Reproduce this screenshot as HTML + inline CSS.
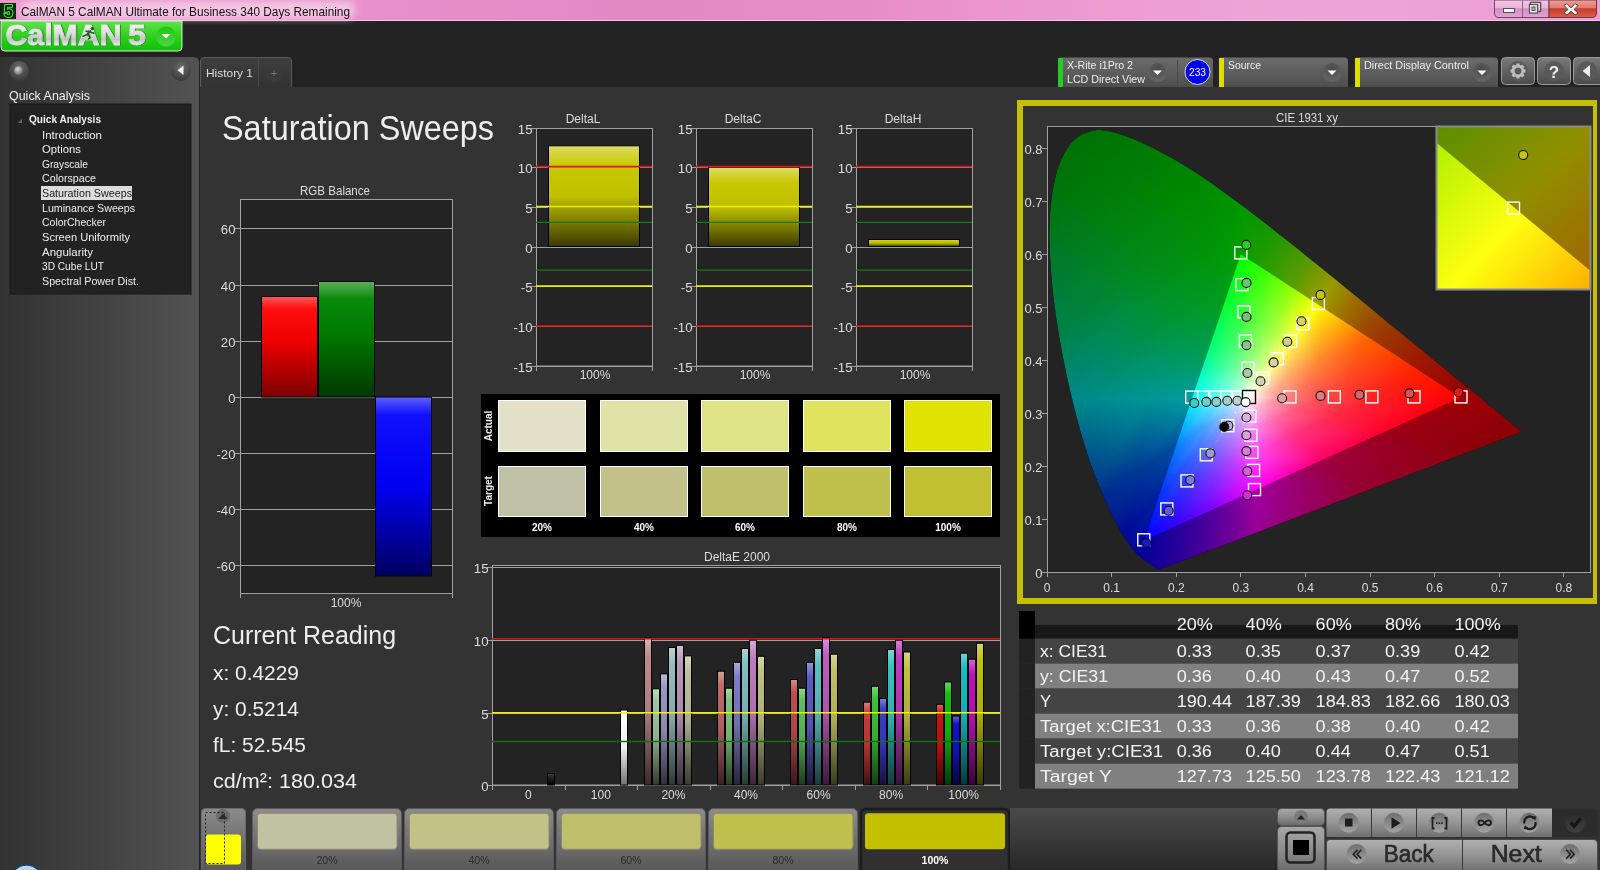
<!DOCTYPE html>
<html><head><meta charset="utf-8"><title>CalMAN 5</title>
<style>html,body{margin:0;padding:0;background:#232323;overflow:hidden;width:1600px;height:870px}svg{display:block}text{font-family:"Liberation Sans", sans-serif}.pl{mix-blend-mode:plus-lighter}</style></head>
<body><svg width="1600" height="870" viewBox="0 0 1600 870" style='font-family:"Liberation Sans", sans-serif'>
<defs><linearGradient id="gTitle" x1="0" y1="0" x2="1" y2="0"><stop offset="0" stop-color="#ea98cf"/><stop offset="0.25" stop-color="#e78fca"/><stop offset="0.4" stop-color="#e488c4"/><stop offset="0.55" stop-color="#e98dc9"/><stop offset="0.65" stop-color="#ec98d0"/><stop offset="0.8" stop-color="#eea4d6"/><stop offset="1" stop-color="#ee9ed4"/></linearGradient><linearGradient id="gGlow" x1="0" y1="0" x2="1" y2="0"><stop offset="0" stop-color="#f3c2e2"/><stop offset="0.85" stop-color="#f2bfe0"/><stop offset="1" stop-color="#f2bfe0"/></linearGradient><filter id="fBlur" x="-0.1" y="-1" width="1.2" height="3"><feGaussianBlur stdDeviation="4 3"/></filter><linearGradient id="gWB" x1="0" y1="0" x2="0" y2="1"><stop offset="0" stop-color="#f4c6e6"/><stop offset="0.45" stop-color="#eab2da"/><stop offset="0.5" stop-color="#d68ec0"/><stop offset="1" stop-color="#e2a2d2"/></linearGradient><linearGradient id="gWC" x1="0" y1="0" x2="0" y2="1"><stop offset="0" stop-color="#f0a0a0"/><stop offset="0.45" stop-color="#e07a6a"/><stop offset="0.5" stop-color="#c83a2a"/><stop offset="1" stop-color="#d86050"/></linearGradient><linearGradient id="gLogo" x1="0" y1="0" x2="0" y2="1"><stop offset="0" stop-color="#62e24e"/><stop offset="0.5" stop-color="#2ed01e"/><stop offset="1" stop-color="#10c008"/></linearGradient><linearGradient id="gSilver" gradientUnits="userSpaceOnUse" x1="0" y1="23" x2="0" y2="45"><stop offset="0" stop-color="#f4f4f4"/><stop offset="0.5" stop-color="#dcdcdc"/><stop offset="0.75" stop-color="#c4c4c4"/><stop offset="1" stop-color="#e8e8e8"/></linearGradient><linearGradient id="gLD" x1="0" y1="0" x2="0" y2="1"><stop offset="0" stop-color="#18c810"/><stop offset="1" stop-color="#50d848"/></linearGradient><linearGradient id="gSide" x1="0" y1="0" x2="1" y2="0"><stop offset="0" stop-color="#323232"/><stop offset="1" stop-color="#535353"/></linearGradient><radialGradient id="gBtnC" cx="0.5" cy="0.3" r="0.7"><stop offset="0" stop-color="#6a6a6a"/><stop offset="1" stop-color="#3a3a3a"/></radialGradient><radialGradient id="gBall" cx="0.4" cy="0.35" r="0.7"><stop offset="0" stop-color="#d8d8d8"/><stop offset="1" stop-color="#6a6a6a"/></radialGradient><linearGradient id="gTab" x1="0" y1="0" x2="0" y2="1"><stop offset="0" stop-color="#3e3e3e"/><stop offset="1" stop-color="#333333"/></linearGradient><linearGradient id="gDev" x1="0" y1="0" x2="0" y2="1"><stop offset="0" stop-color="#6c6c6c"/><stop offset="1" stop-color="#4e4e4e"/></linearGradient><radialGradient id="gDD" cx="0.5" cy="0.3" r="0.7"><stop offset="0" stop-color="#4a4a4a"/><stop offset="1" stop-color="#666"/></radialGradient><linearGradient id="gSq" x1="0" y1="0" x2="0" y2="1"><stop offset="0" stop-color="#7a7a7a"/><stop offset="1" stop-color="#4a4a4a"/></linearGradient><linearGradient id="gRed" x1="0" y1="0" x2="0" y2="1"><stop offset="0" stop-color="#ff5a5a"/><stop offset="0.12" stop-color="#ff1010"/><stop offset="0.45" stop-color="#ee0000"/><stop offset="1" stop-color="#7a0000"/></linearGradient><linearGradient id="gGrn" x1="0" y1="0" x2="0" y2="1"><stop offset="0" stop-color="#5cb05c"/><stop offset="0.15" stop-color="#0a8a0a"/><stop offset="0.45" stop-color="#007a00"/><stop offset="1" stop-color="#003800"/></linearGradient><linearGradient id="gBlu" x1="0" y1="0" x2="0" y2="1"><stop offset="0" stop-color="#6060ff"/><stop offset="0.1" stop-color="#1010ff"/><stop offset="0.5" stop-color="#0000f0"/><stop offset="1" stop-color="#000060"/></linearGradient><linearGradient id="gYel" x1="0" y1="0" x2="0" y2="1"><stop offset="0" stop-color="#dcdc66"/><stop offset="0.2" stop-color="#c8c800"/><stop offset="0.5" stop-color="#c0c000"/><stop offset="1" stop-color="#3a3a00"/></linearGradient><linearGradient id="gb1" x1="0" y1="0" x2="0" y2="1"><stop offset="0" stop-color="#d6b3b3"/><stop offset="0.12" stop-color="#c08a8a"/><stop offset="0.5" stop-color="#ad7c7c"/><stop offset="1" stop-color="#3a2929"/></linearGradient><linearGradient id="gb2" x1="0" y1="0" x2="0" y2="1"><stop offset="0" stop-color="#c1d9c1"/><stop offset="0.12" stop-color="#a0c4a0"/><stop offset="0.5" stop-color="#90b090"/><stop offset="1" stop-color="#303b30"/></linearGradient><linearGradient id="gb3" x1="0" y1="0" x2="0" y2="1"><stop offset="0" stop-color="#bcbcd9"/><stop offset="0.12" stop-color="#9898c4"/><stop offset="0.5" stop-color="#8989b0"/><stop offset="1" stop-color="#2e2e3b"/></linearGradient><linearGradient id="gb4" x1="0" y1="0" x2="0" y2="1"><stop offset="0" stop-color="#bcd3d3"/><stop offset="0.12" stop-color="#98bcbc"/><stop offset="0.5" stop-color="#89a9a9"/><stop offset="1" stop-color="#2e3838"/></linearGradient><linearGradient id="gb5" x1="0" y1="0" x2="0" y2="1"><stop offset="0" stop-color="#d3bcd3"/><stop offset="0.12" stop-color="#bc98bc"/><stop offset="0.5" stop-color="#a989a9"/><stop offset="1" stop-color="#382e38"/></linearGradient><linearGradient id="gb6" x1="0" y1="0" x2="0" y2="1"><stop offset="0" stop-color="#d6d6c1"/><stop offset="0.12" stop-color="#c0c0a0"/><stop offset="0.5" stop-color="#adad90"/><stop offset="1" stop-color="#3a3a30"/></linearGradient><linearGradient id="gb7" x1="0" y1="0" x2="0" y2="1"><stop offset="0" stop-color="#d69e9e"/><stop offset="0.12" stop-color="#c06a6a"/><stop offset="0.5" stop-color="#ad5f5f"/><stop offset="1" stop-color="#3a2020"/></linearGradient><linearGradient id="gb8" x1="0" y1="0" x2="0" y2="1"><stop offset="0" stop-color="#acd9ac"/><stop offset="0.12" stop-color="#80c480"/><stop offset="0.5" stop-color="#73b073"/><stop offset="1" stop-color="#263b26"/></linearGradient><linearGradient id="gb9" x1="0" y1="0" x2="0" y2="1"><stop offset="0" stop-color="#aaaadb"/><stop offset="0.12" stop-color="#7c7cc8"/><stop offset="0.5" stop-color="#7070b4"/><stop offset="1" stop-color="#25253c"/></linearGradient><linearGradient id="gb10" x1="0" y1="0" x2="0" y2="1"><stop offset="0" stop-color="#acd6d6"/><stop offset="0.12" stop-color="#80c0c0"/><stop offset="0.5" stop-color="#73adad"/><stop offset="1" stop-color="#263a3a"/></linearGradient><linearGradient id="gb11" x1="0" y1="0" x2="0" y2="1"><stop offset="0" stop-color="#d6aad6"/><stop offset="0.12" stop-color="#c07cc0"/><stop offset="0.5" stop-color="#ad70ad"/><stop offset="1" stop-color="#3a253a"/></linearGradient><linearGradient id="gb12" x1="0" y1="0" x2="0" y2="1"><stop offset="0" stop-color="#d6d6af"/><stop offset="0.12" stop-color="#c0c084"/><stop offset="0.5" stop-color="#adad77"/><stop offset="1" stop-color="#3a3a28"/></linearGradient><linearGradient id="gb13" x1="0" y1="0" x2="0" y2="1"><stop offset="0" stop-color="#d68c8c"/><stop offset="0.12" stop-color="#c04e4e"/><stop offset="0.5" stop-color="#ad4646"/><stop offset="1" stop-color="#3a1717"/></linearGradient><linearGradient id="gb14" x1="0" y1="0" x2="0" y2="1"><stop offset="0" stop-color="#95d695"/><stop offset="0.12" stop-color="#5cc05c"/><stop offset="0.5" stop-color="#53ad53"/><stop offset="1" stop-color="#1c3a1c"/></linearGradient><linearGradient id="gb15" x1="0" y1="0" x2="0" y2="1"><stop offset="0" stop-color="#9595db"/><stop offset="0.12" stop-color="#5c5cc8"/><stop offset="0.5" stop-color="#5353b4"/><stop offset="1" stop-color="#1c1c3c"/></linearGradient><linearGradient id="gb16" x1="0" y1="0" x2="0" y2="1"><stop offset="0" stop-color="#95d6d6"/><stop offset="0.12" stop-color="#5cc0c0"/><stop offset="0.5" stop-color="#53adad"/><stop offset="1" stop-color="#1c3a3a"/></linearGradient><linearGradient id="gb17" x1="0" y1="0" x2="0" y2="1"><stop offset="0" stop-color="#d695d6"/><stop offset="0.12" stop-color="#c05cc0"/><stop offset="0.5" stop-color="#ad53ad"/><stop offset="1" stop-color="#3a1c3a"/></linearGradient><linearGradient id="gb18" x1="0" y1="0" x2="0" y2="1"><stop offset="0" stop-color="#d6d699"/><stop offset="0.12" stop-color="#c0c062"/><stop offset="0.5" stop-color="#adad58"/><stop offset="1" stop-color="#3a3a1d"/></linearGradient><linearGradient id="gb19" x1="0" y1="0" x2="0" y2="1"><stop offset="0" stop-color="#db8080"/><stop offset="0.12" stop-color="#c83c3c"/><stop offset="0.5" stop-color="#b43636"/><stop offset="1" stop-color="#3c1212"/></linearGradient><linearGradient id="gb20" x1="0" y1="0" x2="0" y2="1"><stop offset="0" stop-color="#80d680"/><stop offset="0.12" stop-color="#3cc03c"/><stop offset="0.5" stop-color="#36ad36"/><stop offset="1" stop-color="#123a12"/></linearGradient><linearGradient id="gb21" x1="0" y1="0" x2="0" y2="1"><stop offset="0" stop-color="#8080db"/><stop offset="0.12" stop-color="#3c3cc8"/><stop offset="0.5" stop-color="#3636b4"/><stop offset="1" stop-color="#12123c"/></linearGradient><linearGradient id="gb22" x1="0" y1="0" x2="0" y2="1"><stop offset="0" stop-color="#80d6d6"/><stop offset="0.12" stop-color="#3cc0c0"/><stop offset="0.5" stop-color="#36adad"/><stop offset="1" stop-color="#123a3a"/></linearGradient><linearGradient id="gb23" x1="0" y1="0" x2="0" y2="1"><stop offset="0" stop-color="#d680d6"/><stop offset="0.12" stop-color="#c03cc0"/><stop offset="0.5" stop-color="#ad36ad"/><stop offset="1" stop-color="#3a123a"/></linearGradient><linearGradient id="gb24" x1="0" y1="0" x2="0" y2="1"><stop offset="0" stop-color="#d6d683"/><stop offset="0.12" stop-color="#c0c040"/><stop offset="0.5" stop-color="#adad3a"/><stop offset="1" stop-color="#3a3a13"/></linearGradient><linearGradient id="gb25" x1="0" y1="0" x2="0" y2="1"><stop offset="0" stop-color="#e06464"/><stop offset="0.12" stop-color="#d01010"/><stop offset="0.5" stop-color="#bb0e0e"/><stop offset="1" stop-color="#3e0505"/></linearGradient><linearGradient id="gb26" x1="0" y1="0" x2="0" y2="1"><stop offset="0" stop-color="#64d664"/><stop offset="0.12" stop-color="#10c010"/><stop offset="0.5" stop-color="#0ead0e"/><stop offset="1" stop-color="#053a05"/></linearGradient><linearGradient id="gb27" x1="0" y1="0" x2="0" y2="1"><stop offset="0" stop-color="#6464e0"/><stop offset="0.12" stop-color="#1010d0"/><stop offset="0.5" stop-color="#0e0ebb"/><stop offset="1" stop-color="#05053e"/></linearGradient><linearGradient id="gb28" x1="0" y1="0" x2="0" y2="1"><stop offset="0" stop-color="#64d6d6"/><stop offset="0.12" stop-color="#10c0c0"/><stop offset="0.5" stop-color="#0eadad"/><stop offset="1" stop-color="#053a3a"/></linearGradient><linearGradient id="gb29" x1="0" y1="0" x2="0" y2="1"><stop offset="0" stop-color="#d664d6"/><stop offset="0.12" stop-color="#c010c0"/><stop offset="0.5" stop-color="#ad0ead"/><stop offset="1" stop-color="#3a053a"/></linearGradient><linearGradient id="gb30" x1="0" y1="0" x2="0" y2="1"><stop offset="0" stop-color="#d6d664"/><stop offset="0.12" stop-color="#c0c010"/><stop offset="0.5" stop-color="#adad0e"/><stop offset="1" stop-color="#3a3a05"/></linearGradient><linearGradient id="gbW" x1="0" y1="0" x2="0" y2="1"><stop offset="0" stop-color="#ffffff"/><stop offset="0.5" stop-color="#f0f0f0"/><stop offset="1" stop-color="#707070"/></linearGradient><linearGradient id="gbK" x1="0" y1="0" x2="0" y2="1"><stop offset="0" stop-color="#3a3a3a"/><stop offset="1" stop-color="#000"/></linearGradient><clipPath id="cpLoc"><path d="M1159.6,569.6 C1159.5,569.7 1159.5,569.7 1159.4,569.7 C1159.3,569.7 1159.2,569.7 1159.1,569.8 C1158.9,569.8 1158.8,569.8 1158.6,569.8 C1158.4,569.7 1158.1,569.7 1157.8,569.6 C1157.6,569.5 1157.4,569.4 1157.1,569.2 C1156.8,569.1 1156.6,568.9 1156.2,568.6 C1155.8,568.4 1155.4,568.1 1154.9,567.7 C1154.4,567.4 1153.9,567.0 1153.3,566.5 C1152.7,566.1 1152.0,565.6 1151.2,565.0 C1150.3,564.4 1149.4,563.7 1148.3,562.9 C1147.2,562.1 1146.0,561.3 1144.6,560.3 C1143.3,559.2 1141.8,558.1 1140.1,556.6 C1138.5,555.0 1136.8,553.6 1134.6,551.2 C1132.5,548.7 1130.1,545.8 1127.3,541.7 C1124.5,537.5 1121.4,532.9 1117.9,526.3 C1114.4,519.7 1110.5,512.0 1106.1,502.0 C1101.7,491.9 1096.4,480.3 1091.5,465.9 C1086.5,451.6 1081.3,434.7 1076.4,415.9 C1071.6,397.2 1066.3,375.1 1062.3,353.6 C1058.3,332.1 1054.5,308.3 1052.4,286.9 C1050.3,265.6 1049.0,244.0 1049.6,225.3 C1050.2,206.5 1052.3,188.6 1056.1,174.7 C1059.8,160.8 1065.7,149.3 1072.2,141.9 C1078.7,134.6 1087.0,131.6 1095.1,130.4 C1103.2,129.1 1112.2,131.9 1120.9,134.4 C1129.5,136.9 1138.6,141.2 1147.0,145.2 C1155.5,149.1 1163.6,153.5 1171.7,158.1 C1179.8,162.6 1187.6,167.5 1195.4,172.5 C1203.3,177.6 1211.1,182.9 1218.8,188.4 C1226.6,193.9 1234.2,199.6 1241.9,205.4 C1249.6,211.2 1257.3,217.1 1265.0,223.1 C1272.7,229.1 1280.4,235.2 1288.1,241.3 C1295.8,247.4 1303.5,253.6 1311.1,259.8 C1318.8,266.0 1326.4,272.2 1334.0,278.3 C1341.5,284.4 1349.0,290.6 1356.4,296.6 C1363.8,302.6 1371.1,308.6 1378.2,314.4 C1385.3,320.2 1392.3,326.0 1399.0,331.5 C1405.8,337.0 1412.4,342.4 1418.7,347.5 C1424.9,352.6 1431.0,357.6 1436.6,362.2 C1442.2,366.7 1447.3,370.9 1452.1,374.9 C1457.0,378.9 1461.7,382.7 1465.8,386.1 C1470.0,389.5 1473.8,392.5 1477.2,395.3 C1480.6,398.1 1483.7,400.6 1486.4,402.9 C1489.2,405.1 1491.6,407.1 1493.8,408.9 C1496.0,410.7 1497.9,412.2 1499.7,413.7 C1501.5,415.1 1503.0,416.4 1504.4,417.5 C1505.8,418.7 1507.1,419.8 1508.3,420.8 C1509.5,421.8 1510.6,422.6 1511.6,423.4 C1512.5,424.2 1513.4,424.9 1514.2,425.5 C1514.9,426.1 1515.3,426.5 1516.1,427.1 C1516.8,427.7 1517.9,428.5 1518.7,429.2 C1519.5,429.9 1520.4,430.6 1520.9,431.0 C1521.4,431.4 1521.6,431.6 1521.7,431.7 Z"/></clipPath><linearGradient id="g1" gradientUnits="userSpaceOnUse" x1="1249.10" y1="397.93" x2="1258.59" y2="383.37"><stop stop-color="#ffffff"/><stop offset="1"/></linearGradient><linearGradient id="g2" gradientUnits="userSpaceOnUse" x1="1280.82" y1="397.85" x2="1279.71" y2="392.05"><stop stop-color="#ff8b8b"/><stop offset="1"/></linearGradient><linearGradient id="g3" gradientUnits="userSpaceOnUse" x1="1273.69" y1="393.21" x2="1273.70" y2="397.87"><stop stop-color="#ffa99a"/><stop offset="1"/></linearGradient><linearGradient id="g4" gradientUnits="userSpaceOnUse" x1="1280.82" y1="397.85" x2="1293.47" y2="378.44"><stop stop-color="#ff8b8b"/><stop offset="1"/></linearGradient><linearGradient id="g5" gradientUnits="userSpaceOnUse" x1="1323.11" y1="397.74" x2="1316.64" y2="382.57"><stop stop-color="#ff4848"/><stop offset="1"/></linearGradient><linearGradient id="g6" gradientUnits="userSpaceOnUse" x1="1306.48" y1="386.91" x2="1306.50" y2="397.79"><stop stop-color="#ff6f55"/><stop offset="1"/></linearGradient><linearGradient id="g7" gradientUnits="userSpaceOnUse" x1="1280.82" y1="397.85" x2="1279.71" y2="392.05"><stop stop-color="#ff8b8b"/><stop offset="1"/></linearGradient><linearGradient id="g8" gradientUnits="userSpaceOnUse" x1="1306.48" y1="386.91" x2="1293.83" y2="406.32"><stop stop-color="#ff6f55"/><stop offset="1"/></linearGradient><linearGradient id="g9" gradientUnits="userSpaceOnUse" x1="1273.69" y1="393.21" x2="1276.46" y2="399.71"><stop stop-color="#ffa99a"/><stop offset="1"/></linearGradient><linearGradient id="g10" gradientUnits="userSpaceOnUse" x1="1323.11" y1="397.74" x2="1338.92" y2="373.48"><stop stop-color="#ff4848"/><stop offset="1"/></linearGradient><linearGradient id="g11" gradientUnits="userSpaceOnUse" x1="1375.97" y1="397.61" x2="1356.41" y2="372.16"><stop stop-color="#ff2020"/><stop offset="1"/></linearGradient><linearGradient id="g12" gradientUnits="userSpaceOnUse" x1="1347.45" y1="379.04" x2="1347.50" y2="397.68"><stop stop-color="#ff4727"/><stop offset="1"/></linearGradient><linearGradient id="g13" gradientUnits="userSpaceOnUse" x1="1323.11" y1="397.74" x2="1320.51" y2="384.21"><stop stop-color="#ff4848"/><stop offset="1"/></linearGradient><linearGradient id="g14" gradientUnits="userSpaceOnUse" x1="1347.45" y1="379.04" x2="1331.64" y2="403.31"><stop stop-color="#ff4727"/><stop offset="1"/></linearGradient><linearGradient id="g15" gradientUnits="userSpaceOnUse" x1="1306.48" y1="386.91" x2="1317.88" y2="401.76"><stop stop-color="#ff6f55"/><stop offset="1"/></linearGradient><linearGradient id="g16" gradientUnits="userSpaceOnUse" x1="1375.97" y1="397.61" x2="1401.26" y2="358.78"><stop stop-color="#ff2020"/><stop offset="1"/></linearGradient><linearGradient id="g17" gradientUnits="userSpaceOnUse" x1="1460.54" y1="397.40" x2="1425.60" y2="355.86"><stop stop-color="#ff0000"/><stop offset="1"/></linearGradient><linearGradient id="g18" gradientUnits="userSpaceOnUse" x1="1413.02" y1="366.44" x2="1413.10" y2="397.52"><stop stop-color="#ff2600"/><stop offset="1"/></linearGradient><linearGradient id="g19" gradientUnits="userSpaceOnUse" x1="1375.97" y1="397.61" x2="1371.51" y2="374.42"><stop stop-color="#ff2020"/><stop offset="1"/></linearGradient><linearGradient id="g20" gradientUnits="userSpaceOnUse" x1="1413.02" y1="366.44" x2="1387.72" y2="405.27"><stop stop-color="#ff2600"/><stop offset="1"/></linearGradient><linearGradient id="g21" gradientUnits="userSpaceOnUse" x1="1347.45" y1="379.04" x2="1368.42" y2="403.96"><stop stop-color="#ff4727"/><stop offset="1"/></linearGradient><linearGradient id="g22" gradientUnits="userSpaceOnUse" x1="1249.10" y1="397.93" x2="1258.59" y2="383.37"><stop stop-color="#ffffff"/><stop offset="1"/></linearGradient><linearGradient id="g23" gradientUnits="userSpaceOnUse" x1="1273.69" y1="393.21" x2="1270.16" y2="386.63"><stop stop-color="#ffa99a"/><stop offset="1"/></linearGradient><linearGradient id="g24" gradientUnits="userSpaceOnUse" x1="1266.56" y1="388.56" x2="1267.68" y2="394.36"><stop stop-color="#ffcfad"/><stop offset="1"/></linearGradient><linearGradient id="g25" gradientUnits="userSpaceOnUse" x1="1273.69" y1="393.21" x2="1286.34" y2="373.79"><stop stop-color="#ffa99a"/><stop offset="1"/></linearGradient><linearGradient id="g26" gradientUnits="userSpaceOnUse" x1="1306.48" y1="386.91" x2="1292.26" y2="373.51"><stop stop-color="#ff6f55"/><stop offset="1"/></linearGradient><linearGradient id="g27" gradientUnits="userSpaceOnUse" x1="1289.84" y1="376.07" x2="1292.44" y2="389.60"><stop stop-color="#ffa768"/><stop offset="1"/></linearGradient><linearGradient id="g28" gradientUnits="userSpaceOnUse" x1="1273.69" y1="393.21" x2="1270.16" y2="386.63"><stop stop-color="#ffa99a"/><stop offset="1"/></linearGradient><linearGradient id="g29" gradientUnits="userSpaceOnUse" x1="1289.84" y1="376.07" x2="1277.19" y2="395.49"><stop stop-color="#ffa768"/><stop offset="1"/></linearGradient><linearGradient id="g30" gradientUnits="userSpaceOnUse" x1="1266.56" y1="388.56" x2="1272.66" y2="394.31"><stop stop-color="#ffcfad"/><stop offset="1"/></linearGradient><linearGradient id="g31" gradientUnits="userSpaceOnUse" x1="1306.48" y1="386.91" x2="1322.29" y2="362.64"><stop stop-color="#ff6f55"/><stop offset="1"/></linearGradient><linearGradient id="g32" gradientUnits="userSpaceOnUse" x1="1347.45" y1="379.04" x2="1316.96" y2="364.66"><stop stop-color="#ff4727"/><stop offset="1"/></linearGradient><linearGradient id="g33" gradientUnits="userSpaceOnUse" x1="1318.94" y1="360.46" x2="1323.40" y2="383.66"><stop stop-color="#ff8733"/><stop offset="1"/></linearGradient><linearGradient id="g34" gradientUnits="userSpaceOnUse" x1="1306.48" y1="386.91" x2="1298.24" y2="371.57"><stop stop-color="#ff6f55"/><stop offset="1"/></linearGradient><linearGradient id="g35" gradientUnits="userSpaceOnUse" x1="1318.94" y1="360.46" x2="1303.13" y2="384.73"><stop stop-color="#ff8733"/><stop offset="1"/></linearGradient><linearGradient id="g36" gradientUnits="userSpaceOnUse" x1="1289.84" y1="376.07" x2="1307.63" y2="384.46"><stop stop-color="#ffa768"/><stop offset="1"/></linearGradient><linearGradient id="g37" gradientUnits="userSpaceOnUse" x1="1347.45" y1="379.04" x2="1372.75" y2="340.21"><stop stop-color="#ff4727"/><stop offset="1"/></linearGradient><linearGradient id="g38" gradientUnits="userSpaceOnUse" x1="1413.02" y1="366.44" x2="1361.52" y2="345.10"><stop stop-color="#ff2600"/><stop offset="1"/></linearGradient><linearGradient id="g39" gradientUnits="userSpaceOnUse" x1="1365.50" y1="335.48" x2="1372.93" y2="374.14"><stop stop-color="#ff6900"/><stop offset="1"/></linearGradient><linearGradient id="g40" gradientUnits="userSpaceOnUse" x1="1347.45" y1="379.04" x2="1333.34" y2="352.73"><stop stop-color="#ff4727"/><stop offset="1"/></linearGradient><linearGradient id="g41" gradientUnits="userSpaceOnUse" x1="1365.50" y1="335.48" x2="1340.20" y2="374.31"><stop stop-color="#ff6900"/><stop offset="1"/></linearGradient><linearGradient id="g42" gradientUnits="userSpaceOnUse" x1="1318.94" y1="360.46" x2="1349.85" y2="373.27"><stop stop-color="#ff8733"/><stop offset="1"/></linearGradient><linearGradient id="g43" gradientUnits="userSpaceOnUse" x1="1249.10" y1="397.93" x2="1258.59" y2="383.37"><stop stop-color="#ffffff"/><stop offset="1"/></linearGradient><linearGradient id="g44" gradientUnits="userSpaceOnUse" x1="1266.56" y1="388.56" x2="1259.73" y2="383.52"><stop stop-color="#ffcfad"/><stop offset="1"/></linearGradient><linearGradient id="g45" gradientUnits="userSpaceOnUse" x1="1259.44" y1="383.92" x2="1262.96" y2="390.49"><stop stop-color="#ffffc5"/><stop offset="1"/></linearGradient><linearGradient id="g46" gradientUnits="userSpaceOnUse" x1="1266.56" y1="388.56" x2="1279.21" y2="369.15"><stop stop-color="#ffcfad"/><stop offset="1"/></linearGradient><linearGradient id="g47" gradientUnits="userSpaceOnUse" x1="1289.84" y1="376.07" x2="1271.60" y2="370.87"><stop stop-color="#ffa768"/><stop offset="1"/></linearGradient><linearGradient id="g48" gradientUnits="userSpaceOnUse" x1="1273.21" y1="365.24" x2="1281.44" y2="380.58"><stop stop-color="#ffff87"/><stop offset="1"/></linearGradient><linearGradient id="g49" gradientUnits="userSpaceOnUse" x1="1266.56" y1="388.56" x2="1259.73" y2="383.52"><stop stop-color="#ffcfad"/><stop offset="1"/></linearGradient><linearGradient id="g50" gradientUnits="userSpaceOnUse" x1="1273.21" y1="365.24" x2="1260.56" y2="384.65"><stop stop-color="#ffff87"/><stop offset="1"/></linearGradient><linearGradient id="g51" gradientUnits="userSpaceOnUse" x1="1259.44" y1="383.92" x2="1267.25" y2="386.15"><stop stop-color="#ffffc5"/><stop offset="1"/></linearGradient><linearGradient id="g52" gradientUnits="userSpaceOnUse" x1="1289.84" y1="376.07" x2="1305.66" y2="351.80"><stop stop-color="#ffa768"/><stop offset="1"/></linearGradient><linearGradient id="g53" gradientUnits="userSpaceOnUse" x1="1318.94" y1="360.46" x2="1290.12" y2="359.96"><stop stop-color="#ff8733"/><stop offset="1"/></linearGradient><linearGradient id="g54" gradientUnits="userSpaceOnUse" x1="1290.43" y1="341.88" x2="1304.54" y2="368.19"><stop stop-color="#ffff49"/><stop offset="1"/></linearGradient><linearGradient id="g55" gradientUnits="userSpaceOnUse" x1="1289.84" y1="376.07" x2="1273.89" y2="364.31"><stop stop-color="#ffa768"/><stop offset="1"/></linearGradient><linearGradient id="g56" gradientUnits="userSpaceOnUse" x1="1290.43" y1="341.88" x2="1274.62" y2="366.15"><stop stop-color="#ffff49"/><stop offset="1"/></linearGradient><linearGradient id="g57" gradientUnits="userSpaceOnUse" x1="1273.21" y1="365.24" x2="1290.02" y2="365.53"><stop stop-color="#ffff87"/><stop offset="1"/></linearGradient><linearGradient id="g58" gradientUnits="userSpaceOnUse" x1="1318.94" y1="360.46" x2="1344.24" y2="321.63"><stop stop-color="#ff8733"/><stop offset="1"/></linearGradient><linearGradient id="g59" gradientUnits="userSpaceOnUse" x1="1365.50" y1="335.48" x2="1318.53" y2="336.29"><stop stop-color="#ff6900"/><stop offset="1"/></linearGradient><linearGradient id="g60" gradientUnits="userSpaceOnUse" x1="1317.98" y1="304.52" x2="1341.50" y2="348.36"><stop stop-color="#ffff00"/><stop offset="1"/></linearGradient><linearGradient id="g61" gradientUnits="userSpaceOnUse" x1="1318.94" y1="360.46" x2="1291.60" y2="340.30"><stop stop-color="#ff8733"/><stop offset="1"/></linearGradient><linearGradient id="g62" gradientUnits="userSpaceOnUse" x1="1317.98" y1="304.52" x2="1292.68" y2="343.35"><stop stop-color="#ffff00"/><stop offset="1"/></linearGradient><linearGradient id="g63" gradientUnits="userSpaceOnUse" x1="1290.43" y1="341.88" x2="1318.62" y2="341.40"><stop stop-color="#ffff49"/><stop offset="1"/></linearGradient><linearGradient id="g64" gradientUnits="userSpaceOnUse" x1="1249.10" y1="397.93" x2="1258.59" y2="383.37"><stop stop-color="#ffffff"/><stop offset="1"/></linearGradient><linearGradient id="g65" gradientUnits="userSpaceOnUse" x1="1259.44" y1="383.92" x2="1255.24" y2="382.27"><stop stop-color="#ffffc5"/><stop offset="1"/></linearGradient><linearGradient id="g66" gradientUnits="userSpaceOnUse" x1="1255.58" y1="381.41" x2="1259.28" y2="384.13"><stop stop-color="#e3ffbe"/><stop offset="1"/></linearGradient><linearGradient id="g67" gradientUnits="userSpaceOnUse" x1="1259.44" y1="383.92" x2="1272.09" y2="364.50"><stop stop-color="#ffffc5"/><stop offset="1"/></linearGradient><linearGradient id="g68" gradientUnits="userSpaceOnUse" x1="1273.21" y1="365.24" x2="1263.45" y2="363.33"><stop stop-color="#ffff87"/><stop offset="1"/></linearGradient><linearGradient id="g69" gradientUnits="userSpaceOnUse" x1="1264.22" y1="359.38" x2="1272.84" y2="365.74"><stop stop-color="#c6ff7c"/><stop offset="1"/></linearGradient><linearGradient id="g70" gradientUnits="userSpaceOnUse" x1="1259.44" y1="383.92" x2="1255.24" y2="382.27"><stop stop-color="#ffffc5"/><stop offset="1"/></linearGradient><linearGradient id="g71" gradientUnits="userSpaceOnUse" x1="1264.22" y1="359.38" x2="1251.57" y2="378.79"><stop stop-color="#c6ff7c"/><stop offset="1"/></linearGradient><linearGradient id="g72" gradientUnits="userSpaceOnUse" x1="1255.58" y1="381.41" x2="1259.77" y2="382.22"><stop stop-color="#e3ffbe"/><stop offset="1"/></linearGradient><linearGradient id="g73" gradientUnits="userSpaceOnUse" x1="1273.21" y1="365.24" x2="1289.02" y2="340.97"><stop stop-color="#ffff87"/><stop offset="1"/></linearGradient><linearGradient id="g74" gradientUnits="userSpaceOnUse" x1="1290.43" y1="341.88" x2="1274.52" y2="341.03"><stop stop-color="#ffff49"/><stop offset="1"/></linearGradient><linearGradient id="g75" gradientUnits="userSpaceOnUse" x1="1275.01" y1="331.84" x2="1289.80" y2="342.74"><stop stop-color="#acff41"/><stop offset="1"/></linearGradient><linearGradient id="g76" gradientUnits="userSpaceOnUse" x1="1273.21" y1="365.24" x2="1263.43" y2="361.40"><stop stop-color="#ffff87"/><stop offset="1"/></linearGradient><linearGradient id="g77" gradientUnits="userSpaceOnUse" x1="1275.01" y1="331.84" x2="1259.20" y2="356.11"><stop stop-color="#acff41"/><stop offset="1"/></linearGradient><linearGradient id="g78" gradientUnits="userSpaceOnUse" x1="1264.22" y1="359.38" x2="1273.50" y2="359.88"><stop stop-color="#c6ff7c"/><stop offset="1"/></linearGradient><linearGradient id="g79" gradientUnits="userSpaceOnUse" x1="1290.43" y1="341.88" x2="1315.73" y2="303.05"><stop stop-color="#ffff49"/><stop offset="1"/></linearGradient><linearGradient id="g80" gradientUnits="userSpaceOnUse" x1="1317.98" y1="304.52" x2="1291.74" y2="303.62"><stop stop-color="#ffff00"/><stop offset="1"/></linearGradient><linearGradient id="g81" gradientUnits="userSpaceOnUse" x1="1292.29" y1="287.78" x2="1316.93" y2="305.95"><stop stop-color="#90ff00"/><stop offset="1"/></linearGradient><linearGradient id="g82" gradientUnits="userSpaceOnUse" x1="1290.43" y1="341.88" x2="1273.66" y2="335.31"><stop stop-color="#ffff49"/><stop offset="1"/></linearGradient><linearGradient id="g83" gradientUnits="userSpaceOnUse" x1="1292.29" y1="287.78" x2="1266.99" y2="326.61"><stop stop-color="#90ff00"/><stop offset="1"/></linearGradient><linearGradient id="g84" gradientUnits="userSpaceOnUse" x1="1275.01" y1="331.84" x2="1290.76" y2="332.38"><stop stop-color="#acff41"/><stop offset="1"/></linearGradient><linearGradient id="g85" gradientUnits="userSpaceOnUse" x1="1249.10" y1="397.93" x2="1258.59" y2="383.37"><stop stop-color="#ffffff"/><stop offset="1"/></linearGradient><linearGradient id="g86" gradientUnits="userSpaceOnUse" x1="1255.58" y1="381.41" x2="1251.46" y2="380.84"><stop stop-color="#e3ffbe"/><stop offset="1"/></linearGradient><linearGradient id="g87" gradientUnits="userSpaceOnUse" x1="1251.73" y1="378.90" x2="1255.92" y2="380.54"><stop stop-color="#c8ffb6"/><stop offset="1"/></linearGradient><linearGradient id="g88" gradientUnits="userSpaceOnUse" x1="1255.58" y1="381.41" x2="1268.23" y2="361.99"><stop stop-color="#e3ffbe"/><stop offset="1"/></linearGradient><linearGradient id="g89" gradientUnits="userSpaceOnUse" x1="1264.22" y1="359.38" x2="1255.30" y2="359.49"><stop stop-color="#c6ff7c"/><stop offset="1"/></linearGradient><linearGradient id="g90" gradientUnits="userSpaceOnUse" x1="1255.23" y1="353.52" x2="1265.01" y2="357.36"><stop stop-color="#95ff73"/><stop offset="1"/></linearGradient><linearGradient id="g91" gradientUnits="userSpaceOnUse" x1="1255.58" y1="381.41" x2="1251.46" y2="380.84"><stop stop-color="#e3ffbe"/><stop offset="1"/></linearGradient><linearGradient id="g92" gradientUnits="userSpaceOnUse" x1="1255.23" y1="353.52" x2="1242.58" y2="372.93"><stop stop-color="#95ff73"/><stop offset="1"/></linearGradient><linearGradient id="g93" gradientUnits="userSpaceOnUse" x1="1251.73" y1="378.90" x2="1255.55" y2="378.85"><stop stop-color="#c8ffb6"/><stop offset="1"/></linearGradient><linearGradient id="g94" gradientUnits="userSpaceOnUse" x1="1264.22" y1="359.38" x2="1280.03" y2="335.11"><stop stop-color="#c6ff7c"/><stop offset="1"/></linearGradient><linearGradient id="g95" gradientUnits="userSpaceOnUse" x1="1275.01" y1="331.84" x2="1261.04" y2="333.56"><stop stop-color="#acff41"/><stop offset="1"/></linearGradient><linearGradient id="g96" gradientUnits="userSpaceOnUse" x1="1259.60" y1="321.80" x2="1276.37" y2="328.37"><stop stop-color="#6aff3a"/><stop offset="1"/></linearGradient><linearGradient id="g97" gradientUnits="userSpaceOnUse" x1="1264.22" y1="359.38" x2="1254.60" y2="358.05"><stop stop-color="#c6ff7c"/><stop offset="1"/></linearGradient><linearGradient id="g98" gradientUnits="userSpaceOnUse" x1="1259.60" y1="321.80" x2="1243.79" y2="346.07"><stop stop-color="#6aff3a"/><stop offset="1"/></linearGradient><linearGradient id="g99" gradientUnits="userSpaceOnUse" x1="1255.23" y1="353.52" x2="1263.38" y2="352.52"><stop stop-color="#95ff73"/><stop offset="1"/></linearGradient><linearGradient id="g100" gradientUnits="userSpaceOnUse" x1="1275.01" y1="331.84" x2="1300.31" y2="293.01"><stop stop-color="#acff41"/><stop offset="1"/></linearGradient><linearGradient id="g101" gradientUnits="userSpaceOnUse" x1="1292.29" y1="287.78" x2="1269.35" y2="290.96"><stop stop-color="#90ff00"/><stop offset="1"/></linearGradient><linearGradient id="g102" gradientUnits="userSpaceOnUse" x1="1266.59" y1="271.04" x2="1294.55" y2="282.00"><stop stop-color="#3eff00"/><stop offset="1"/></linearGradient><linearGradient id="g103" gradientUnits="userSpaceOnUse" x1="1275.01" y1="331.84" x2="1258.53" y2="329.57"><stop stop-color="#acff41"/><stop offset="1"/></linearGradient><linearGradient id="g104" gradientUnits="userSpaceOnUse" x1="1266.59" y1="271.04" x2="1241.30" y2="309.87"><stop stop-color="#3eff00"/><stop offset="1"/></linearGradient><linearGradient id="g105" gradientUnits="userSpaceOnUse" x1="1259.60" y1="321.80" x2="1273.36" y2="319.89"><stop stop-color="#6aff3a"/><stop offset="1"/></linearGradient><linearGradient id="g106" gradientUnits="userSpaceOnUse" x1="1249.10" y1="397.93" x2="1258.59" y2="383.37"><stop stop-color="#ffffff"/><stop offset="1"/></linearGradient><linearGradient id="g107" gradientUnits="userSpaceOnUse" x1="1251.73" y1="378.90" x2="1248.03" y2="379.11"><stop stop-color="#c8ffb6"/><stop offset="1"/></linearGradient><linearGradient id="g108" gradientUnits="userSpaceOnUse" x1="1247.87" y1="376.39" x2="1252.00" y2="376.95"><stop stop-color="#b0ffb0"/><stop offset="1"/></linearGradient><linearGradient id="g109" gradientUnits="userSpaceOnUse" x1="1251.73" y1="378.90" x2="1264.38" y2="359.48"><stop stop-color="#c8ffb6"/><stop offset="1"/></linearGradient><linearGradient id="g110" gradientUnits="userSpaceOnUse" x1="1255.23" y1="353.52" x2="1247.50" y2="354.88"><stop stop-color="#95ff73"/><stop offset="1"/></linearGradient><linearGradient id="g111" gradientUnits="userSpaceOnUse" x1="1246.23" y1="347.66" x2="1255.85" y2="348.99"><stop stop-color="#6bff6b"/><stop offset="1"/></linearGradient><linearGradient id="g112" gradientUnits="userSpaceOnUse" x1="1251.73" y1="378.90" x2="1248.03" y2="379.11"><stop stop-color="#c8ffb6"/><stop offset="1"/></linearGradient><linearGradient id="g113" gradientUnits="userSpaceOnUse" x1="1246.23" y1="347.66" x2="1233.58" y2="367.07"><stop stop-color="#6bff6b"/><stop offset="1"/></linearGradient><linearGradient id="g114" gradientUnits="userSpaceOnUse" x1="1247.87" y1="376.39" x2="1251.18" y2="375.80"><stop stop-color="#b0ffb0"/><stop offset="1"/></linearGradient><linearGradient id="g115" gradientUnits="userSpaceOnUse" x1="1255.23" y1="353.52" x2="1271.04" y2="329.25"><stop stop-color="#95ff73"/><stop offset="1"/></linearGradient><linearGradient id="g116" gradientUnits="userSpaceOnUse" x1="1259.60" y1="321.80" x2="1247.67" y2="324.95"><stop stop-color="#6aff3a"/><stop offset="1"/></linearGradient><linearGradient id="g117" gradientUnits="userSpaceOnUse" x1="1244.18" y1="311.75" x2="1260.67" y2="314.02"><stop stop-color="#35ff35"/><stop offset="1"/></linearGradient><linearGradient id="g118" gradientUnits="userSpaceOnUse" x1="1255.23" y1="353.52" x2="1246.60" y2="354.01"><stop stop-color="#95ff73"/><stop offset="1"/></linearGradient><linearGradient id="g119" gradientUnits="userSpaceOnUse" x1="1244.18" y1="311.75" x2="1228.37" y2="336.02"><stop stop-color="#35ff35"/><stop offset="1"/></linearGradient><linearGradient id="g120" gradientUnits="userSpaceOnUse" x1="1246.23" y1="347.66" x2="1253.19" y2="345.82"><stop stop-color="#6bff6b"/><stop offset="1"/></linearGradient><linearGradient id="g121" gradientUnits="userSpaceOnUse" x1="1259.60" y1="321.80" x2="1284.90" y2="282.97"><stop stop-color="#6aff3a"/><stop offset="1"/></linearGradient><linearGradient id="g122" gradientUnits="userSpaceOnUse" x1="1266.59" y1="271.04" x2="1247.04" y2="276.46"><stop stop-color="#3eff00"/><stop offset="1"/></linearGradient><linearGradient id="g123" gradientUnits="userSpaceOnUse" x1="1240.90" y1="254.30" x2="1268.38" y2="258.09"><stop stop-color="#00ff00"/><stop offset="1"/></linearGradient><linearGradient id="g124" gradientUnits="userSpaceOnUse" x1="1259.60" y1="321.80" x2="1244.80" y2="322.64"><stop stop-color="#6aff3a"/><stop offset="1"/></linearGradient><linearGradient id="g125" gradientUnits="userSpaceOnUse" x1="1240.90" y1="254.30" x2="1215.60" y2="293.13"><stop stop-color="#00ff00"/><stop offset="1"/></linearGradient><linearGradient id="g126" gradientUnits="userSpaceOnUse" x1="1244.18" y1="311.75" x2="1255.92" y2="308.50"><stop stop-color="#35ff35"/><stop offset="1"/></linearGradient><linearGradient id="g127" gradientUnits="userSpaceOnUse" x1="1249.10" y1="397.93" x2="1241.46" y2="395.34"><stop stop-color="#ffffff"/><stop offset="1"/></linearGradient><linearGradient id="g128" gradientUnits="userSpaceOnUse" x1="1247.87" y1="376.39" x2="1243.86" y2="377.41"><stop stop-color="#b0ffb0"/><stop offset="1"/></linearGradient><linearGradient id="g129" gradientUnits="userSpaceOnUse" x1="1245.44" y1="383.58" x2="1248.28" y2="383.41"><stop stop-color="#b9ffc7"/><stop offset="1"/></linearGradient><linearGradient id="g130" gradientUnits="userSpaceOnUse" x1="1247.87" y1="376.39" x2="1237.68" y2="372.93"><stop stop-color="#b0ffb0"/><stop offset="1"/></linearGradient><linearGradient id="g131" gradientUnits="userSpaceOnUse" x1="1246.23" y1="347.66" x2="1234.63" y2="354.77"><stop stop-color="#6bff6b"/><stop offset="1"/></linearGradient><linearGradient id="g132" gradientUnits="userSpaceOnUse" x1="1240.55" y1="364.44" x2="1247.17" y2="364.06"><stop stop-color="#77ff92"/><stop offset="1"/></linearGradient><linearGradient id="g133" gradientUnits="userSpaceOnUse" x1="1247.87" y1="376.39" x2="1243.86" y2="377.41"><stop stop-color="#b0ffb0"/><stop offset="1"/></linearGradient><linearGradient id="g134" gradientUnits="userSpaceOnUse" x1="1240.55" y1="364.44" x2="1250.75" y2="367.89"><stop stop-color="#77ff92"/><stop offset="1"/></linearGradient><linearGradient id="g135" gradientUnits="userSpaceOnUse" x1="1245.44" y1="383.58" x2="1250.41" y2="380.53"><stop stop-color="#b9ffc7"/><stop offset="1"/></linearGradient><linearGradient id="g136" gradientUnits="userSpaceOnUse" x1="1246.23" y1="347.66" x2="1233.49" y2="343.34"><stop stop-color="#6bff6b"/><stop offset="1"/></linearGradient><linearGradient id="g137" gradientUnits="userSpaceOnUse" x1="1244.18" y1="311.75" x2="1228.81" y2="337.10"><stop stop-color="#35ff35"/><stop offset="1"/></linearGradient><linearGradient id="g138" gradientUnits="userSpaceOnUse" x1="1234.44" y1="340.51" x2="1245.79" y2="339.86"><stop stop-color="#3dff64"/><stop offset="1"/></linearGradient><linearGradient id="g139" gradientUnits="userSpaceOnUse" x1="1246.23" y1="347.66" x2="1236.88" y2="350.05"><stop stop-color="#6bff6b"/><stop offset="1"/></linearGradient><linearGradient id="g140" gradientUnits="userSpaceOnUse" x1="1234.44" y1="340.51" x2="1247.19" y2="344.83"><stop stop-color="#3dff64"/><stop offset="1"/></linearGradient><linearGradient id="g141" gradientUnits="userSpaceOnUse" x1="1240.55" y1="364.44" x2="1249.52" y2="349.65"><stop stop-color="#77ff92"/><stop offset="1"/></linearGradient><linearGradient id="g142" gradientUnits="userSpaceOnUse" x1="1244.18" y1="311.75" x2="1223.79" y2="304.85"><stop stop-color="#35ff35"/><stop offset="1"/></linearGradient><linearGradient id="g143" gradientUnits="userSpaceOnUse" x1="1240.90" y1="254.30" x2="1218.89" y2="299.41"><stop stop-color="#00ff00"/><stop offset="1"/></linearGradient><linearGradient id="g144" gradientUnits="userSpaceOnUse" x1="1224.67" y1="302.23" x2="1243.58" y2="301.15"><stop stop-color="#00ff33"/><stop offset="1"/></linearGradient><linearGradient id="g145" gradientUnits="userSpaceOnUse" x1="1244.18" y1="311.75" x2="1228.15" y2="315.85"><stop stop-color="#35ff35"/><stop offset="1"/></linearGradient><linearGradient id="g146" gradientUnits="userSpaceOnUse" x1="1224.67" y1="302.23" x2="1245.07" y2="309.14"><stop stop-color="#00ff33"/><stop offset="1"/></linearGradient><linearGradient id="g147" gradientUnits="userSpaceOnUse" x1="1234.44" y1="340.51" x2="1247.65" y2="313.44"><stop stop-color="#3dff64"/><stop offset="1"/></linearGradient><linearGradient id="g148" gradientUnits="userSpaceOnUse" x1="1249.10" y1="397.93" x2="1241.46" y2="395.34"><stop stop-color="#ffffff"/><stop offset="1"/></linearGradient><linearGradient id="g149" gradientUnits="userSpaceOnUse" x1="1245.44" y1="383.58" x2="1240.48" y2="387.80"><stop stop-color="#b9ffc7"/><stop offset="1"/></linearGradient><linearGradient id="g150" gradientUnits="userSpaceOnUse" x1="1243.00" y1="390.77" x2="1247.01" y2="389.74"><stop stop-color="#c4ffe2"/><stop offset="1"/></linearGradient><linearGradient id="g151" gradientUnits="userSpaceOnUse" x1="1245.44" y1="383.58" x2="1235.24" y2="380.12"><stop stop-color="#b9ffc7"/><stop offset="1"/></linearGradient><linearGradient id="g152" gradientUnits="userSpaceOnUse" x1="1240.55" y1="364.44" x2="1236.71" y2="381.62"><stop stop-color="#77ff92"/><stop offset="1"/></linearGradient><linearGradient id="g153" gradientUnits="userSpaceOnUse" x1="1234.87" y1="381.21" x2="1244.23" y2="378.82"><stop stop-color="#85ffc2"/><stop offset="1"/></linearGradient><linearGradient id="g154" gradientUnits="userSpaceOnUse" x1="1245.44" y1="383.58" x2="1240.48" y2="387.80"><stop stop-color="#b9ffc7"/><stop offset="1"/></linearGradient><linearGradient id="g155" gradientUnits="userSpaceOnUse" x1="1234.87" y1="381.21" x2="1245.07" y2="384.66"><stop stop-color="#85ffc2"/><stop offset="1"/></linearGradient><linearGradient id="g156" gradientUnits="userSpaceOnUse" x1="1243.00" y1="390.77" x2="1244.65" y2="383.40"><stop stop-color="#c4ffe2"/><stop offset="1"/></linearGradient><linearGradient id="g157" gradientUnits="userSpaceOnUse" x1="1240.55" y1="364.44" x2="1227.81" y2="360.12"><stop stop-color="#77ff92"/><stop offset="1"/></linearGradient><linearGradient id="g158" gradientUnits="userSpaceOnUse" x1="1234.44" y1="340.51" x2="1241.64" y2="364.10"><stop stop-color="#3dff64"/><stop offset="1"/></linearGradient><linearGradient id="g159" gradientUnits="userSpaceOnUse" x1="1224.71" y1="369.27" x2="1240.74" y2="365.18"><stop stop-color="#48ffa3"/><stop offset="1"/></linearGradient><linearGradient id="g160" gradientUnits="userSpaceOnUse" x1="1240.55" y1="364.44" x2="1228.98" y2="374.29"><stop stop-color="#77ff92"/><stop offset="1"/></linearGradient><linearGradient id="g161" gradientUnits="userSpaceOnUse" x1="1224.71" y1="369.27" x2="1237.45" y2="373.59"><stop stop-color="#48ffa3"/><stop offset="1"/></linearGradient><linearGradient id="g162" gradientUnits="userSpaceOnUse" x1="1234.87" y1="381.21" x2="1230.67" y2="367.45"><stop stop-color="#85ffc2"/><stop offset="1"/></linearGradient><linearGradient id="g163" gradientUnits="userSpaceOnUse" x1="1234.44" y1="340.51" x2="1214.05" y2="333.61"><stop stop-color="#3dff64"/><stop offset="1"/></linearGradient><linearGradient id="g164" gradientUnits="userSpaceOnUse" x1="1224.67" y1="302.23" x2="1238.34" y2="339.06"><stop stop-color="#00ff33"/><stop offset="1"/></linearGradient><linearGradient id="g165" gradientUnits="userSpaceOnUse" x1="1208.44" y1="350.16" x2="1235.17" y2="343.34"><stop stop-color="#00ff7f"/><stop offset="1"/></linearGradient><linearGradient id="g166" gradientUnits="userSpaceOnUse" x1="1234.44" y1="340.51" x2="1214.60" y2="357.40"><stop stop-color="#3dff64"/><stop offset="1"/></linearGradient><linearGradient id="g167" gradientUnits="userSpaceOnUse" x1="1208.44" y1="350.16" x2="1228.84" y2="357.07"><stop stop-color="#00ff7f"/><stop offset="1"/></linearGradient><linearGradient id="g168" gradientUnits="userSpaceOnUse" x1="1224.71" y1="369.27" x2="1216.50" y2="347.17"><stop stop-color="#48ffa3"/><stop offset="1"/></linearGradient><linearGradient id="g169" gradientUnits="userSpaceOnUse" x1="1249.10" y1="397.93" x2="1241.46" y2="395.34"><stop stop-color="#ffffff"/><stop offset="1"/></linearGradient><linearGradient id="g170" gradientUnits="userSpaceOnUse" x1="1243.00" y1="390.77" x2="1243.03" y2="397.95"><stop stop-color="#c4ffe2"/><stop offset="1"/></linearGradient><linearGradient id="g171" gradientUnits="userSpaceOnUse" x1="1240.57" y1="397.95" x2="1245.53" y2="393.73"><stop stop-color="#d0ffff"/><stop offset="1"/></linearGradient><linearGradient id="g172" gradientUnits="userSpaceOnUse" x1="1243.00" y1="390.77" x2="1232.81" y2="387.31"><stop stop-color="#c4ffe2"/><stop offset="1"/></linearGradient><linearGradient id="g173" gradientUnits="userSpaceOnUse" x1="1234.87" y1="381.21" x2="1240.54" y2="392.05"><stop stop-color="#85ffc2"/><stop offset="1"/></linearGradient><linearGradient id="g174" gradientUnits="userSpaceOnUse" x1="1229.19" y1="397.99" x2="1240.77" y2="388.14"><stop stop-color="#97ffff"/><stop offset="1"/></linearGradient><linearGradient id="g175" gradientUnits="userSpaceOnUse" x1="1243.00" y1="390.77" x2="1243.03" y2="397.95"><stop stop-color="#c4ffe2"/><stop offset="1"/></linearGradient><linearGradient id="g176" gradientUnits="userSpaceOnUse" x1="1229.19" y1="397.99" x2="1239.39" y2="401.44"><stop stop-color="#97ffff"/><stop offset="1"/></linearGradient><linearGradient id="g177" gradientUnits="userSpaceOnUse" x1="1240.57" y1="397.95" x2="1238.14" y2="393.31"><stop stop-color="#d0ffff"/><stop offset="1"/></linearGradient><linearGradient id="g178" gradientUnits="userSpaceOnUse" x1="1234.87" y1="381.21" x2="1222.13" y2="376.90"><stop stop-color="#85ffc2"/><stop offset="1"/></linearGradient><linearGradient id="g179" gradientUnits="userSpaceOnUse" x1="1224.71" y1="369.27" x2="1234.83" y2="381.25"><stop stop-color="#48ffa3"/><stop offset="1"/></linearGradient><linearGradient id="g180" gradientUnits="userSpaceOnUse" x1="1214.97" y1="398.03" x2="1234.81" y2="381.14"><stop stop-color="#58ffff"/><stop offset="1"/></linearGradient><linearGradient id="g181" gradientUnits="userSpaceOnUse" x1="1234.87" y1="381.21" x2="1234.92" y2="397.97"><stop stop-color="#85ffc2"/><stop offset="1"/></linearGradient><linearGradient id="g182" gradientUnits="userSpaceOnUse" x1="1214.97" y1="398.03" x2="1227.72" y2="402.35"><stop stop-color="#58ffff"/><stop offset="1"/></linearGradient><linearGradient id="g183" gradientUnits="userSpaceOnUse" x1="1229.19" y1="397.99" x2="1223.29" y2="391.00"><stop stop-color="#97ffff"/><stop offset="1"/></linearGradient><linearGradient id="g184" gradientUnits="userSpaceOnUse" x1="1224.71" y1="369.27" x2="1204.31" y2="362.37"><stop stop-color="#48ffa3"/><stop offset="1"/></linearGradient><linearGradient id="g185" gradientUnits="userSpaceOnUse" x1="1208.44" y1="350.16" x2="1225.09" y2="368.93"><stop stop-color="#00ff7f"/><stop offset="1"/></linearGradient><linearGradient id="g186" gradientUnits="userSpaceOnUse" x1="1192.21" y1="398.10" x2="1225.28" y2="369.95"><stop stop-color="#00ffff"/><stop offset="1"/></linearGradient><linearGradient id="g187" gradientUnits="userSpaceOnUse" x1="1224.71" y1="369.27" x2="1224.79" y2="398.00"><stop stop-color="#48ffa3"/><stop offset="1"/></linearGradient><linearGradient id="g188" gradientUnits="userSpaceOnUse" x1="1192.21" y1="398.10" x2="1212.61" y2="405.00"><stop stop-color="#00ffff"/><stop offset="1"/></linearGradient><linearGradient id="g189" gradientUnits="userSpaceOnUse" x1="1214.97" y1="398.03" x2="1204.98" y2="386.77"><stop stop-color="#58ffff"/><stop offset="1"/></linearGradient><linearGradient id="g190" gradientUnits="userSpaceOnUse" x1="1249.10" y1="397.93" x2="1241.46" y2="395.34"><stop stop-color="#ffffff"/><stop offset="1"/></linearGradient><linearGradient id="g191" gradientUnits="userSpaceOnUse" x1="1240.57" y1="397.95" x2="1243.11" y2="401.84"><stop stop-color="#d0ffff"/><stop offset="1"/></linearGradient><linearGradient id="g192" gradientUnits="userSpaceOnUse" x1="1238.16" y1="405.08" x2="1238.14" y2="397.96"><stop stop-color="#c4e2ff"/><stop offset="1"/></linearGradient><linearGradient id="g193" gradientUnits="userSpaceOnUse" x1="1240.57" y1="397.95" x2="1230.37" y2="394.50"><stop stop-color="#d0ffff"/><stop offset="1"/></linearGradient><linearGradient id="g194" gradientUnits="userSpaceOnUse" x1="1229.19" y1="397.99" x2="1234.74" y2="403.66"><stop stop-color="#97ffff"/><stop offset="1"/></linearGradient><linearGradient id="g195" gradientUnits="userSpaceOnUse" x1="1223.57" y1="414.60" x2="1223.52" y2="398.00"><stop stop-color="#86c2ff"/><stop offset="1"/></linearGradient><linearGradient id="g196" gradientUnits="userSpaceOnUse" x1="1240.57" y1="397.95" x2="1243.11" y2="401.84"><stop stop-color="#d0ffff"/><stop offset="1"/></linearGradient><linearGradient id="g197" gradientUnits="userSpaceOnUse" x1="1223.57" y1="414.60" x2="1233.77" y2="418.05"><stop stop-color="#86c2ff"/><stop offset="1"/></linearGradient><linearGradient id="g198" gradientUnits="userSpaceOnUse" x1="1238.16" y1="405.08" x2="1235.78" y2="402.64"><stop stop-color="#c4e2ff"/><stop offset="1"/></linearGradient><linearGradient id="g199" gradientUnits="userSpaceOnUse" x1="1229.19" y1="397.99" x2="1216.45" y2="393.67"><stop stop-color="#97ffff"/><stop offset="1"/></linearGradient><linearGradient id="g200" gradientUnits="userSpaceOnUse" x1="1214.97" y1="398.03" x2="1223.32" y2="405.01"><stop stop-color="#58ffff"/><stop offset="1"/></linearGradient><linearGradient id="g201" gradientUnits="userSpaceOnUse" x1="1205.33" y1="426.51" x2="1205.24" y2="398.06"><stop stop-color="#48a4ff"/><stop offset="1"/></linearGradient><linearGradient id="g202" gradientUnits="userSpaceOnUse" x1="1229.19" y1="397.99" x2="1235.12" y2="407.06"><stop stop-color="#97ffff"/><stop offset="1"/></linearGradient><linearGradient id="g203" gradientUnits="userSpaceOnUse" x1="1205.33" y1="426.51" x2="1218.07" y2="430.83"><stop stop-color="#48a4ff"/><stop offset="1"/></linearGradient><linearGradient id="g204" gradientUnits="userSpaceOnUse" x1="1223.57" y1="414.60" x2="1218.70" y2="410.53"><stop stop-color="#86c2ff"/><stop offset="1"/></linearGradient><linearGradient id="g205" gradientUnits="userSpaceOnUse" x1="1214.97" y1="398.03" x2="1194.57" y2="391.12"><stop stop-color="#58ffff"/><stop offset="1"/></linearGradient><linearGradient id="g206" gradientUnits="userSpaceOnUse" x1="1192.21" y1="398.10" x2="1205.83" y2="409.22"><stop stop-color="#00ffff"/><stop offset="1"/></linearGradient><linearGradient id="g207" gradientUnits="userSpaceOnUse" x1="1176.14" y1="445.56" x2="1176.00" y2="398.14"><stop stop-color="#0080ff"/><stop offset="1"/></linearGradient><linearGradient id="g208" gradientUnits="userSpaceOnUse" x1="1214.97" y1="398.03" x2="1225.13" y2="413.58"><stop stop-color="#58ffff"/><stop offset="1"/></linearGradient><linearGradient id="g209" gradientUnits="userSpaceOnUse" x1="1176.14" y1="445.56" x2="1196.54" y2="452.47"><stop stop-color="#0080ff"/><stop offset="1"/></linearGradient><linearGradient id="g210" gradientUnits="userSpaceOnUse" x1="1205.33" y1="426.51" x2="1197.16" y2="419.84"><stop stop-color="#48a4ff"/><stop offset="1"/></linearGradient><linearGradient id="g211" gradientUnits="userSpaceOnUse" x1="1249.10" y1="397.93" x2="1241.46" y2="395.34"><stop stop-color="#ffffff"/><stop offset="1"/></linearGradient><linearGradient id="g212" gradientUnits="userSpaceOnUse" x1="1238.16" y1="405.08" x2="1240.43" y2="407.20"><stop stop-color="#c4e2ff"/><stop offset="1"/></linearGradient><linearGradient id="g213" gradientUnits="userSpaceOnUse" x1="1235.75" y1="412.20" x2="1233.21" y2="408.31"><stop stop-color="#bac8ff"/><stop offset="1"/></linearGradient><linearGradient id="g214" gradientUnits="userSpaceOnUse" x1="1238.16" y1="405.08" x2="1227.96" y2="401.62"><stop stop-color="#c4e2ff"/><stop offset="1"/></linearGradient><linearGradient id="g215" gradientUnits="userSpaceOnUse" x1="1223.57" y1="414.60" x2="1228.09" y2="418.10"><stop stop-color="#86c2ff"/><stop offset="1"/></linearGradient><linearGradient id="g216" gradientUnits="userSpaceOnUse" x1="1217.94" y1="431.22" x2="1212.02" y2="422.14"><stop stop-color="#7793ff"/><stop offset="1"/></linearGradient><linearGradient id="g217" gradientUnits="userSpaceOnUse" x1="1238.16" y1="405.08" x2="1240.43" y2="407.20"><stop stop-color="#c4e2ff"/><stop offset="1"/></linearGradient><linearGradient id="g218" gradientUnits="userSpaceOnUse" x1="1217.94" y1="431.22" x2="1228.14" y2="434.67"><stop stop-color="#7793ff"/><stop offset="1"/></linearGradient><linearGradient id="g219" gradientUnits="userSpaceOnUse" x1="1235.75" y1="412.20" x2="1233.81" y2="410.70"><stop stop-color="#bac8ff"/><stop offset="1"/></linearGradient><linearGradient id="g220" gradientUnits="userSpaceOnUse" x1="1223.57" y1="414.60" x2="1210.82" y2="410.29"><stop stop-color="#86c2ff"/><stop offset="1"/></linearGradient><linearGradient id="g221" gradientUnits="userSpaceOnUse" x1="1205.33" y1="426.51" x2="1212.11" y2="431.19"><stop stop-color="#48a4ff"/><stop offset="1"/></linearGradient><linearGradient id="g222" gradientUnits="userSpaceOnUse" x1="1195.68" y1="454.99" x2="1185.53" y2="439.44"><stop stop-color="#3d64ff"/><stop offset="1"/></linearGradient><linearGradient id="g223" gradientUnits="userSpaceOnUse" x1="1223.57" y1="414.60" x2="1228.86" y2="419.56"><stop stop-color="#86c2ff"/><stop offset="1"/></linearGradient><linearGradient id="g224" gradientUnits="userSpaceOnUse" x1="1195.68" y1="454.99" x2="1208.43" y2="459.31"><stop stop-color="#3d64ff"/><stop offset="1"/></linearGradient><linearGradient id="g225" gradientUnits="userSpaceOnUse" x1="1217.94" y1="431.22" x2="1213.98" y2="428.48"><stop stop-color="#7793ff"/><stop offset="1"/></linearGradient><linearGradient id="g226" gradientUnits="userSpaceOnUse" x1="1205.33" y1="426.51" x2="1184.93" y2="419.61"><stop stop-color="#48a4ff"/><stop offset="1"/></linearGradient><linearGradient id="g227" gradientUnits="userSpaceOnUse" x1="1176.14" y1="445.56" x2="1187.23" y2="453.11"><stop stop-color="#0080ff"/><stop offset="1"/></linearGradient><linearGradient id="g228" gradientUnits="userSpaceOnUse" x1="1160.07" y1="493.03" x2="1143.15" y2="467.11"><stop stop-color="#0033ff"/><stop offset="1"/></linearGradient><linearGradient id="g229" gradientUnits="userSpaceOnUse" x1="1205.33" y1="426.51" x2="1214.40" y2="435.00"><stop stop-color="#48a4ff"/><stop offset="1"/></linearGradient><linearGradient id="g230" gradientUnits="userSpaceOnUse" x1="1160.07" y1="493.03" x2="1180.47" y2="499.94"><stop stop-color="#0033ff"/><stop offset="1"/></linearGradient><linearGradient id="g231" gradientUnits="userSpaceOnUse" x1="1195.68" y1="454.99" x2="1189.03" y2="450.46"><stop stop-color="#3d64ff"/><stop offset="1"/></linearGradient><linearGradient id="g232" gradientUnits="userSpaceOnUse" x1="1249.10" y1="397.93" x2="1241.46" y2="395.34"><stop stop-color="#ffffff"/><stop offset="1"/></linearGradient><linearGradient id="g233" gradientUnits="userSpaceOnUse" x1="1235.75" y1="412.20" x2="1237.59" y2="413.55"><stop stop-color="#bac8ff"/><stop offset="1"/></linearGradient><linearGradient id="g234" gradientUnits="userSpaceOnUse" x1="1233.34" y1="419.32" x2="1231.07" y2="417.19"><stop stop-color="#b0b0ff"/><stop offset="1"/></linearGradient><linearGradient id="g235" gradientUnits="userSpaceOnUse" x1="1235.75" y1="412.20" x2="1225.55" y2="408.74"><stop stop-color="#bac8ff"/><stop offset="1"/></linearGradient><linearGradient id="g236" gradientUnits="userSpaceOnUse" x1="1217.94" y1="431.22" x2="1221.64" y2="433.65"><stop stop-color="#7793ff"/><stop offset="1"/></linearGradient><linearGradient id="g237" gradientUnits="userSpaceOnUse" x1="1212.32" y1="447.83" x2="1207.03" y2="442.88"><stop stop-color="#6c6cff"/><stop offset="1"/></linearGradient><linearGradient id="g238" gradientUnits="userSpaceOnUse" x1="1235.75" y1="412.20" x2="1237.59" y2="413.55"><stop stop-color="#bac8ff"/><stop offset="1"/></linearGradient><linearGradient id="g239" gradientUnits="userSpaceOnUse" x1="1212.32" y1="447.83" x2="1222.52" y2="451.28"><stop stop-color="#6c6cff"/><stop offset="1"/></linearGradient><linearGradient id="g240" gradientUnits="userSpaceOnUse" x1="1233.34" y1="419.32" x2="1231.75" y2="418.27"><stop stop-color="#b0b0ff"/><stop offset="1"/></linearGradient><linearGradient id="g241" gradientUnits="userSpaceOnUse" x1="1217.94" y1="431.22" x2="1205.20" y2="426.90"><stop stop-color="#7793ff"/><stop offset="1"/></linearGradient><linearGradient id="g242" gradientUnits="userSpaceOnUse" x1="1195.68" y1="454.99" x2="1201.33" y2="458.44"><stop stop-color="#3d64ff"/><stop offset="1"/></linearGradient><linearGradient id="g243" gradientUnits="userSpaceOnUse" x1="1186.04" y1="483.47" x2="1176.97" y2="474.98"><stop stop-color="#3535ff"/><stop offset="1"/></linearGradient><linearGradient id="g244" gradientUnits="userSpaceOnUse" x1="1217.94" y1="431.22" x2="1222.23" y2="434.38"><stop stop-color="#7793ff"/><stop offset="1"/></linearGradient><linearGradient id="g245" gradientUnits="userSpaceOnUse" x1="1186.04" y1="483.47" x2="1198.79" y2="487.79"><stop stop-color="#3535ff"/><stop offset="1"/></linearGradient><linearGradient id="g246" gradientUnits="userSpaceOnUse" x1="1212.32" y1="447.83" x2="1209.03" y2="445.82"><stop stop-color="#6c6cff"/><stop offset="1"/></linearGradient><linearGradient id="g247" gradientUnits="userSpaceOnUse" x1="1195.68" y1="454.99" x2="1175.29" y2="448.09"><stop stop-color="#3d64ff"/><stop offset="1"/></linearGradient><linearGradient id="g248" gradientUnits="userSpaceOnUse" x1="1160.07" y1="493.03" x2="1169.31" y2="498.62"><stop stop-color="#0033ff"/><stop offset="1"/></linearGradient><linearGradient id="g249" gradientUnits="userSpaceOnUse" x1="1144.00" y1="540.50" x2="1128.88" y2="526.35"><stop stop-color="#0000ff"/><stop offset="1"/></linearGradient><linearGradient id="g250" gradientUnits="userSpaceOnUse" x1="1195.68" y1="454.99" x2="1203.04" y2="460.41"><stop stop-color="#3d64ff"/><stop offset="1"/></linearGradient><linearGradient id="g251" gradientUnits="userSpaceOnUse" x1="1144.00" y1="540.50" x2="1164.40" y2="547.41"><stop stop-color="#0000ff"/><stop offset="1"/></linearGradient><linearGradient id="g252" gradientUnits="userSpaceOnUse" x1="1186.04" y1="483.47" x2="1180.50" y2="480.12"><stop stop-color="#3535ff"/><stop offset="1"/></linearGradient><linearGradient id="g253" gradientUnits="userSpaceOnUse" x1="1249.10" y1="397.93" x2="1254.46" y2="409.77"><stop stop-color="#ffffff"/><stop offset="1"/></linearGradient><linearGradient id="g254" gradientUnits="userSpaceOnUse" x1="1233.34" y1="419.32" x2="1236.56" y2="421.06"><stop stop-color="#b0b0ff"/><stop offset="1"/></linearGradient><linearGradient id="g255" gradientUnits="userSpaceOnUse" x1="1238.86" y1="416.82" x2="1236.47" y2="415.06"><stop stop-color="#c9b7ff"/><stop offset="1"/></linearGradient><linearGradient id="g256" gradientUnits="userSpaceOnUse" x1="1233.34" y1="419.32" x2="1240.47" y2="435.10"><stop stop-color="#b0b0ff"/><stop offset="1"/></linearGradient><linearGradient id="g257" gradientUnits="userSpaceOnUse" x1="1212.32" y1="447.83" x2="1221.88" y2="451.26"><stop stop-color="#6c6cff"/><stop offset="1"/></linearGradient><linearGradient id="g258" gradientUnits="userSpaceOnUse" x1="1225.20" y1="442.01" x2="1219.63" y2="437.90"><stop stop-color="#9674ff"/><stop offset="1"/></linearGradient><linearGradient id="g259" gradientUnits="userSpaceOnUse" x1="1233.34" y1="419.32" x2="1236.56" y2="421.06"><stop stop-color="#b0b0ff"/><stop offset="1"/></linearGradient><linearGradient id="g260" gradientUnits="userSpaceOnUse" x1="1225.20" y1="442.01" x2="1218.06" y2="426.22"><stop stop-color="#9674ff"/><stop offset="1"/></linearGradient><linearGradient id="g261" gradientUnits="userSpaceOnUse" x1="1238.86" y1="416.82" x2="1234.76" y2="415.35"><stop stop-color="#c9b7ff"/><stop offset="1"/></linearGradient><linearGradient id="g262" gradientUnits="userSpaceOnUse" x1="1212.32" y1="447.83" x2="1221.24" y2="467.56"><stop stop-color="#6c6cff"/><stop offset="1"/></linearGradient><linearGradient id="g263" gradientUnits="userSpaceOnUse" x1="1186.04" y1="483.47" x2="1205.96" y2="486.73"><stop stop-color="#3535ff"/><stop offset="1"/></linearGradient><linearGradient id="g264" gradientUnits="userSpaceOnUse" x1="1208.12" y1="473.49" x2="1198.58" y2="466.46"><stop stop-color="#6b3bff"/><stop offset="1"/></linearGradient><linearGradient id="g265" gradientUnits="userSpaceOnUse" x1="1212.32" y1="447.83" x2="1219.83" y2="451.90"><stop stop-color="#6c6cff"/><stop offset="1"/></linearGradient><linearGradient id="g266" gradientUnits="userSpaceOnUse" x1="1208.12" y1="473.49" x2="1199.20" y2="453.76"><stop stop-color="#6b3bff"/><stop offset="1"/></linearGradient><linearGradient id="g267" gradientUnits="userSpaceOnUse" x1="1225.20" y1="442.01" x2="1213.58" y2="440.11"><stop stop-color="#9674ff"/><stop offset="1"/></linearGradient><linearGradient id="g268" gradientUnits="userSpaceOnUse" x1="1186.04" y1="483.47" x2="1200.31" y2="515.04"><stop stop-color="#3535ff"/><stop offset="1"/></linearGradient><linearGradient id="g269" gradientUnits="userSpaceOnUse" x1="1144.00" y1="540.50" x2="1178.07" y2="544.92"><stop stop-color="#0000ff"/><stop offset="1"/></linearGradient><linearGradient id="g270" gradientUnits="userSpaceOnUse" x1="1180.80" y1="523.86" x2="1164.91" y2="512.14"><stop stop-color="#3f00ff"/><stop offset="1"/></linearGradient><linearGradient id="g271" gradientUnits="userSpaceOnUse" x1="1186.04" y1="483.47" x2="1198.92" y2="490.46"><stop stop-color="#3535ff"/><stop offset="1"/></linearGradient><linearGradient id="g272" gradientUnits="userSpaceOnUse" x1="1180.80" y1="523.86" x2="1166.53" y2="492.29"><stop stop-color="#3f00ff"/><stop offset="1"/></linearGradient><linearGradient id="g273" gradientUnits="userSpaceOnUse" x1="1208.12" y1="473.49" x2="1187.68" y2="470.84"><stop stop-color="#6b3bff"/><stop offset="1"/></linearGradient><linearGradient id="g274" gradientUnits="userSpaceOnUse" x1="1249.10" y1="397.93" x2="1254.46" y2="409.77"><stop stop-color="#ffffff"/><stop offset="1"/></linearGradient><linearGradient id="g275" gradientUnits="userSpaceOnUse" x1="1238.86" y1="416.82" x2="1243.29" y2="418.10"><stop stop-color="#c9b7ff"/><stop offset="1"/></linearGradient><linearGradient id="g276" gradientUnits="userSpaceOnUse" x1="1244.38" y1="414.32" x2="1241.16" y2="412.58"><stop stop-color="#e3beff"/><stop offset="1"/></linearGradient><linearGradient id="g277" gradientUnits="userSpaceOnUse" x1="1238.86" y1="416.82" x2="1245.99" y2="432.60"><stop stop-color="#c9b7ff"/><stop offset="1"/></linearGradient><linearGradient id="g278" gradientUnits="userSpaceOnUse" x1="1225.20" y1="442.01" x2="1237.82" y2="442.51"><stop stop-color="#9674ff"/><stop offset="1"/></linearGradient><linearGradient id="g279" gradientUnits="userSpaceOnUse" x1="1238.08" y1="436.18" x2="1230.57" y2="432.11"><stop stop-color="#c67dff"/><stop offset="1"/></linearGradient><linearGradient id="g280" gradientUnits="userSpaceOnUse" x1="1238.86" y1="416.82" x2="1243.29" y2="418.10"><stop stop-color="#c9b7ff"/><stop offset="1"/></linearGradient><linearGradient id="g281" gradientUnits="userSpaceOnUse" x1="1238.08" y1="436.18" x2="1230.94" y2="420.40"><stop stop-color="#c67dff"/><stop offset="1"/></linearGradient><linearGradient id="g282" gradientUnits="userSpaceOnUse" x1="1244.38" y1="414.32" x2="1238.97" y2="414.11"><stop stop-color="#e3beff"/><stop offset="1"/></linearGradient><linearGradient id="g283" gradientUnits="userSpaceOnUse" x1="1225.20" y1="442.01" x2="1234.12" y2="461.74"><stop stop-color="#9674ff"/><stop offset="1"/></linearGradient><linearGradient id="g284" gradientUnits="userSpaceOnUse" x1="1208.12" y1="473.49" x2="1231.27" y2="468.10"><stop stop-color="#6b3bff"/><stop offset="1"/></linearGradient><linearGradient id="g285" gradientUnits="userSpaceOnUse" x1="1230.20" y1="463.51" x2="1217.33" y2="456.52"><stop stop-color="#ad41ff"/><stop offset="1"/></linearGradient><linearGradient id="g286" gradientUnits="userSpaceOnUse" x1="1225.20" y1="442.01" x2="1235.54" y2="444.99"><stop stop-color="#9674ff"/><stop offset="1"/></linearGradient><linearGradient id="g287" gradientUnits="userSpaceOnUse" x1="1230.20" y1="463.51" x2="1221.28" y2="443.78"><stop stop-color="#ad41ff"/><stop offset="1"/></linearGradient><linearGradient id="g288" gradientUnits="userSpaceOnUse" x1="1238.08" y1="436.18" x2="1224.57" y2="439.33"><stop stop-color="#c67dff"/><stop offset="1"/></linearGradient><linearGradient id="g289" gradientUnits="userSpaceOnUse" x1="1208.12" y1="473.49" x2="1222.40" y2="505.06"><stop stop-color="#6b3bff"/><stop offset="1"/></linearGradient><linearGradient id="g290" gradientUnits="userSpaceOnUse" x1="1180.80" y1="523.86" x2="1219.24" y2="513.06"><stop stop-color="#3f00ff"/><stop offset="1"/></linearGradient><linearGradient id="g291" gradientUnits="userSpaceOnUse" x1="1217.60" y1="507.22" x2="1196.14" y2="495.58"><stop stop-color="#9000ff"/><stop offset="1"/></linearGradient><linearGradient id="g292" gradientUnits="userSpaceOnUse" x1="1208.12" y1="473.49" x2="1225.85" y2="478.60"><stop stop-color="#6b3bff"/><stop offset="1"/></linearGradient><linearGradient id="g293" gradientUnits="userSpaceOnUse" x1="1217.60" y1="507.22" x2="1203.33" y2="475.66"><stop stop-color="#9000ff"/><stop offset="1"/></linearGradient><linearGradient id="g294" gradientUnits="userSpaceOnUse" x1="1230.20" y1="463.51" x2="1207.14" y2="469.99"><stop stop-color="#ad41ff"/><stop offset="1"/></linearGradient><linearGradient id="g295" gradientUnits="userSpaceOnUse" x1="1249.10" y1="397.93" x2="1254.46" y2="409.77"><stop stop-color="#ffffff"/><stop offset="1"/></linearGradient><linearGradient id="g296" gradientUnits="userSpaceOnUse" x1="1244.38" y1="414.32" x2="1250.02" y2="414.00"><stop stop-color="#e3beff"/><stop offset="1"/></linearGradient><linearGradient id="g297" gradientUnits="userSpaceOnUse" x1="1249.90" y1="411.83" x2="1245.47" y2="410.55"><stop stop-color="#ffc6ff"/><stop offset="1"/></linearGradient><linearGradient id="g298" gradientUnits="userSpaceOnUse" x1="1244.38" y1="414.32" x2="1251.52" y2="430.11"><stop stop-color="#e3beff"/><stop offset="1"/></linearGradient><linearGradient id="g299" gradientUnits="userSpaceOnUse" x1="1238.08" y1="436.18" x2="1251.15" y2="430.82"><stop stop-color="#c67dff"/><stop offset="1"/></linearGradient><linearGradient id="g300" gradientUnits="userSpaceOnUse" x1="1250.96" y1="430.36" x2="1240.62" y2="427.38"><stop stop-color="#ff87ff"/><stop offset="1"/></linearGradient><linearGradient id="g301" gradientUnits="userSpaceOnUse" x1="1244.38" y1="414.32" x2="1250.02" y2="414.00"><stop stop-color="#e3beff"/><stop offset="1"/></linearGradient><linearGradient id="g302" gradientUnits="userSpaceOnUse" x1="1250.96" y1="430.36" x2="1243.82" y2="414.58"><stop stop-color="#ff87ff"/><stop offset="1"/></linearGradient><linearGradient id="g303" gradientUnits="userSpaceOnUse" x1="1249.90" y1="411.83" x2="1244.30" y2="414.13"><stop stop-color="#ffc6ff"/><stop offset="1"/></linearGradient><linearGradient id="g304" gradientUnits="userSpaceOnUse" x1="1238.08" y1="436.18" x2="1247.00" y2="455.91"><stop stop-color="#c67dff"/><stop offset="1"/></linearGradient><linearGradient id="g305" gradientUnits="userSpaceOnUse" x1="1230.20" y1="463.51" x2="1248.31" y2="448.67"><stop stop-color="#ad41ff"/><stop offset="1"/></linearGradient><linearGradient id="g306" gradientUnits="userSpaceOnUse" x1="1252.29" y1="453.52" x2="1234.55" y2="448.41"><stop stop-color="#ff4aff"/><stop offset="1"/></linearGradient><linearGradient id="g307" gradientUnits="userSpaceOnUse" x1="1238.08" y1="436.18" x2="1251.25" y2="435.43"><stop stop-color="#c67dff"/><stop offset="1"/></linearGradient><linearGradient id="g308" gradientUnits="userSpaceOnUse" x1="1252.29" y1="453.52" x2="1243.37" y2="433.79"><stop stop-color="#ff4aff"/><stop offset="1"/></linearGradient><linearGradient id="g309" gradientUnits="userSpaceOnUse" x1="1250.96" y1="430.36" x2="1240.40" y2="439.01"><stop stop-color="#ff87ff"/><stop offset="1"/></linearGradient><linearGradient id="g310" gradientUnits="userSpaceOnUse" x1="1230.20" y1="463.51" x2="1244.48" y2="495.08"><stop stop-color="#ad41ff"/><stop offset="1"/></linearGradient><linearGradient id="g311" gradientUnits="userSpaceOnUse" x1="1217.60" y1="507.22" x2="1246.33" y2="481.55"><stop stop-color="#9000ff"/><stop offset="1"/></linearGradient><linearGradient id="g312" gradientUnits="userSpaceOnUse" x1="1254.41" y1="490.59" x2="1224.85" y2="482.07"><stop stop-color="#ff00ff"/><stop offset="1"/></linearGradient><linearGradient id="g313" gradientUnits="userSpaceOnUse" x1="1230.20" y1="463.51" x2="1252.78" y2="462.21"><stop stop-color="#ad41ff"/><stop offset="1"/></linearGradient><linearGradient id="g314" gradientUnits="userSpaceOnUse" x1="1254.41" y1="490.59" x2="1240.14" y2="459.02"><stop stop-color="#ff00ff"/><stop offset="1"/></linearGradient><linearGradient id="g315" gradientUnits="userSpaceOnUse" x1="1252.29" y1="453.52" x2="1235.05" y2="468.93"><stop stop-color="#ff4aff"/><stop offset="1"/></linearGradient><linearGradient id="g316" gradientUnits="userSpaceOnUse" x1="1249.10" y1="397.93" x2="1254.46" y2="409.77"><stop stop-color="#ffffff"/><stop offset="1"/></linearGradient><linearGradient id="g317" gradientUnits="userSpaceOnUse" x1="1249.90" y1="411.83" x2="1256.41" y2="404.01"><stop stop-color="#ffc6ff"/><stop offset="1"/></linearGradient><linearGradient id="g318" gradientUnits="userSpaceOnUse" x1="1260.21" y1="407.17" x2="1249.67" y2="407.77"><stop stop-color="#ffadcf"/><stop offset="1"/></linearGradient><linearGradient id="g319" gradientUnits="userSpaceOnUse" x1="1249.90" y1="411.83" x2="1257.04" y2="427.61"><stop stop-color="#ffc6ff"/><stop offset="1"/></linearGradient><linearGradient id="g320" gradientUnits="userSpaceOnUse" x1="1250.96" y1="430.36" x2="1256.04" y2="413.70"><stop stop-color="#ff87ff"/><stop offset="1"/></linearGradient><linearGradient id="g321" gradientUnits="userSpaceOnUse" x1="1275.01" y1="419.49" x2="1250.42" y2="420.90"><stop stop-color="#ff69a6"/><stop offset="1"/></linearGradient><linearGradient id="g322" gradientUnits="userSpaceOnUse" x1="1249.90" y1="411.83" x2="1256.41" y2="404.01"><stop stop-color="#ffc6ff"/><stop offset="1"/></linearGradient><linearGradient id="g323" gradientUnits="userSpaceOnUse" x1="1275.01" y1="419.49" x2="1267.87" y2="403.70"><stop stop-color="#ff69a6"/><stop offset="1"/></linearGradient><linearGradient id="g324" gradientUnits="userSpaceOnUse" x1="1260.21" y1="407.17" x2="1258.03" y2="414.31"><stop stop-color="#ffadcf"/><stop offset="1"/></linearGradient><linearGradient id="g325" gradientUnits="userSpaceOnUse" x1="1250.96" y1="430.36" x2="1259.88" y2="450.09"><stop stop-color="#ff87ff"/><stop offset="1"/></linearGradient><linearGradient id="g326" gradientUnits="userSpaceOnUse" x1="1252.29" y1="453.52" x2="1254.71" y2="430.76"><stop stop-color="#ff4aff"/><stop offset="1"/></linearGradient><linearGradient id="g327" gradientUnits="userSpaceOnUse" x1="1293.51" y1="434.89" x2="1251.36" y2="437.30"><stop stop-color="#ff3387"/><stop offset="1"/></linearGradient><linearGradient id="g328" gradientUnits="userSpaceOnUse" x1="1250.96" y1="430.36" x2="1266.15" y2="412.11"><stop stop-color="#ff87ff"/><stop offset="1"/></linearGradient><linearGradient id="g329" gradientUnits="userSpaceOnUse" x1="1293.51" y1="434.89" x2="1284.59" y2="415.16"><stop stop-color="#ff3387"/><stop offset="1"/></linearGradient><linearGradient id="g330" gradientUnits="userSpaceOnUse" x1="1275.01" y1="419.49" x2="1273.60" y2="432.77"><stop stop-color="#ff69a6"/><stop offset="1"/></linearGradient><linearGradient id="g331" gradientUnits="userSpaceOnUse" x1="1252.29" y1="453.52" x2="1266.56" y2="485.09"><stop stop-color="#ff4aff"/><stop offset="1"/></linearGradient><linearGradient id="g332" gradientUnits="userSpaceOnUse" x1="1254.41" y1="490.59" x2="1257.51" y2="453.97"><stop stop-color="#ff00ff"/><stop offset="1"/></linearGradient><linearGradient id="g333" gradientUnits="userSpaceOnUse" x1="1323.12" y1="459.52" x2="1252.86" y2="463.55"><stop stop-color="#ff0069"/><stop offset="1"/></linearGradient><linearGradient id="g334" gradientUnits="userSpaceOnUse" x1="1252.29" y1="453.52" x2="1278.32" y2="422.24"><stop stop-color="#ff4aff"/><stop offset="1"/></linearGradient><linearGradient id="g335" gradientUnits="userSpaceOnUse" x1="1323.12" y1="459.52" x2="1308.85" y2="427.96"><stop stop-color="#ff0069"/><stop offset="1"/></linearGradient><linearGradient id="g336" gradientUnits="userSpaceOnUse" x1="1293.51" y1="434.89" x2="1291.65" y2="456.86"><stop stop-color="#ff3387"/><stop offset="1"/></linearGradient><linearGradient id="g337" gradientUnits="userSpaceOnUse" x1="1249.10" y1="397.93" x2="1254.46" y2="409.77"><stop stop-color="#ffffff"/><stop offset="1"/></linearGradient><linearGradient id="g338" gradientUnits="userSpaceOnUse" x1="1260.21" y1="407.17" x2="1261.61" y2="400.61"><stop stop-color="#ffadcf"/><stop offset="1"/></linearGradient><linearGradient id="g339" gradientUnits="userSpaceOnUse" x1="1270.51" y1="402.51" x2="1264.00" y2="410.33"><stop stop-color="#ff9aa9"/><stop offset="1"/></linearGradient><linearGradient id="g340" gradientUnits="userSpaceOnUse" x1="1260.21" y1="407.17" x2="1267.34" y2="422.95"><stop stop-color="#ffadcf"/><stop offset="1"/></linearGradient><linearGradient id="g341" gradientUnits="userSpaceOnUse" x1="1275.01" y1="419.49" x2="1275.45" y2="407.74"><stop stop-color="#ff69a6"/><stop offset="1"/></linearGradient><linearGradient id="g342" gradientUnits="userSpaceOnUse" x1="1299.06" y1="408.62" x2="1283.87" y2="426.86"><stop stop-color="#ff556f"/><stop offset="1"/></linearGradient><linearGradient id="g343" gradientUnits="userSpaceOnUse" x1="1260.21" y1="407.17" x2="1261.61" y2="400.61"><stop stop-color="#ffadcf"/><stop offset="1"/></linearGradient><linearGradient id="g344" gradientUnits="userSpaceOnUse" x1="1299.06" y1="408.62" x2="1291.92" y2="392.83"><stop stop-color="#ff556f"/><stop offset="1"/></linearGradient><linearGradient id="g345" gradientUnits="userSpaceOnUse" x1="1270.51" y1="402.51" x2="1270.33" y2="407.55"><stop stop-color="#ff9aa9"/><stop offset="1"/></linearGradient><linearGradient id="g346" gradientUnits="userSpaceOnUse" x1="1275.01" y1="419.49" x2="1283.93" y2="439.22"><stop stop-color="#ff69a6"/><stop offset="1"/></linearGradient><linearGradient id="g347" gradientUnits="userSpaceOnUse" x1="1293.51" y1="434.89" x2="1292.63" y2="418.53"><stop stop-color="#ff3387"/><stop offset="1"/></linearGradient><linearGradient id="g348" gradientUnits="userSpaceOnUse" x1="1334.74" y1="416.25" x2="1308.71" y2="447.53"><stop stop-color="#ff2747"/><stop offset="1"/></linearGradient><linearGradient id="g349" gradientUnits="userSpaceOnUse" x1="1275.01" y1="419.49" x2="1278.29" y2="404.17"><stop stop-color="#ff69a6"/><stop offset="1"/></linearGradient><linearGradient id="g350" gradientUnits="userSpaceOnUse" x1="1334.74" y1="416.25" x2="1325.82" y2="396.52"><stop stop-color="#ff2747"/><stop offset="1"/></linearGradient><linearGradient id="g351" gradientUnits="userSpaceOnUse" x1="1299.06" y1="408.62" x2="1299.58" y2="418.16"><stop stop-color="#ff556f"/><stop offset="1"/></linearGradient><linearGradient id="g352" gradientUnits="userSpaceOnUse" x1="1293.51" y1="434.89" x2="1307.78" y2="466.46"><stop stop-color="#ff3387"/><stop offset="1"/></linearGradient><linearGradient id="g353" gradientUnits="userSpaceOnUse" x1="1323.12" y1="459.52" x2="1321.39" y2="433.07"><stop stop-color="#ff0069"/><stop offset="1"/></linearGradient><linearGradient id="g354" gradientUnits="userSpaceOnUse" x1="1391.83" y1="428.46" x2="1348.44" y2="480.60"><stop stop-color="#ff0026"/><stop offset="1"/></linearGradient><linearGradient id="g355" gradientUnits="userSpaceOnUse" x1="1293.51" y1="434.89" x2="1299.13" y2="408.63"><stop stop-color="#ff3387"/><stop offset="1"/></linearGradient><linearGradient id="g356" gradientUnits="userSpaceOnUse" x1="1391.83" y1="428.46" x2="1377.56" y2="396.89"><stop stop-color="#ff0026"/><stop offset="1"/></linearGradient><linearGradient id="g357" gradientUnits="userSpaceOnUse" x1="1334.74" y1="416.25" x2="1335.78" y2="432.13"><stop stop-color="#ff2747"/><stop offset="1"/></linearGradient><linearGradient id="g358" gradientUnits="userSpaceOnUse" x1="1249.10" y1="397.93" x2="1254.46" y2="409.77"><stop stop-color="#ffffff"/><stop offset="1"/></linearGradient><linearGradient id="g359" gradientUnits="userSpaceOnUse" x1="1270.51" y1="402.51" x2="1270.50" y2="397.88"><stop stop-color="#ff9aa9"/><stop offset="1"/></linearGradient><linearGradient id="g360" gradientUnits="userSpaceOnUse" x1="1280.82" y1="397.85" x2="1279.42" y2="404.41"><stop stop-color="#ff8b8b"/><stop offset="1"/></linearGradient><linearGradient id="g361" gradientUnits="userSpaceOnUse" x1="1270.51" y1="402.51" x2="1277.65" y2="418.29"><stop stop-color="#ff9aa9"/><stop offset="1"/></linearGradient><linearGradient id="g362" gradientUnits="userSpaceOnUse" x1="1299.06" y1="408.62" x2="1298.28" y2="399.99"><stop stop-color="#ff556f"/><stop offset="1"/></linearGradient><linearGradient id="g363" gradientUnits="userSpaceOnUse" x1="1323.11" y1="397.74" x2="1319.83" y2="413.06"><stop stop-color="#ff4848"/><stop offset="1"/></linearGradient><linearGradient id="g364" gradientUnits="userSpaceOnUse" x1="1270.51" y1="402.51" x2="1270.50" y2="397.88"><stop stop-color="#ff9aa9"/><stop offset="1"/></linearGradient><linearGradient id="g365" gradientUnits="userSpaceOnUse" x1="1323.11" y1="397.74" x2="1315.97" y2="381.96"><stop stop-color="#ff4848"/><stop offset="1"/></linearGradient><linearGradient id="g366" gradientUnits="userSpaceOnUse" x1="1280.82" y1="397.85" x2="1281.15" y2="401.55"><stop stop-color="#ff8b8b"/><stop offset="1"/></linearGradient><linearGradient id="g367" gradientUnits="userSpaceOnUse" x1="1299.06" y1="408.62" x2="1307.98" y2="428.35"><stop stop-color="#ff556f"/><stop offset="1"/></linearGradient><linearGradient id="g368" gradientUnits="userSpaceOnUse" x1="1334.74" y1="416.25" x2="1332.95" y2="403.77"><stop stop-color="#ff2747"/><stop offset="1"/></linearGradient><linearGradient id="g369" gradientUnits="userSpaceOnUse" x1="1375.97" y1="397.61" x2="1370.35" y2="423.87"><stop stop-color="#ff2020"/><stop offset="1"/></linearGradient><linearGradient id="g370" gradientUnits="userSpaceOnUse" x1="1299.06" y1="408.62" x2="1299.03" y2="397.80"><stop stop-color="#ff556f"/><stop offset="1"/></linearGradient><linearGradient id="g371" gradientUnits="userSpaceOnUse" x1="1375.97" y1="397.61" x2="1367.05" y2="377.88"><stop stop-color="#ff2020"/><stop offset="1"/></linearGradient><linearGradient id="g372" gradientUnits="userSpaceOnUse" x1="1323.11" y1="397.74" x2="1324.15" y2="405.03"><stop stop-color="#ff4848"/><stop offset="1"/></linearGradient><linearGradient id="g373" gradientUnits="userSpaceOnUse" x1="1334.74" y1="416.25" x2="1349.01" y2="447.82"><stop stop-color="#ff2747"/><stop offset="1"/></linearGradient><linearGradient id="g374" gradientUnits="userSpaceOnUse" x1="1391.83" y1="428.46" x2="1388.79" y2="408.15"><stop stop-color="#ff0026"/><stop offset="1"/></linearGradient><linearGradient id="g375" gradientUnits="userSpaceOnUse" x1="1460.54" y1="397.40" x2="1451.18" y2="441.16"><stop stop-color="#ff0000"/><stop offset="1"/></linearGradient><linearGradient id="g376" gradientUnits="userSpaceOnUse" x1="1334.74" y1="416.25" x2="1334.69" y2="397.72"><stop stop-color="#ff2747"/><stop offset="1"/></linearGradient><linearGradient id="g377" gradientUnits="userSpaceOnUse" x1="1460.54" y1="397.40" x2="1446.27" y2="365.83"><stop stop-color="#ff0000"/><stop offset="1"/></linearGradient><linearGradient id="g378" gradientUnits="userSpaceOnUse" x1="1375.97" y1="397.61" x2="1377.79" y2="409.80"><stop stop-color="#ff2020"/><stop offset="1"/></linearGradient><linearGradient id="g379" gradientUnits="userSpaceOnUse" x1="1460.54" y1="397.40" x2="1478.53" y2="375.30"><stop stop-color="#9e0000"/><stop offset="1"/></linearGradient><linearGradient id="g380" gradientUnits="userSpaceOnUse" x1="1505.54" y1="397.29" x2="1460.85" y2="401.06"><stop stop-color="#960000"/><stop offset="1"/></linearGradient><linearGradient id="g381" gradientUnits="userSpaceOnUse" x1="1457.21" y1="357.95" x2="1457.31" y2="397.41"><stop stop-color="#960f00"/><stop offset="1"/></linearGradient><linearGradient id="g382" gradientUnits="userSpaceOnUse" x1="1460.54" y1="397.40" x2="1453.11" y2="358.74"><stop stop-color="#9e0000"/><stop offset="1"/></linearGradient><linearGradient id="g383" gradientUnits="userSpaceOnUse" x1="1457.21" y1="357.95" x2="1440.16" y2="384.12"><stop stop-color="#960f00"/><stop offset="1"/></linearGradient><linearGradient id="g384" gradientUnits="userSpaceOnUse" x1="1413.02" y1="366.44" x2="1457.61" y2="362.68"><stop stop-color="#9e1800"/><stop offset="1"/></linearGradient><linearGradient id="g385" gradientUnits="userSpaceOnUse" x1="1505.54" y1="397.29" x2="1539.37" y2="364.73"><stop stop-color="#960000"/><stop offset="1"/></linearGradient><linearGradient id="g386" gradientUnits="userSpaceOnUse" x1="1570.54" y1="397.12" x2="1510.97" y2="379.22"><stop stop-color="#8a0000"/><stop offset="1"/></linearGradient><linearGradient id="g387" gradientUnits="userSpaceOnUse" x1="1521.05" y1="345.69" x2="1521.17" y2="397.25"><stop stop-color="#8a0600"/><stop offset="1"/></linearGradient><linearGradient id="g388" gradientUnits="userSpaceOnUse" x1="1505.54" y1="397.29" x2="1496.53" y2="350.40"><stop stop-color="#960000"/><stop offset="1"/></linearGradient><linearGradient id="g389" gradientUnits="userSpaceOnUse" x1="1521.05" y1="345.69" x2="1489.60" y2="384.32"><stop stop-color="#8a0600"/><stop offset="1"/></linearGradient><linearGradient id="g390" gradientUnits="userSpaceOnUse" x1="1457.21" y1="357.95" x2="1512.38" y2="374.53"><stop stop-color="#960f00"/><stop offset="1"/></linearGradient><linearGradient id="g391" gradientUnits="userSpaceOnUse" x1="1570.54" y1="397.12" x2="1628.27" y2="353.85"><stop stop-color="#8a0000"/><stop offset="1"/></linearGradient><linearGradient id="g392" gradientUnits="userSpaceOnUse" x1="1660.54" y1="396.90" x2="1592.62" y2="358.29"><stop stop-color="#790000"/><stop offset="1"/></linearGradient><linearGradient id="g393" gradientUnits="userSpaceOnUse" x1="1609.43" y1="328.71" x2="1609.60" y2="397.03"><stop stop-color="#790000"/><stop offset="1"/></linearGradient><linearGradient id="g394" gradientUnits="userSpaceOnUse" x1="1570.54" y1="397.12" x2="1559.25" y2="338.35"><stop stop-color="#8a0000"/><stop offset="1"/></linearGradient><linearGradient id="g395" gradientUnits="userSpaceOnUse" x1="1609.43" y1="328.71" x2="1555.05" y2="381.03"><stop stop-color="#790000"/><stop offset="1"/></linearGradient><linearGradient id="g396" gradientUnits="userSpaceOnUse" x1="1521.05" y1="345.69" x2="1580.55" y2="379.51"><stop stop-color="#8a0600"/><stop offset="1"/></linearGradient><linearGradient id="g397" gradientUnits="userSpaceOnUse" x1="1660.54" y1="396.90" x2="1758.09" y2="340.47"><stop stop-color="#790000"/><stop offset="1"/></linearGradient><linearGradient id="g398" gradientUnits="userSpaceOnUse" x1="1790.54" y1="396.57" x2="1713.40" y2="332.88"><stop stop-color="#610000"/><stop offset="1"/></linearGradient><linearGradient id="g399" gradientUnits="userSpaceOnUse" x1="1737.10" y1="304.18" x2="1737.33" y2="396.71"><stop stop-color="#610000"/><stop offset="1"/></linearGradient><linearGradient id="g400" gradientUnits="userSpaceOnUse" x1="1660.54" y1="396.90" x2="1646.09" y2="321.67"><stop stop-color="#790000"/><stop offset="1"/></linearGradient><linearGradient id="g401" gradientUnits="userSpaceOnUse" x1="1737.10" y1="304.18" x2="1643.58" y2="374.27"><stop stop-color="#610000"/><stop offset="1"/></linearGradient><linearGradient id="g402" gradientUnits="userSpaceOnUse" x1="1609.43" y1="328.71" x2="1673.30" y2="381.45"><stop stop-color="#790000"/><stop offset="1"/></linearGradient><linearGradient id="g403" gradientUnits="userSpaceOnUse" x1="1790.54" y1="396.57" x2="2115.74" y2="275.41"><stop stop-color="#610000"/><stop offset="1"/></linearGradient><linearGradient id="g404" gradientUnits="userSpaceOnUse" x1="2160.54" y1="395.65" x2="2081.37" y2="244.37"><stop stop-color="#610000"/><stop offset="1"/></linearGradient><linearGradient id="g405" gradientUnits="userSpaceOnUse" x1="2100.45" y1="234.38" x2="2100.86" y2="395.79"><stop stop-color="#610000"/><stop offset="1"/></linearGradient><linearGradient id="g406" gradientUnits="userSpaceOnUse" x1="1790.54" y1="396.57" x2="1771.52" y2="297.57"><stop stop-color="#610000"/><stop offset="1"/></linearGradient><linearGradient id="g407" gradientUnits="userSpaceOnUse" x1="2100.45" y1="234.38" x2="1797.94" y2="409.37"><stop stop-color="#610000"/><stop offset="1"/></linearGradient><linearGradient id="g408" gradientUnits="userSpaceOnUse" x1="1737.10" y1="304.18" x2="1786.54" y2="398.66"><stop stop-color="#610000"/><stop offset="1"/></linearGradient><linearGradient id="g409" gradientUnits="userSpaceOnUse" x1="1413.02" y1="366.44" x2="1435.49" y2="339.70"><stop stop-color="#9e1800"/><stop offset="1"/></linearGradient><linearGradient id="g410" gradientUnits="userSpaceOnUse" x1="1457.21" y1="357.95" x2="1412.75" y2="364.65"><stop stop-color="#960f00"/><stop offset="1"/></linearGradient><linearGradient id="g411" gradientUnits="userSpaceOnUse" x1="1405.16" y1="314.21" x2="1415.11" y2="366.04"><stop stop-color="#963500"/><stop offset="1"/></linearGradient><linearGradient id="g412" gradientUnits="userSpaceOnUse" x1="1413.02" y1="366.44" x2="1389.50" y2="322.60"><stop stop-color="#9e1800"/><stop offset="1"/></linearGradient><linearGradient id="g413" gradientUnits="userSpaceOnUse" x1="1405.16" y1="314.21" x2="1383.61" y2="347.28"><stop stop-color="#963500"/><stop offset="1"/></linearGradient><linearGradient id="g414" gradientUnits="userSpaceOnUse" x1="1365.50" y1="335.48" x2="1407.41" y2="329.17"><stop stop-color="#9e4100"/><stop offset="1"/></linearGradient><linearGradient id="g415" gradientUnits="userSpaceOnUse" x1="1457.21" y1="357.95" x2="1497.15" y2="320.32"><stop stop-color="#960f00"/><stop offset="1"/></linearGradient><linearGradient id="g416" gradientUnits="userSpaceOnUse" x1="1521.05" y1="345.69" x2="1458.38" y2="341.30"><stop stop-color="#8a0600"/><stop offset="1"/></linearGradient><linearGradient id="g417" gradientUnits="userSpaceOnUse" x1="1462.43" y1="283.48" x2="1476.04" y2="354.33"><stop stop-color="#8a2800"/><stop offset="1"/></linearGradient><linearGradient id="g418" gradientUnits="userSpaceOnUse" x1="1457.21" y1="357.95" x2="1427.35" y2="302.30"><stop stop-color="#960f00"/><stop offset="1"/></linearGradient><linearGradient id="g419" gradientUnits="userSpaceOnUse" x1="1462.43" y1="283.48" x2="1423.59" y2="329.70"><stop stop-color="#8a2800"/><stop offset="1"/></linearGradient><linearGradient id="g420" gradientUnits="userSpaceOnUse" x1="1405.16" y1="314.21" x2="1460.01" y2="318.05"><stop stop-color="#963500"/><stop offset="1"/></linearGradient><linearGradient id="g421" gradientUnits="userSpaceOnUse" x1="1521.05" y1="345.69" x2="1584.68" y2="296.62"><stop stop-color="#8a0600"/><stop offset="1"/></linearGradient><linearGradient id="g422" gradientUnits="userSpaceOnUse" x1="1609.43" y1="328.71" x2="1527.59" y2="312.54"><stop stop-color="#790000"/><stop offset="1"/></linearGradient><linearGradient id="g423" gradientUnits="userSpaceOnUse" x1="1541.74" y1="240.93" x2="1560.41" y2="338.13"><stop stop-color="#791d00"/><stop offset="1"/></linearGradient><linearGradient id="g424" gradientUnits="userSpaceOnUse" x1="1521.05" y1="345.69" x2="1482.03" y2="272.96"><stop stop-color="#8a0600"/><stop offset="1"/></linearGradient><linearGradient id="g425" gradientUnits="userSpaceOnUse" x1="1541.74" y1="240.93" x2="1478.49" y2="300.52"><stop stop-color="#791d00"/><stop offset="1"/></linearGradient><linearGradient id="g426" gradientUnits="userSpaceOnUse" x1="1462.43" y1="283.48" x2="1530.67" y2="296.96"><stop stop-color="#8a2800"/><stop offset="1"/></linearGradient><linearGradient id="g427" gradientUnits="userSpaceOnUse" x1="1609.43" y1="328.71" x2="1710.54" y2="263.20"><stop stop-color="#790000"/><stop offset="1"/></linearGradient><linearGradient id="g428" gradientUnits="userSpaceOnUse" x1="1737.10" y1="304.18" x2="1627.90" y2="269.89"><stop stop-color="#610000"/><stop offset="1"/></linearGradient><linearGradient id="g429" gradientUnits="userSpaceOnUse" x1="1656.29" y1="179.47" x2="1682.28" y2="314.71"><stop stop-color="#611300"/><stop offset="1"/></linearGradient><linearGradient id="g430" gradientUnits="userSpaceOnUse" x1="1609.43" y1="328.71" x2="1557.73" y2="232.35"><stop stop-color="#790000"/><stop offset="1"/></linearGradient><linearGradient id="g431" gradientUnits="userSpaceOnUse" x1="1656.29" y1="179.47" x2="1554.73" y2="257.78"><stop stop-color="#611300"/><stop offset="1"/></linearGradient><linearGradient id="g432" gradientUnits="userSpaceOnUse" x1="1541.74" y1="240.93" x2="1628.44" y2="268.15"><stop stop-color="#791d00"/><stop offset="1"/></linearGradient><linearGradient id="g433" gradientUnits="userSpaceOnUse" x1="1737.10" y1="304.18" x2="2052.91" y2="141.88"><stop stop-color="#610000"/><stop offset="1"/></linearGradient><linearGradient id="g434" gradientUnits="userSpaceOnUse" x1="2100.45" y1="234.38" x2="1917.06" y2="84.29"><stop stop-color="#610000"/><stop offset="1"/></linearGradient><linearGradient id="g435" gradientUnits="userSpaceOnUse" x1="1982.33" y1="4.54" x2="2029.12" y2="248.08"><stop stop-color="#610e00"/><stop offset="1"/></linearGradient><linearGradient id="g436" gradientUnits="userSpaceOnUse" x1="1737.10" y1="304.18" x2="1667.08" y2="173.68"><stop stop-color="#610000"/><stop offset="1"/></linearGradient><linearGradient id="g437" gradientUnits="userSpaceOnUse" x1="1982.33" y1="4.54" x2="1672.86" y2="205.04"><stop stop-color="#610e00"/><stop offset="1"/></linearGradient><linearGradient id="g438" gradientUnits="userSpaceOnUse" x1="1656.29" y1="179.47" x2="1765.81" y2="269.10"><stop stop-color="#611300"/><stop offset="1"/></linearGradient><linearGradient id="g439" gradientUnits="userSpaceOnUse" x1="1365.50" y1="335.48" x2="1390.25" y2="302.89"><stop stop-color="#9e4100"/><stop offset="1"/></linearGradient><linearGradient id="g440" gradientUnits="userSpaceOnUse" x1="1405.16" y1="314.21" x2="1362.96" y2="327.28"><stop stop-color="#963500"/><stop offset="1"/></linearGradient><linearGradient id="g441" gradientUnits="userSpaceOnUse" x1="1344.69" y1="268.30" x2="1377.33" y2="329.14"><stop stop-color="#969600"/><stop offset="1"/></linearGradient><linearGradient id="g442" gradientUnits="userSpaceOnUse" x1="1365.50" y1="335.48" x2="1319.93" y2="301.88"><stop stop-color="#9e4100"/><stop offset="1"/></linearGradient><linearGradient id="g443" gradientUnits="userSpaceOnUse" x1="1344.69" y1="268.30" x2="1320.17" y2="305.94"><stop stop-color="#969600"/><stop offset="1"/></linearGradient><linearGradient id="g444" gradientUnits="userSpaceOnUse" x1="1317.98" y1="304.52" x2="1352.59" y2="293.80"><stop stop-color="#9e9e00"/><stop offset="1"/></linearGradient><linearGradient id="g445" gradientUnits="userSpaceOnUse" x1="1405.16" y1="314.21" x2="1444.43" y2="268.13"><stop stop-color="#963500"/><stop offset="1"/></linearGradient><linearGradient id="g446" gradientUnits="userSpaceOnUse" x1="1462.43" y1="283.48" x2="1401.34" y2="297.09"><stop stop-color="#8a2800"/><stop offset="1"/></linearGradient><linearGradient id="g447" gradientUnits="userSpaceOnUse" x1="1383.27" y1="215.99" x2="1429.08" y2="301.37"><stop stop-color="#8a8a00"/><stop offset="1"/></linearGradient><linearGradient id="g448" gradientUnits="userSpaceOnUse" x1="1405.16" y1="314.21" x2="1344.06" y2="269.16"><stop stop-color="#963500"/><stop offset="1"/></linearGradient><linearGradient id="g449" gradientUnits="userSpaceOnUse" x1="1383.27" y1="215.99" x2="1343.97" y2="267.75"><stop stop-color="#8a8a00"/><stop offset="1"/></linearGradient><linearGradient id="g450" gradientUnits="userSpaceOnUse" x1="1344.69" y1="268.30" x2="1392.55" y2="257.64"><stop stop-color="#969600"/><stop offset="1"/></linearGradient><linearGradient id="g451" gradientUnits="userSpaceOnUse" x1="1462.43" y1="283.48" x2="1520.29" y2="221.05"><stop stop-color="#8a2800"/><stop offset="1"/></linearGradient><linearGradient id="g452" gradientUnits="userSpaceOnUse" x1="1541.74" y1="240.93" x2="1457.46" y2="256.44"><stop stop-color="#791d00"/><stop offset="1"/></linearGradient><linearGradient id="g453" gradientUnits="userSpaceOnUse" x1="1436.68" y1="143.55" x2="1500.73" y2="262.93"><stop stop-color="#797900"/><stop offset="1"/></linearGradient><linearGradient id="g454" gradientUnits="userSpaceOnUse" x1="1462.43" y1="283.48" x2="1378.91" y2="221.89"><stop stop-color="#8a2800"/><stop offset="1"/></linearGradient><linearGradient id="g455" gradientUnits="userSpaceOnUse" x1="1436.68" y1="143.55" x2="1378.44" y2="211.87"><stop stop-color="#797900"/><stop offset="1"/></linearGradient><linearGradient id="g456" gradientUnits="userSpaceOnUse" x1="1383.27" y1="215.99" x2="1447.82" y2="204.11"><stop stop-color="#8a8a00"/><stop offset="1"/></linearGradient><linearGradient id="g457" gradientUnits="userSpaceOnUse" x1="1541.74" y1="240.93" x2="1628.97" y2="152.51"><stop stop-color="#791d00"/><stop offset="1"/></linearGradient><linearGradient id="g458" gradientUnits="userSpaceOnUse" x1="1656.29" y1="179.47" x2="1535.55" y2="196.15"><stop stop-color="#611300"/><stop offset="1"/></linearGradient><linearGradient id="g459" gradientUnits="userSpaceOnUse" x1="1513.83" y1="38.92" x2="1604.22" y2="207.40"><stop stop-color="#616100"/><stop offset="1"/></linearGradient><linearGradient id="g460" gradientUnits="userSpaceOnUse" x1="1541.74" y1="240.93" x2="1427.17" y2="156.45"><stop stop-color="#791d00"/><stop offset="1"/></linearGradient><linearGradient id="g461" gradientUnits="userSpaceOnUse" x1="1513.83" y1="38.92" x2="1426.02" y2="133.67"><stop stop-color="#616100"/><stop offset="1"/></linearGradient><linearGradient id="g462" gradientUnits="userSpaceOnUse" x1="1436.68" y1="143.55" x2="1526.57" y2="131.13"><stop stop-color="#797900"/><stop offset="1"/></linearGradient><linearGradient id="g463" gradientUnits="userSpaceOnUse" x1="1656.29" y1="179.47" x2="1915.86" y2="-65.81"><stop stop-color="#611300"/><stop offset="1"/></linearGradient><linearGradient id="g464" gradientUnits="userSpaceOnUse" x1="1982.33" y1="4.54" x2="1695.94" y2="-45.85"><stop stop-color="#610e00"/><stop offset="1"/></linearGradient><linearGradient id="g465" gradientUnits="userSpaceOnUse" x1="1733.42" y1="-258.87" x2="1898.79" y2="49.36"><stop stop-color="#616100"/><stop offset="1"/></linearGradient><linearGradient id="g466" gradientUnits="userSpaceOnUse" x1="1656.29" y1="179.47" x2="1496.88" y2="61.92"><stop stop-color="#611300"/><stop offset="1"/></linearGradient><linearGradient id="g467" gradientUnits="userSpaceOnUse" x1="1733.42" y1="-258.87" x2="1476.23" y2="1.83"><stop stop-color="#616100"/><stop offset="1"/></linearGradient><linearGradient id="g468" gradientUnits="userSpaceOnUse" x1="1513.83" y1="38.92" x2="1676.00" y2="67.46"><stop stop-color="#616100"/><stop offset="1"/></linearGradient><linearGradient id="g469" gradientUnits="userSpaceOnUse" x1="1317.98" y1="304.52" x2="1341.71" y2="266.45"><stop stop-color="#9e9e00"/><stop offset="1"/></linearGradient><linearGradient id="g470" gradientUnits="userSpaceOnUse" x1="1344.69" y1="268.30" x2="1313.05" y2="273.30"><stop stop-color="#969600"/><stop offset="1"/></linearGradient><linearGradient id="g471" gradientUnits="userSpaceOnUse" x1="1308.71" y1="245.89" x2="1342.73" y2="270.97"><stop stop-color="#4a9600"/><stop offset="1"/></linearGradient><linearGradient id="g472" gradientUnits="userSpaceOnUse" x1="1317.98" y1="304.52" x2="1290.02" y2="293.56"><stop stop-color="#9e9e00"/><stop offset="1"/></linearGradient><linearGradient id="g473" gradientUnits="userSpaceOnUse" x1="1308.71" y1="245.89" x2="1284.66" y2="282.81"><stop stop-color="#4a9600"/><stop offset="1"/></linearGradient><linearGradient id="g474" gradientUnits="userSpaceOnUse" x1="1292.29" y1="287.78" x2="1314.77" y2="284.23"><stop stop-color="#599e00"/><stop offset="1"/></linearGradient><linearGradient id="g475" gradientUnits="userSpaceOnUse" x1="1344.69" y1="268.30" x2="1378.08" y2="212.87"><stop stop-color="#969600"/><stop offset="1"/></linearGradient><linearGradient id="g476" gradientUnits="userSpaceOnUse" x1="1383.27" y1="215.99" x2="1337.95" y2="222.68"><stop stop-color="#8a8a00"/><stop offset="1"/></linearGradient><linearGradient id="g477" gradientUnits="userSpaceOnUse" x1="1332.44" y1="185.37" x2="1379.99" y2="220.43"><stop stop-color="#3a8a00"/><stop offset="1"/></linearGradient><linearGradient id="g478" gradientUnits="userSpaceOnUse" x1="1344.69" y1="268.30" x2="1305.89" y2="253.09"><stop stop-color="#969600"/><stop offset="1"/></linearGradient><linearGradient id="g479" gradientUnits="userSpaceOnUse" x1="1332.44" y1="185.37" x2="1298.64" y2="239.61"><stop stop-color="#3a8a00"/><stop offset="1"/></linearGradient><linearGradient id="g480" gradientUnits="userSpaceOnUse" x1="1308.71" y1="245.89" x2="1340.68" y2="241.16"><stop stop-color="#4a9600"/><stop offset="1"/></linearGradient><linearGradient id="g481" gradientUnits="userSpaceOnUse" x1="1383.27" y1="215.99" x2="1428.63" y2="138.82"><stop stop-color="#8a8a00"/><stop offset="1"/></linearGradient><linearGradient id="g482" gradientUnits="userSpaceOnUse" x1="1436.68" y1="143.55" x2="1373.45" y2="153.49"><stop stop-color="#797900"/><stop offset="1"/></linearGradient><linearGradient id="g483" gradientUnits="userSpaceOnUse" x1="1365.29" y1="101.58" x2="1431.58" y2="150.46"><stop stop-color="#2b7900"/><stop offset="1"/></linearGradient><linearGradient id="g484" gradientUnits="userSpaceOnUse" x1="1383.27" y1="215.99" x2="1328.81" y2="194.64"><stop stop-color="#8a8a00"/><stop offset="1"/></linearGradient><linearGradient id="g485" gradientUnits="userSpaceOnUse" x1="1365.29" y1="101.58" x2="1319.51" y2="177.58"><stop stop-color="#2b7900"/><stop offset="1"/></linearGradient><linearGradient id="g486" gradientUnits="userSpaceOnUse" x1="1332.44" y1="185.37" x2="1377.35" y2="178.31"><stop stop-color="#3a8a00"/><stop offset="1"/></linearGradient><linearGradient id="g487" gradientUnits="userSpaceOnUse" x1="1436.68" y1="143.55" x2="1501.28" y2="31.67"><stop stop-color="#797900"/><stop offset="1"/></linearGradient><linearGradient id="g488" gradientUnits="userSpaceOnUse" x1="1513.83" y1="38.92" x2="1423.27" y2="52.22"><stop stop-color="#616100"/><stop offset="1"/></linearGradient><linearGradient id="g489" gradientUnits="userSpaceOnUse" x1="1412.74" y1="-19.45" x2="1506.11" y2="49.40"><stop stop-color="#1d6100"/><stop offset="1"/></linearGradient><linearGradient id="g490" gradientUnits="userSpaceOnUse" x1="1436.68" y1="143.55" x2="1360.54" y2="113.70"><stop stop-color="#797900"/><stop offset="1"/></linearGradient><linearGradient id="g491" gradientUnits="userSpaceOnUse" x1="1412.74" y1="-19.45" x2="1347.67" y2="91.22"><stop stop-color="#1d6100"/><stop offset="1"/></linearGradient><linearGradient id="g492" gradientUnits="userSpaceOnUse" x1="1365.29" y1="101.58" x2="1429.14" y2="92.20"><stop stop-color="#2b7900"/><stop offset="1"/></linearGradient><linearGradient id="g493" gradientUnits="userSpaceOnUse" x1="1513.83" y1="38.92" x2="1694.75" y2="-280.76"><stop stop-color="#616100"/><stop offset="1"/></linearGradient><linearGradient id="g494" gradientUnits="userSpaceOnUse" x1="1733.42" y1="-258.87" x2="1540.31" y2="-275.15"><stop stop-color="#616100"/><stop offset="1"/></linearGradient><linearGradient id="g495" gradientUnits="userSpaceOnUse" x1="1547.79" y1="-363.92" x2="1718.22" y2="-238.25"><stop stop-color="#166100"/><stop offset="1"/></linearGradient><linearGradient id="g496" gradientUnits="userSpaceOnUse" x1="1513.83" y1="38.92" x2="1406.37" y2="-3.21"><stop stop-color="#616100"/><stop offset="1"/></linearGradient><linearGradient id="g497" gradientUnits="userSpaceOnUse" x1="1547.79" y1="-363.92" x2="1364.85" y2="-47.10"><stop stop-color="#166100"/><stop offset="1"/></linearGradient><linearGradient id="g498" gradientUnits="userSpaceOnUse" x1="1412.74" y1="-19.45" x2="1518.00" y2="-10.58"><stop stop-color="#1d6100"/><stop offset="1"/></linearGradient><linearGradient id="g499" gradientUnits="userSpaceOnUse" x1="1292.29" y1="287.78" x2="1313.51" y2="248.48"><stop stop-color="#599e00"/><stop offset="1"/></linearGradient><linearGradient id="g500" gradientUnits="userSpaceOnUse" x1="1308.71" y1="245.89" x2="1281.68" y2="254.50"><stop stop-color="#4a9600"/><stop offset="1"/></linearGradient><linearGradient id="g501" gradientUnits="userSpaceOnUse" x1="1272.74" y1="226.46" x2="1310.52" y2="241.27"><stop stop-color="#169600"/><stop offset="1"/></linearGradient><linearGradient id="g502" gradientUnits="userSpaceOnUse" x1="1292.29" y1="287.78" x2="1264.81" y2="283.99"><stop stop-color="#599e00"/><stop offset="1"/></linearGradient><linearGradient id="g503" gradientUnits="userSpaceOnUse" x1="1272.74" y1="226.46" x2="1250.52" y2="260.57"><stop stop-color="#169600"/><stop offset="1"/></linearGradient><linearGradient id="g504" gradientUnits="userSpaceOnUse" x1="1266.59" y1="271.04" x2="1285.07" y2="265.15"><stop stop-color="#279e00"/><stop offset="1"/></linearGradient><linearGradient id="g505" gradientUnits="userSpaceOnUse" x1="1308.71" y1="245.89" x2="1335.76" y2="186.89"><stop stop-color="#4a9600"/><stop offset="1"/></linearGradient><linearGradient id="g506" gradientUnits="userSpaceOnUse" x1="1332.44" y1="185.37" x2="1293.24" y2="198.04"><stop stop-color="#3a8a00"/><stop offset="1"/></linearGradient><linearGradient id="g507" gradientUnits="userSpaceOnUse" x1="1281.61" y1="162.07" x2="1333.59" y2="182.45"><stop stop-color="#078a00"/><stop offset="1"/></linearGradient><linearGradient id="g508" gradientUnits="userSpaceOnUse" x1="1308.71" y1="245.89" x2="1270.78" y2="240.66"><stop stop-color="#4a9600"/><stop offset="1"/></linearGradient><linearGradient id="g509" gradientUnits="userSpaceOnUse" x1="1281.61" y1="162.07" x2="1252.69" y2="215.64"><stop stop-color="#078a00"/><stop offset="1"/></linearGradient><linearGradient id="g510" gradientUnits="userSpaceOnUse" x1="1272.74" y1="226.46" x2="1299.62" y2="217.77"><stop stop-color="#169600"/><stop offset="1"/></linearGradient><linearGradient id="g511" gradientUnits="userSpaceOnUse" x1="1332.44" y1="185.37" x2="1365.98" y2="101.85"><stop stop-color="#3a8a00"/><stop offset="1"/></linearGradient><linearGradient id="g512" gradientUnits="userSpaceOnUse" x1="1365.29" y1="101.58" x2="1310.20" y2="120.46"><stop stop-color="#2b7900"/><stop offset="1"/></linearGradient><linearGradient id="g513" gradientUnits="userSpaceOnUse" x1="1293.90" y1="72.91" x2="1365.52" y2="100.99"><stop stop-color="#007900"/><stop offset="1"/></linearGradient><linearGradient id="g514" gradientUnits="userSpaceOnUse" x1="1332.44" y1="185.37" x2="1279.41" y2="178.06"><stop stop-color="#3a8a00"/><stop offset="1"/></linearGradient><linearGradient id="g515" gradientUnits="userSpaceOnUse" x1="1293.90" y1="72.91" x2="1258.00" y2="151.24"><stop stop-color="#007900"/><stop offset="1"/></linearGradient><linearGradient id="g516" gradientUnits="userSpaceOnUse" x1="1281.61" y1="162.07" x2="1319.95" y2="148.93"><stop stop-color="#078a00"/><stop offset="1"/></linearGradient><linearGradient id="g517" gradientUnits="userSpaceOnUse" x1="1365.29" y1="101.58" x2="1409.33" y2="-20.68"><stop stop-color="#2b7900"/><stop offset="1"/></linearGradient><linearGradient id="g518" gradientUnits="userSpaceOnUse" x1="1412.74" y1="-19.45" x2="1333.28" y2="7.62"><stop stop-color="#1d6100"/><stop offset="1"/></linearGradient><linearGradient id="g519" gradientUnits="userSpaceOnUse" x1="1311.65" y1="-55.87" x2="1411.65" y2="-16.67"><stop stop-color="#006100"/><stop offset="1"/></linearGradient><linearGradient id="g520" gradientUnits="userSpaceOnUse" x1="1365.29" y1="101.58" x2="1291.36" y2="91.39"><stop stop-color="#2b7900"/><stop offset="1"/></linearGradient><linearGradient id="g521" gradientUnits="userSpaceOnUse" x1="1311.65" y1="-55.87" x2="1264.66" y2="61.17"><stop stop-color="#006100"/><stop offset="1"/></linearGradient><linearGradient id="g522" gradientUnits="userSpaceOnUse" x1="1293.90" y1="72.91" x2="1349.12" y2="54.11"><stop stop-color="#007900"/><stop offset="1"/></linearGradient><linearGradient id="g523" gradientUnits="userSpaceOnUse" x1="1412.74" y1="-19.45" x2="1523.66" y2="-371.53"><stop stop-color="#1d6100"/><stop offset="1"/></linearGradient><linearGradient id="g524" gradientUnits="userSpaceOnUse" x1="1547.79" y1="-363.92" x2="1372.28" y2="-341.90"><stop stop-color="#166100"/><stop offset="1"/></linearGradient><linearGradient id="g525" gradientUnits="userSpaceOnUse" x1="1362.18" y1="-422.40" x2="1542.93" y2="-351.54"><stop stop-color="#006100"/><stop offset="1"/></linearGradient><linearGradient id="g526" gradientUnits="userSpaceOnUse" x1="1412.74" y1="-19.45" x2="1308.61" y2="-33.80"><stop stop-color="#1d6100"/><stop offset="1"/></linearGradient><linearGradient id="g527" gradientUnits="userSpaceOnUse" x1="1362.18" y1="-422.40" x2="1239.49" y2="-81.87"><stop stop-color="#006100"/><stop offset="1"/></linearGradient><linearGradient id="g528" gradientUnits="userSpaceOnUse" x1="1311.65" y1="-55.87" x2="1406.67" y2="-67.79"><stop stop-color="#006100"/><stop offset="1"/></linearGradient><linearGradient id="g529" gradientUnits="userSpaceOnUse" x1="1266.59" y1="271.04" x2="1285.57" y2="232.84"><stop stop-color="#279e00"/><stop offset="1"/></linearGradient><linearGradient id="g530" gradientUnits="userSpaceOnUse" x1="1272.74" y1="226.46" x2="1250.78" y2="236.53"><stop stop-color="#169600"/><stop offset="1"/></linearGradient><linearGradient id="g531" gradientUnits="userSpaceOnUse" x1="1238.33" y1="209.37" x2="1274.41" y2="214.35"><stop stop-color="#009600"/><stop offset="1"/></linearGradient><linearGradient id="g532" gradientUnits="userSpaceOnUse" x1="1266.59" y1="271.04" x2="1241.94" y2="272.45"><stop stop-color="#279e00"/><stop offset="1"/></linearGradient><linearGradient id="g533" gradientUnits="userSpaceOnUse" x1="1238.33" y1="209.37" x2="1218.55" y2="239.74"><stop stop-color="#009600"/><stop offset="1"/></linearGradient><linearGradient id="g534" gradientUnits="userSpaceOnUse" x1="1240.90" y1="254.30" x2="1255.79" y2="247.47"><stop stop-color="#009e00"/><stop offset="1"/></linearGradient><linearGradient id="g535" gradientUnits="userSpaceOnUse" x1="1272.74" y1="226.46" x2="1294.97" y2="167.07"><stop stop-color="#169600"/><stop offset="1"/></linearGradient><linearGradient id="g536" gradientUnits="userSpaceOnUse" x1="1281.61" y1="162.07" x2="1249.70" y2="176.91"><stop stop-color="#078a00"/><stop offset="1"/></linearGradient><linearGradient id="g537" gradientUnits="userSpaceOnUse" x1="1234.63" y1="144.48" x2="1283.12" y2="151.16"><stop stop-color="#008a00"/><stop offset="1"/></linearGradient><linearGradient id="g538" gradientUnits="userSpaceOnUse" x1="1272.74" y1="226.46" x2="1239.42" y2="228.37"><stop stop-color="#169600"/><stop offset="1"/></linearGradient><linearGradient id="g539" gradientUnits="userSpaceOnUse" x1="1234.63" y1="144.48" x2="1209.51" y2="195.06"><stop stop-color="#008a00"/><stop offset="1"/></linearGradient><linearGradient id="g540" gradientUnits="userSpaceOnUse" x1="1238.33" y1="209.37" x2="1260.09" y2="199.26"><stop stop-color="#009600"/><stop offset="1"/></linearGradient><linearGradient id="g541" gradientUnits="userSpaceOnUse" x1="1281.61" y1="162.07" x2="1305.96" y2="76.34"><stop stop-color="#078a00"/><stop offset="1"/></linearGradient><linearGradient id="g542" gradientUnits="userSpaceOnUse" x1="1293.90" y1="72.91" x2="1248.94" y2="94.72"><stop stop-color="#007900"/><stop offset="1"/></linearGradient><linearGradient id="g543" gradientUnits="userSpaceOnUse" x1="1229.49" y1="54.63" x2="1295.18" y2="63.68"><stop stop-color="#007900"/><stop offset="1"/></linearGradient><linearGradient id="g544" gradientUnits="userSpaceOnUse" x1="1281.61" y1="162.07" x2="1235.78" y2="164.69"><stop stop-color="#078a00"/><stop offset="1"/></linearGradient><linearGradient id="g545" gradientUnits="userSpaceOnUse" x1="1229.49" y1="54.63" x2="1200.62" y2="131.75"><stop stop-color="#007900"/><stop offset="1"/></linearGradient><linearGradient id="g546" gradientUnits="userSpaceOnUse" x1="1234.63" y1="144.48" x2="1265.76" y2="129.38"><stop stop-color="#008a00"/><stop offset="1"/></linearGradient><linearGradient id="g547" gradientUnits="userSpaceOnUse" x1="1293.90" y1="72.91" x2="1321.20" y2="-53.81"><stop stop-color="#007900"/><stop offset="1"/></linearGradient><linearGradient id="g548" gradientUnits="userSpaceOnUse" x1="1311.65" y1="-55.87" x2="1246.72" y2="-24.37"><stop stop-color="#006100"/><stop offset="1"/></linearGradient><linearGradient id="g549" gradientUnits="userSpaceOnUse" x1="1222.08" y1="-75.16" x2="1312.59" y2="-62.69"><stop stop-color="#006100"/><stop offset="1"/></linearGradient><linearGradient id="g550" gradientUnits="userSpaceOnUse" x1="1293.90" y1="72.91" x2="1230.75" y2="76.52"><stop stop-color="#007900"/><stop offset="1"/></linearGradient><linearGradient id="g551" gradientUnits="userSpaceOnUse" x1="1222.08" y1="-75.16" x2="1188.53" y2="42.99"><stop stop-color="#006100"/><stop offset="1"/></linearGradient><linearGradient id="g552" gradientUnits="userSpaceOnUse" x1="1229.49" y1="54.63" x2="1274.46" y2="32.82"><stop stop-color="#007900"/><stop offset="1"/></linearGradient><linearGradient id="g553" gradientUnits="userSpaceOnUse" x1="1311.65" y1="-55.87" x2="1362.04" y2="-422.42"><stop stop-color="#006100"/><stop offset="1"/></linearGradient><linearGradient id="g554" gradientUnits="userSpaceOnUse" x1="1362.18" y1="-422.40" x2="1218.91" y2="-381.61"><stop stop-color="#006100"/><stop offset="1"/></linearGradient><linearGradient id="g555" gradientUnits="userSpaceOnUse" x1="1200.98" y1="-444.56" x2="1362.17" y2="-422.34"><stop stop-color="#006100"/><stop offset="1"/></linearGradient><linearGradient id="g556" gradientUnits="userSpaceOnUse" x1="1311.65" y1="-55.87" x2="1223.47" y2="-50.83"><stop stop-color="#006100"/><stop offset="1"/></linearGradient><linearGradient id="g557" gradientUnits="userSpaceOnUse" x1="1200.98" y1="-444.56" x2="1125.88" y2="-95.89"><stop stop-color="#006100"/><stop offset="1"/></linearGradient><linearGradient id="g558" gradientUnits="userSpaceOnUse" x1="1222.08" y1="-75.16" x2="1299.86" y2="-97.31"><stop stop-color="#006100"/><stop offset="1"/></linearGradient><linearGradient id="g559" gradientUnits="userSpaceOnUse" x1="1240.90" y1="254.30" x2="1220.81" y2="244.19"><stop stop-color="#009e00"/><stop offset="1"/></linearGradient><linearGradient id="g560" gradientUnits="userSpaceOnUse" x1="1238.33" y1="209.37" x2="1245.33" y2="253.60"><stop stop-color="#009600"/><stop offset="1"/></linearGradient><linearGradient id="g561" gradientUnits="userSpaceOnUse" x1="1213.54" y1="258.63" x2="1241.06" y2="257.06"><stop stop-color="#009609"/><stop offset="1"/></linearGradient><linearGradient id="g562" gradientUnits="userSpaceOnUse" x1="1240.90" y1="254.30" x2="1214.18" y2="261.12"><stop stop-color="#009e00"/><stop offset="1"/></linearGradient><linearGradient id="g563" gradientUnits="userSpaceOnUse" x1="1213.54" y1="258.63" x2="1236.77" y2="266.50"><stop stop-color="#009609"/><stop offset="1"/></linearGradient><linearGradient id="g564" gradientUnits="userSpaceOnUse" x1="1224.67" y1="302.23" x2="1217.67" y2="257.98"><stop stop-color="#009e20"/><stop offset="1"/></linearGradient><linearGradient id="g565" gradientUnits="userSpaceOnUse" x1="1238.33" y1="209.37" x2="1205.05" y2="185.20"><stop stop-color="#009600"/><stop offset="1"/></linearGradient><linearGradient id="g566" gradientUnits="userSpaceOnUse" x1="1234.63" y1="144.48" x2="1215.42" y2="201.68"><stop stop-color="#008a00"/><stop offset="1"/></linearGradient><linearGradient id="g567" gradientUnits="userSpaceOnUse" x1="1197.46" y1="195.65" x2="1237.42" y2="193.37"><stop stop-color="#008a00"/><stop offset="1"/></linearGradient><linearGradient id="g568" gradientUnits="userSpaceOnUse" x1="1238.33" y1="209.37" x2="1203.25" y2="218.33"><stop stop-color="#009600"/><stop offset="1"/></linearGradient><linearGradient id="g569" gradientUnits="userSpaceOnUse" x1="1197.46" y1="195.65" x2="1235.58" y2="214.84"><stop stop-color="#008a00"/><stop offset="1"/></linearGradient><linearGradient id="g570" gradientUnits="userSpaceOnUse" x1="1213.54" y1="258.63" x2="1230.91" y2="206.88"><stop stop-color="#009609"/><stop offset="1"/></linearGradient><linearGradient id="g571" gradientUnits="userSpaceOnUse" x1="1234.63" y1="144.48" x2="1187.16" y2="96.59"><stop stop-color="#008a00"/><stop offset="1"/></linearGradient><linearGradient id="g572" gradientUnits="userSpaceOnUse" x1="1229.49" y1="54.63" x2="1191.04" y2="118.05"><stop stop-color="#007900"/><stop offset="1"/></linearGradient><linearGradient id="g573" gradientUnits="userSpaceOnUse" x1="1175.20" y1="108.45" x2="1232.38" y2="105.18"><stop stop-color="#007900"/><stop offset="1"/></linearGradient><linearGradient id="g574" gradientUnits="userSpaceOnUse" x1="1234.63" y1="144.48" x2="1187.47" y2="156.52"><stop stop-color="#008a00"/><stop offset="1"/></linearGradient><linearGradient id="g575" gradientUnits="userSpaceOnUse" x1="1175.20" y1="108.45" x2="1231.23" y2="149.15"><stop stop-color="#007900"/><stop offset="1"/></linearGradient><linearGradient id="g576" gradientUnits="userSpaceOnUse" x1="1197.46" y1="195.65" x2="1230.13" y2="141.76"><stop stop-color="#008a00"/><stop offset="1"/></linearGradient><linearGradient id="g577" gradientUnits="userSpaceOnUse" x1="1229.49" y1="54.63" x2="1165.13" y2="-33.62"><stop stop-color="#007900"/><stop offset="1"/></linearGradient><linearGradient id="g578" gradientUnits="userSpaceOnUse" x1="1222.08" y1="-75.16" x2="1161.28" y2="-2.29"><stop stop-color="#006100"/><stop offset="1"/></linearGradient><linearGradient id="g579" gradientUnits="userSpaceOnUse" x1="1143.04" y1="-17.51" x2="1225.11" y2="-22.20"><stop stop-color="#006100"/><stop offset="1"/></linearGradient><linearGradient id="g580" gradientUnits="userSpaceOnUse" x1="1229.49" y1="54.63" x2="1165.62" y2="70.93"><stop stop-color="#007900"/><stop offset="1"/></linearGradient><linearGradient id="g581" gradientUnits="userSpaceOnUse" x1="1143.04" y1="-17.51" x2="1221.95" y2="62.10"><stop stop-color="#006100"/><stop offset="1"/></linearGradient><linearGradient id="g582" gradientUnits="userSpaceOnUse" x1="1175.20" y1="108.45" x2="1223.96" y2="50.01"><stop stop-color="#007900"/><stop offset="1"/></linearGradient><linearGradient id="g583" gradientUnits="userSpaceOnUse" x1="1222.08" y1="-75.16" x2="1078.44" y2="-388.36"><stop stop-color="#006100"/><stop offset="1"/></linearGradient><linearGradient id="g584" gradientUnits="userSpaceOnUse" x1="1200.98" y1="-444.56" x2="1058.46" y2="-363.75"><stop stop-color="#006100"/><stop offset="1"/></linearGradient><linearGradient id="g585" gradientUnits="userSpaceOnUse" x1="1051.51" y1="-376.01" x2="1204.40" y2="-384.74"><stop stop-color="#006100"/><stop offset="1"/></linearGradient><linearGradient id="g586" gradientUnits="userSpaceOnUse" x1="1222.08" y1="-75.16" x2="1134.06" y2="-52.69"><stop stop-color="#006100"/><stop offset="1"/></linearGradient><linearGradient id="g587" gradientUnits="userSpaceOnUse" x1="1051.51" y1="-376.01" x2="1253.97" y2="-98.42"><stop stop-color="#006100"/><stop offset="1"/></linearGradient><linearGradient id="g588" gradientUnits="userSpaceOnUse" x1="1143.04" y1="-17.51" x2="1227.59" y2="-65.45"><stop stop-color="#006100"/><stop offset="1"/></linearGradient><linearGradient id="g589" gradientUnits="userSpaceOnUse" x1="1224.67" y1="302.23" x2="1197.26" y2="285.83"><stop stop-color="#009e20"/><stop offset="1"/></linearGradient><linearGradient id="g590" gradientUnits="userSpaceOnUse" x1="1213.54" y1="258.63" x2="1226.50" y2="301.68"><stop stop-color="#009609"/><stop offset="1"/></linearGradient><linearGradient id="g591" gradientUnits="userSpaceOnUse" x1="1179.27" y1="315.90" x2="1225.17" y2="304.18"><stop stop-color="#009632"/><stop offset="1"/></linearGradient><linearGradient id="g592" gradientUnits="userSpaceOnUse" x1="1224.67" y1="302.23" x2="1191.60" y2="330.38"><stop stop-color="#009e20"/><stop offset="1"/></linearGradient><linearGradient id="g593" gradientUnits="userSpaceOnUse" x1="1179.27" y1="315.90" x2="1215.85" y2="328.28"><stop stop-color="#009632"/><stop offset="1"/></linearGradient><linearGradient id="g594" gradientUnits="userSpaceOnUse" x1="1208.44" y1="350.16" x2="1196.56" y2="310.69"><stop stop-color="#009e4f"/><stop offset="1"/></linearGradient><linearGradient id="g595" gradientUnits="userSpaceOnUse" x1="1213.54" y1="258.63" x2="1173.13" y2="224.18"><stop stop-color="#009609"/><stop offset="1"/></linearGradient><linearGradient id="g596" gradientUnits="userSpaceOnUse" x1="1197.46" y1="195.65" x2="1203.97" y2="259.60"><stop stop-color="#008a00"/><stop offset="1"/></linearGradient><linearGradient id="g597" gradientUnits="userSpaceOnUse" x1="1137.14" y1="266.40" x2="1210.73" y2="247.62"><stop stop-color="#008a1b"/><stop offset="1"/></linearGradient><linearGradient id="g598" gradientUnits="userSpaceOnUse" x1="1213.54" y1="258.63" x2="1165.40" y2="299.61"><stop stop-color="#009609"/><stop offset="1"/></linearGradient><linearGradient id="g599" gradientUnits="userSpaceOnUse" x1="1137.14" y1="266.40" x2="1189.97" y2="298.02"><stop stop-color="#008a1b"/><stop offset="1"/></linearGradient><linearGradient id="g600" gradientUnits="userSpaceOnUse" x1="1179.27" y1="315.90" x2="1173.86" y2="262.67"><stop stop-color="#009632"/><stop offset="1"/></linearGradient><linearGradient id="g601" gradientUnits="userSpaceOnUse" x1="1197.46" y1="195.65" x2="1143.68" y2="137.68"><stop stop-color="#008a00"/><stop offset="1"/></linearGradient><linearGradient id="g602" gradientUnits="userSpaceOnUse" x1="1175.20" y1="108.45" x2="1176.84" y2="196.04"><stop stop-color="#007900"/><stop offset="1"/></linearGradient><linearGradient id="g603" gradientUnits="userSpaceOnUse" x1="1078.80" y1="197.87" x2="1190.73" y2="169.29"><stop stop-color="#00790b"/><stop offset="1"/></linearGradient><linearGradient id="g604" gradientUnits="userSpaceOnUse" x1="1197.46" y1="195.65" x2="1127.56" y2="255.15"><stop stop-color="#008a00"/><stop offset="1"/></linearGradient><linearGradient id="g605" gradientUnits="userSpaceOnUse" x1="1078.80" y1="197.87" x2="1146.42" y2="255.52"><stop stop-color="#00790b"/><stop offset="1"/></linearGradient><linearGradient id="g606" gradientUnits="userSpaceOnUse" x1="1137.14" y1="266.40" x2="1135.84" y2="196.80"><stop stop-color="#008a1b"/><stop offset="1"/></linearGradient><linearGradient id="g607" gradientUnits="userSpaceOnUse" x1="1175.20" y1="108.45" x2="1101.80" y2="14.81"><stop stop-color="#007900"/><stop offset="1"/></linearGradient><linearGradient id="g608" gradientUnits="userSpaceOnUse" x1="1143.04" y1="-17.51" x2="1136.48" y2="106.40"><stop stop-color="#006100"/><stop offset="1"/></linearGradient><linearGradient id="g609" gradientUnits="userSpaceOnUse" x1="994.53" y1="98.88" x2="1161.85" y2="56.16"><stop stop-color="#006101"/><stop offset="1"/></linearGradient><linearGradient id="g610" gradientUnits="userSpaceOnUse" x1="1175.20" y1="108.45" x2="1075.17" y2="193.60"><stop stop-color="#007900"/><stop offset="1"/></linearGradient><linearGradient id="g611" gradientUnits="userSpaceOnUse" x1="994.53" y1="98.88" x2="1082.87" y2="194.10"><stop stop-color="#006101"/><stop offset="1"/></linearGradient><linearGradient id="g612" gradientUnits="userSpaceOnUse" x1="1078.80" y1="197.87" x2="1083.79" y2="103.61"><stop stop-color="#00790b"/><stop offset="1"/></linearGradient><linearGradient id="g613" gradientUnits="userSpaceOnUse" x1="1143.04" y1="-17.51" x2="951.92" y2="-311.20"><stop stop-color="#006100"/><stop offset="1"/></linearGradient><linearGradient id="g614" gradientUnits="userSpaceOnUse" x1="1051.51" y1="-376.01" x2="936.34" y2="-105.52"><stop stop-color="#006100"/><stop offset="1"/></linearGradient><linearGradient id="g615" gradientUnits="userSpaceOnUse" x1="754.70" y1="-182.86" x2="1079.64" y2="-265.82"><stop stop-color="#006100"/><stop offset="1"/></linearGradient><linearGradient id="g616" gradientUnits="userSpaceOnUse" x1="1143.04" y1="-17.51" x2="999.48" y2="104.69"><stop stop-color="#006100"/><stop offset="1"/></linearGradient><linearGradient id="g617" gradientUnits="userSpaceOnUse" x1="754.70" y1="-182.86" x2="982.75" y2="108.11"><stop stop-color="#006100"/><stop offset="1"/></linearGradient><linearGradient id="g618" gradientUnits="userSpaceOnUse" x1="994.53" y1="98.88" x2="1059.28" y2="-53.17"><stop stop-color="#006101"/><stop offset="1"/></linearGradient><linearGradient id="g619" gradientUnits="userSpaceOnUse" x1="1208.44" y1="350.16" x2="1171.53" y2="335.79"><stop stop-color="#009e4f"/><stop offset="1"/></linearGradient><linearGradient id="g620" gradientUnits="userSpaceOnUse" x1="1179.27" y1="315.90" x2="1207.04" y2="351.27"><stop stop-color="#009632"/><stop offset="1"/></linearGradient><linearGradient id="g621" gradientUnits="userSpaceOnUse" x1="1147.21" y1="398.23" x2="1206.44" y2="347.81"><stop stop-color="#009696"/><stop offset="1"/></linearGradient><linearGradient id="g622" gradientUnits="userSpaceOnUse" x1="1208.44" y1="350.16" x2="1208.58" y2="398.05"><stop stop-color="#009e4f"/><stop offset="1"/></linearGradient><linearGradient id="g623" gradientUnits="userSpaceOnUse" x1="1147.21" y1="398.23" x2="1187.55" y2="411.88"><stop stop-color="#009696"/><stop offset="1"/></linearGradient><linearGradient id="g624" gradientUnits="userSpaceOnUse" x1="1192.21" y1="398.10" x2="1175.12" y2="376.32"><stop stop-color="#009e9e"/><stop offset="1"/></linearGradient><linearGradient id="g625" gradientUnits="userSpaceOnUse" x1="1179.27" y1="315.90" x2="1125.80" y2="293.65"><stop stop-color="#009632"/><stop offset="1"/></linearGradient><linearGradient id="g626" gradientUnits="userSpaceOnUse" x1="1137.14" y1="266.40" x2="1179.24" y2="315.92"><stop stop-color="#008a1b"/><stop offset="1"/></linearGradient><linearGradient id="g627" gradientUnits="userSpaceOnUse" x1="1082.21" y1="398.42" x2="1179.22" y2="315.84"><stop stop-color="#008a8a"/><stop offset="1"/></linearGradient><linearGradient id="g628" gradientUnits="userSpaceOnUse" x1="1179.27" y1="315.90" x2="1179.51" y2="398.13"><stop stop-color="#009632"/><stop offset="1"/></linearGradient><linearGradient id="g629" gradientUnits="userSpaceOnUse" x1="1082.21" y1="398.42" x2="1138.59" y2="420.37"><stop stop-color="#008a8a"/><stop offset="1"/></linearGradient><linearGradient id="g630" gradientUnits="userSpaceOnUse" x1="1147.21" y1="398.23" x2="1120.04" y2="366.26"><stop stop-color="#009696"/><stop offset="1"/></linearGradient><linearGradient id="g631" gradientUnits="userSpaceOnUse" x1="1137.14" y1="266.40" x2="1063.03" y2="234.45"><stop stop-color="#008a1b"/><stop offset="1"/></linearGradient><linearGradient id="g632" gradientUnits="userSpaceOnUse" x1="1078.80" y1="197.87" x2="1139.44" y2="264.31"><stop stop-color="#00790b"/><stop offset="1"/></linearGradient><linearGradient id="g633" gradientUnits="userSpaceOnUse" x1="992.21" y1="398.68" x2="1141.54" y2="271.57"><stop stop-color="#007979"/><stop offset="1"/></linearGradient><linearGradient id="g634" gradientUnits="userSpaceOnUse" x1="1137.14" y1="266.40" x2="1137.53" y2="398.26"><stop stop-color="#008a1b"/><stop offset="1"/></linearGradient><linearGradient id="g635" gradientUnits="userSpaceOnUse" x1="992.21" y1="398.68" x2="1068.84" y2="430.56"><stop stop-color="#007979"/><stop offset="1"/></linearGradient><linearGradient id="g636" gradientUnits="userSpaceOnUse" x1="1082.21" y1="398.42" x2="1041.44" y2="353.75"><stop stop-color="#008a8a"/><stop offset="1"/></linearGradient><linearGradient id="g637" gradientUnits="userSpaceOnUse" x1="1078.80" y1="197.87" x2="971.71" y2="150.67"><stop stop-color="#00790b"/><stop offset="1"/></linearGradient><linearGradient id="g638" gradientUnits="userSpaceOnUse" x1="994.53" y1="98.88" x2="1082.93" y2="194.04"><stop stop-color="#006101"/><stop offset="1"/></linearGradient><linearGradient id="g639" gradientUnits="userSpaceOnUse" x1="862.22" y1="399.06" x2="1087.10" y2="207.62"><stop stop-color="#006161"/><stop offset="1"/></linearGradient><linearGradient id="g640" gradientUnits="userSpaceOnUse" x1="1078.80" y1="197.87" x2="1079.39" y2="398.43"><stop stop-color="#00790b"/><stop offset="1"/></linearGradient><linearGradient id="g641" gradientUnits="userSpaceOnUse" x1="862.22" y1="399.06" x2="971.70" y2="446.27"><stop stop-color="#006161"/><stop offset="1"/></linearGradient><linearGradient id="g642" gradientUnits="userSpaceOnUse" x1="992.21" y1="398.68" x2="932.19" y2="334.06"><stop stop-color="#007979"/><stop offset="1"/></linearGradient><linearGradient id="g643" gradientUnits="userSpaceOnUse" x1="994.53" y1="98.88" x2="689.65" y2="-38.38"><stop stop-color="#006101"/><stop offset="1"/></linearGradient><linearGradient id="g644" gradientUnits="userSpaceOnUse" x1="754.70" y1="-182.86" x2="942.42" y2="130.14"><stop stop-color="#006100"/><stop offset="1"/></linearGradient><linearGradient id="g645" gradientUnits="userSpaceOnUse" x1="492.22" y1="400.15" x2="932.17" y2="25.63"><stop stop-color="#006161"/><stop offset="1"/></linearGradient><linearGradient id="g646" gradientUnits="userSpaceOnUse" x1="994.53" y1="98.88" x2="995.41" y2="398.67"><stop stop-color="#006101"/><stop offset="1"/></linearGradient><linearGradient id="g647" gradientUnits="userSpaceOnUse" x1="492.22" y1="400.15" x2="801.62" y2="536.53"><stop stop-color="#006161"/><stop offset="1"/></linearGradient><linearGradient id="g648" gradientUnits="userSpaceOnUse" x1="862.22" y1="399.06" x2="764.81" y2="236.66"><stop stop-color="#006161"/><stop offset="1"/></linearGradient><linearGradient id="g649" gradientUnits="userSpaceOnUse" x1="1192.21" y1="398.10" x2="1147.89" y2="392.70"><stop stop-color="#009e9e"/><stop offset="1"/></linearGradient><linearGradient id="g650" gradientUnits="userSpaceOnUse" x1="1147.21" y1="398.23" x2="1176.07" y2="419.75"><stop stop-color="#009696"/><stop offset="1"/></linearGradient><linearGradient id="g651" gradientUnits="userSpaceOnUse" x1="1138.46" y1="470.16" x2="1138.25" y2="398.25"><stop stop-color="#003896"/><stop offset="1"/></linearGradient><linearGradient id="g652" gradientUnits="userSpaceOnUse" x1="1192.21" y1="398.10" x2="1209.14" y2="424.02"><stop stop-color="#009e9e"/><stop offset="1"/></linearGradient><linearGradient id="g653" gradientUnits="userSpaceOnUse" x1="1138.46" y1="470.16" x2="1164.80" y2="479.08"><stop stop-color="#003896"/><stop offset="1"/></linearGradient><linearGradient id="g654" gradientUnits="userSpaceOnUse" x1="1176.14" y1="445.56" x2="1163.72" y2="436.30"><stop stop-color="#004f9e"/><stop offset="1"/></linearGradient><linearGradient id="g655" gradientUnits="userSpaceOnUse" x1="1147.21" y1="398.23" x2="1082.23" y2="399.33"><stop stop-color="#009696"/><stop offset="1"/></linearGradient><linearGradient id="g656" gradientUnits="userSpaceOnUse" x1="1082.21" y1="398.42" x2="1130.44" y2="426.77"><stop stop-color="#008a8a"/><stop offset="1"/></linearGradient><linearGradient id="g657" gradientUnits="userSpaceOnUse" x1="1084.03" y1="505.70" x2="1083.72" y2="398.41"><stop stop-color="#00238a"/><stop offset="1"/></linearGradient><linearGradient id="g658" gradientUnits="userSpaceOnUse" x1="1147.21" y1="398.23" x2="1177.53" y2="444.66"><stop stop-color="#009696"/><stop offset="1"/></linearGradient><linearGradient id="g659" gradientUnits="userSpaceOnUse" x1="1084.03" y1="505.70" x2="1133.41" y2="511.71"><stop stop-color="#00238a"/><stop offset="1"/></linearGradient><linearGradient id="g660" gradientUnits="userSpaceOnUse" x1="1138.46" y1="470.16" x2="1113.54" y2="455.51"><stop stop-color="#003896"/><stop offset="1"/></linearGradient><linearGradient id="g661" gradientUnits="userSpaceOnUse" x1="1082.21" y1="398.42" x2="993.18" y2="407.80"><stop stop-color="#008a8a"/><stop offset="1"/></linearGradient><linearGradient id="g662" gradientUnits="userSpaceOnUse" x1="992.21" y1="398.68" x2="1065.83" y2="433.28"><stop stop-color="#007979"/><stop offset="1"/></linearGradient><linearGradient id="g663" gradientUnits="userSpaceOnUse" x1="1008.67" y1="554.90" x2="1008.22" y2="398.64"><stop stop-color="#001279"/><stop offset="1"/></linearGradient><linearGradient id="g664" gradientUnits="userSpaceOnUse" x1="1082.21" y1="398.42" x2="1131.87" y2="474.47"><stop stop-color="#008a8a"/><stop offset="1"/></linearGradient><linearGradient id="g665" gradientUnits="userSpaceOnUse" x1="1008.67" y1="554.90" x2="1084.85" y2="553.61"><stop stop-color="#001279"/><stop offset="1"/></linearGradient><linearGradient id="g666" gradientUnits="userSpaceOnUse" x1="1084.03" y1="505.70" x2="1041.25" y2="485.59"><stop stop-color="#00238a"/><stop offset="1"/></linearGradient><linearGradient id="g667" gradientUnits="userSpaceOnUse" x1="992.21" y1="398.68" x2="865.63" y2="419.66"><stop stop-color="#007979"/><stop offset="1"/></linearGradient><linearGradient id="g668" gradientUnits="userSpaceOnUse" x1="862.22" y1="399.06" x2="973.65" y2="444.36"><stop stop-color="#006161"/><stop offset="1"/></linearGradient><linearGradient id="g669" gradientUnits="userSpaceOnUse" x1="899.82" y1="625.97" x2="899.15" y2="398.96"><stop stop-color="#001561"/><stop offset="1"/></linearGradient><linearGradient id="g670" gradientUnits="userSpaceOnUse" x1="992.21" y1="398.68" x2="1068.64" y2="515.75"><stop stop-color="#007979"/><stop offset="1"/></linearGradient><linearGradient id="g671" gradientUnits="userSpaceOnUse" x1="899.82" y1="625.97" x2="1014.88" y2="613.84"><stop stop-color="#001561"/><stop offset="1"/></linearGradient><linearGradient id="g672" gradientUnits="userSpaceOnUse" x1="1008.67" y1="554.90" x2="940.05" y2="527.00"><stop stop-color="#001279"/><stop offset="1"/></linearGradient><linearGradient id="g673" gradientUnits="userSpaceOnUse" x1="862.22" y1="399.06" x2="510.33" y2="479.44"><stop stop-color="#006161"/><stop offset="1"/></linearGradient><linearGradient id="g674" gradientUnits="userSpaceOnUse" x1="492.22" y1="400.15" x2="755.58" y2="567.19"><stop stop-color="#006161"/><stop offset="1"/></linearGradient><linearGradient id="g675" gradientUnits="userSpaceOnUse" x1="590.00" y1="828.24" x2="588.75" y2="399.86"><stop stop-color="#002a61"/><stop offset="1"/></linearGradient><linearGradient id="g676" gradientUnits="userSpaceOnUse" x1="862.22" y1="399.06" x2="977.32" y2="575.37"><stop stop-color="#006161"/><stop offset="1"/></linearGradient><linearGradient id="g677" gradientUnits="userSpaceOnUse" x1="590.00" y1="828.24" x2="924.16" y2="772.86"><stop stop-color="#002a61"/><stop offset="1"/></linearGradient><linearGradient id="g678" gradientUnits="userSpaceOnUse" x1="899.82" y1="625.97" x2="770.37" y2="543.86"><stop stop-color="#001561"/><stop offset="1"/></linearGradient><linearGradient id="g679" gradientUnits="userSpaceOnUse" x1="1176.14" y1="445.56" x2="1143.38" y2="440.19"><stop stop-color="#004f9e"/><stop offset="1"/></linearGradient><linearGradient id="g680" gradientUnits="userSpaceOnUse" x1="1138.46" y1="470.16" x2="1155.88" y2="480.32"><stop stop-color="#003896"/><stop offset="1"/></linearGradient><linearGradient id="g681" gradientUnits="userSpaceOnUse" x1="1129.32" y1="525.88" x2="1106.54" y2="491.00"><stop stop-color="#000d96"/><stop offset="1"/></linearGradient><linearGradient id="g682" gradientUnits="userSpaceOnUse" x1="1176.14" y1="445.56" x2="1191.26" y2="459.72"><stop stop-color="#004f9e"/><stop offset="1"/></linearGradient><linearGradient id="g683" gradientUnits="userSpaceOnUse" x1="1129.32" y1="525.88" x2="1146.93" y2="531.85"><stop stop-color="#000d96"/><stop offset="1"/></linearGradient><linearGradient id="g684" gradientUnits="userSpaceOnUse" x1="1160.07" y1="493.03" x2="1151.41" y2="487.98"><stop stop-color="#00209e"/><stop offset="1"/></linearGradient><linearGradient id="g685" gradientUnits="userSpaceOnUse" x1="1138.46" y1="470.16" x2="1083.59" y2="470.86"><stop stop-color="#003896"/><stop offset="1"/></linearGradient><linearGradient id="g686" gradientUnits="userSpaceOnUse" x1="1084.03" y1="505.70" x2="1112.37" y2="520.41"><stop stop-color="#00238a"/><stop offset="1"/></linearGradient><linearGradient id="g687" gradientUnits="userSpaceOnUse" x1="1084.89" y1="573.33" x2="1053.68" y2="525.52"><stop stop-color="#00008a"/><stop offset="1"/></linearGradient><linearGradient id="g688" gradientUnits="userSpaceOnUse" x1="1138.46" y1="470.16" x2="1161.39" y2="491.63"><stop stop-color="#003896"/><stop offset="1"/></linearGradient><linearGradient id="g689" gradientUnits="userSpaceOnUse" x1="1084.89" y1="573.33" x2="1120.57" y2="579.19"><stop stop-color="#00008a"/><stop offset="1"/></linearGradient><linearGradient id="g690" gradientUnits="userSpaceOnUse" x1="1129.32" y1="525.88" x2="1113.73" y2="517.79"><stop stop-color="#000d96"/><stop offset="1"/></linearGradient><linearGradient id="g691" gradientUnits="userSpaceOnUse" x1="1084.03" y1="505.70" x2="1002.56" y2="519.94"><stop stop-color="#00238a"/><stop offset="1"/></linearGradient><linearGradient id="g692" gradientUnits="userSpaceOnUse" x1="1008.67" y1="554.90" x2="1052.57" y2="574.87"><stop stop-color="#001279"/><stop offset="1"/></linearGradient><linearGradient id="g693" gradientUnits="userSpaceOnUse" x1="1023.39" y1="639.04" x2="980.48" y2="573.31"><stop stop-color="#000a79"/><stop offset="1"/></linearGradient><linearGradient id="g694" gradientUnits="userSpaceOnUse" x1="1084.03" y1="505.70" x2="1118.24" y2="537.72"><stop stop-color="#00238a"/><stop offset="1"/></linearGradient><linearGradient id="g695" gradientUnits="userSpaceOnUse" x1="1023.39" y1="639.04" x2="1085.72" y2="638.24"><stop stop-color="#000a79"/><stop offset="1"/></linearGradient><linearGradient id="g696" gradientUnits="userSpaceOnUse" x1="1084.89" y1="573.33" x2="1058.69" y2="561.42"><stop stop-color="#00008a"/><stop offset="1"/></linearGradient><linearGradient id="g697" gradientUnits="userSpaceOnUse" x1="1008.67" y1="554.90" x2="889.31" y2="593.28"><stop stop-color="#001279"/><stop offset="1"/></linearGradient><linearGradient id="g698" gradientUnits="userSpaceOnUse" x1="899.82" y1="625.97" x2="967.62" y2="654.04"><stop stop-color="#001561"/><stop offset="1"/></linearGradient><linearGradient id="g699" gradientUnits="userSpaceOnUse" x1="934.54" y1="733.94" x2="874.74" y2="642.34"><stop stop-color="#001261"/><stop offset="1"/></linearGradient><linearGradient id="g700" gradientUnits="userSpaceOnUse" x1="1008.67" y1="554.90" x2="1058.49" y2="601.54"><stop stop-color="#001279"/><stop offset="1"/></linearGradient><linearGradient id="g701" gradientUnits="userSpaceOnUse" x1="934.54" y1="733.94" x2="1036.85" y2="716.05"><stop stop-color="#001261"/><stop offset="1"/></linearGradient><linearGradient id="g702" gradientUnits="userSpaceOnUse" x1="1023.39" y1="639.04" x2="981.09" y2="621.52"><stop stop-color="#000a79"/><stop offset="1"/></linearGradient><linearGradient id="g703" gradientUnits="userSpaceOnUse" x1="899.82" y1="625.97" x2="573.31" y2="796.22"><stop stop-color="#001561"/><stop offset="1"/></linearGradient><linearGradient id="g704" gradientUnits="userSpaceOnUse" x1="590.00" y1="828.24" x2="734.88" y2="911.83"><stop stop-color="#002a61"/><stop offset="1"/></linearGradient><linearGradient id="g705" gradientUnits="userSpaceOnUse" x1="681.67" y1="1004.04" x2="573.80" y2="838.82"><stop stop-color="#002561"/><stop offset="1"/></linearGradient><linearGradient id="g706" gradientUnits="userSpaceOnUse" x1="899.82" y1="625.97" x2="972.19" y2="693.72"><stop stop-color="#001561"/><stop offset="1"/></linearGradient><linearGradient id="g707" gradientUnits="userSpaceOnUse" x1="681.67" y1="1004.04" x2="989.56" y2="905.03"><stop stop-color="#002561"/><stop offset="1"/></linearGradient><linearGradient id="g708" gradientUnits="userSpaceOnUse" x1="934.54" y1="733.94" x2="861.75" y2="691.94"><stop stop-color="#001261"/><stop offset="1"/></linearGradient><linearGradient id="g709" gradientUnits="userSpaceOnUse" x1="1160.07" y1="493.03" x2="1138.30" y2="487.89"><stop stop-color="#00209e"/><stop offset="1"/></linearGradient><linearGradient id="g710" gradientUnits="userSpaceOnUse" x1="1129.32" y1="525.88" x2="1140.39" y2="531.54"><stop stop-color="#000d96"/><stop offset="1"/></linearGradient><linearGradient id="g711" gradientUnits="userSpaceOnUse" x1="1117.30" y1="576.72" x2="1098.34" y2="558.97"><stop stop-color="#000096"/><stop offset="1"/></linearGradient><linearGradient id="g712" gradientUnits="userSpaceOnUse" x1="1160.07" y1="493.03" x2="1172.33" y2="502.07"><stop stop-color="#00209e"/><stop offset="1"/></linearGradient><linearGradient id="g713" gradientUnits="userSpaceOnUse" x1="1117.30" y1="576.72" x2="1130.25" y2="581.11"><stop stop-color="#000096"/><stop offset="1"/></linearGradient><linearGradient id="g714" gradientUnits="userSpaceOnUse" x1="1144.00" y1="540.50" x2="1137.51" y2="537.18"><stop stop-color="#00009e"/><stop offset="1"/></linearGradient><linearGradient id="g715" gradientUnits="userSpaceOnUse" x1="1129.32" y1="525.88" x2="1090.62" y2="521.60"><stop stop-color="#000d96"/><stop offset="1"/></linearGradient><linearGradient id="g716" gradientUnits="userSpaceOnUse" x1="1084.89" y1="573.33" x2="1101.95" y2="581.70"><stop stop-color="#00008a"/><stop offset="1"/></linearGradient><linearGradient id="g717" gradientUnits="userSpaceOnUse" x1="1078.73" y1="629.04" x2="1054.22" y2="606.10"><stop stop-color="#00008a"/><stop offset="1"/></linearGradient><linearGradient id="g718" gradientUnits="userSpaceOnUse" x1="1129.32" y1="525.88" x2="1145.81" y2="538.04"><stop stop-color="#000d96"/><stop offset="1"/></linearGradient><linearGradient id="g719" gradientUnits="userSpaceOnUse" x1="1078.73" y1="629.04" x2="1103.54" y2="634.91"><stop stop-color="#00008a"/><stop offset="1"/></linearGradient><linearGradient id="g720" gradientUnits="userSpaceOnUse" x1="1117.30" y1="576.72" x2="1106.89" y2="571.62"><stop stop-color="#000096"/><stop offset="1"/></linearGradient><linearGradient id="g721" gradientUnits="userSpaceOnUse" x1="1084.89" y1="573.33" x2="1021.41" y2="575.30"><stop stop-color="#00008a"/><stop offset="1"/></linearGradient><linearGradient id="g722" gradientUnits="userSpaceOnUse" x1="1023.39" y1="639.04" x2="1048.85" y2="650.87"><stop stop-color="#000a79"/><stop offset="1"/></linearGradient><linearGradient id="g723" gradientUnits="userSpaceOnUse" x1="1025.32" y1="701.48" x2="993.13" y2="671.35"><stop stop-color="#000979"/><stop offset="1"/></linearGradient><linearGradient id="g724" gradientUnits="userSpaceOnUse" x1="1084.89" y1="573.33" x2="1107.51" y2="590.00"><stop stop-color="#00008a"/><stop offset="1"/></linearGradient><linearGradient id="g725" gradientUnits="userSpaceOnUse" x1="1025.32" y1="701.48" x2="1070.16" y2="706.45"><stop stop-color="#000979"/><stop offset="1"/></linearGradient><linearGradient id="g726" gradientUnits="userSpaceOnUse" x1="1078.73" y1="629.04" x2="1062.50" y2="621.50"><stop stop-color="#00008a"/><stop offset="1"/></linearGradient><linearGradient id="g727" gradientUnits="userSpaceOnUse" x1="1023.39" y1="639.04" x2="920.29" y2="658.52"><stop stop-color="#000a79"/><stop offset="1"/></linearGradient><linearGradient id="g728" gradientUnits="userSpaceOnUse" x1="934.54" y1="733.94" x2="972.90" y2="751.20"><stop stop-color="#001261"/><stop offset="1"/></linearGradient><linearGradient id="g729" gradientUnits="userSpaceOnUse" x1="948.18" y1="806.12" x2="904.90" y2="765.60"><stop stop-color="#001061"/><stop offset="1"/></linearGradient><linearGradient id="g730" gradientUnits="userSpaceOnUse" x1="1023.39" y1="639.04" x2="1054.47" y2="661.95"><stop stop-color="#000a79"/><stop offset="1"/></linearGradient><linearGradient id="g731" gradientUnits="userSpaceOnUse" x1="948.18" y1="806.12" x2="1028.49" y2="803.63"><stop stop-color="#001061"/><stop offset="1"/></linearGradient><linearGradient id="g732" gradientUnits="userSpaceOnUse" x1="1025.32" y1="701.48" x2="1000.34" y2="690.24"><stop stop-color="#000979"/><stop offset="1"/></linearGradient><linearGradient id="g733" gradientUnits="userSpaceOnUse" x1="934.54" y1="733.94" x2="623.44" y2="880.16"><stop stop-color="#001261"/><stop offset="1"/></linearGradient><linearGradient id="g734" gradientUnits="userSpaceOnUse" x1="681.67" y1="1004.04" x2="759.97" y2="1047.62"><stop stop-color="#002561"/><stop offset="1"/></linearGradient><linearGradient id="g735" gradientUnits="userSpaceOnUse" x1="728.63" y1="1103.94" x2="653.76" y2="1033.86"><stop stop-color="#002261"/><stop offset="1"/></linearGradient><linearGradient id="g736" gradientUnits="userSpaceOnUse" x1="934.54" y1="733.94" x2="977.85" y2="765.87"><stop stop-color="#001261"/><stop offset="1"/></linearGradient><linearGradient id="g737" gradientUnits="userSpaceOnUse" x1="728.63" y1="1103.94" x2="994.95" y2="1053.61"><stop stop-color="#002261"/><stop offset="1"/></linearGradient><linearGradient id="g738" gradientUnits="userSpaceOnUse" x1="948.18" y1="806.12" x2="907.09" y2="783.26"><stop stop-color="#001061"/><stop offset="1"/></linearGradient><linearGradient id="g739" gradientUnits="userSpaceOnUse" x1="1144.00" y1="540.50" x2="1151.99" y2="565.75"><stop stop-color="#00009e"/><stop offset="1"/></linearGradient><linearGradient id="g740" gradientUnits="userSpaceOnUse" x1="1117.30" y1="576.72" x2="1152.48" y2="553.16"><stop stop-color="#000096"/><stop offset="1"/></linearGradient><linearGradient id="g741" gradientUnits="userSpaceOnUse" x1="1159.35" y1="563.42" x2="1138.46" y2="548.02"><stop stop-color="#170096"/><stop offset="1"/></linearGradient><linearGradient id="g742" gradientUnits="userSpaceOnUse" x1="1144.00" y1="540.50" x2="1165.46" y2="552.14"><stop stop-color="#00009e"/><stop offset="1"/></linearGradient><linearGradient id="g743" gradientUnits="userSpaceOnUse" x1="1159.35" y1="563.42" x2="1148.14" y2="538.63"><stop stop-color="#170096"/><stop offset="1"/></linearGradient><linearGradient id="g744" gradientUnits="userSpaceOnUse" x1="1180.80" y1="523.86" x2="1147.70" y2="546.03"><stop stop-color="#27009e"/><stop offset="1"/></linearGradient><linearGradient id="g745" gradientUnits="userSpaceOnUse" x1="1117.30" y1="576.72" x2="1124.89" y2="621.15"><stop stop-color="#000096"/><stop offset="1"/></linearGradient><linearGradient id="g746" gradientUnits="userSpaceOnUse" x1="1078.73" y1="629.04" x2="1127.40" y2="616.76"><stop stop-color="#00008a"/><stop offset="1"/></linearGradient><linearGradient id="g747" gradientUnits="userSpaceOnUse" x1="1128.36" y1="620.56" x2="1100.26" y2="599.84"><stop stop-color="#00008a"/><stop offset="1"/></linearGradient><linearGradient id="g748" gradientUnits="userSpaceOnUse" x1="1117.30" y1="576.72" x2="1144.22" y2="591.32"><stop stop-color="#000096"/><stop offset="1"/></linearGradient><linearGradient id="g749" gradientUnits="userSpaceOnUse" x1="1128.36" y1="620.56" x2="1114.75" y2="577.53"><stop stop-color="#00008a"/><stop offset="1"/></linearGradient><linearGradient id="g750" gradientUnits="userSpaceOnUse" x1="1159.35" y1="563.42" x2="1116.66" y2="574.19"><stop stop-color="#170096"/><stop offset="1"/></linearGradient><linearGradient id="g751" gradientUnits="userSpaceOnUse" x1="1078.73" y1="629.04" x2="1080.86" y2="699.81"><stop stop-color="#00008a"/><stop offset="1"/></linearGradient><linearGradient id="g752" gradientUnits="userSpaceOnUse" x1="1025.32" y1="701.48" x2="1085.08" y2="695.79"><stop stop-color="#000979"/><stop offset="1"/></linearGradient><linearGradient id="g753" gradientUnits="userSpaceOnUse" x1="1085.45" y1="699.67" x2="1047.36" y2="671.59"><stop stop-color="#000079"/><stop offset="1"/></linearGradient><linearGradient id="g754" gradientUnits="userSpaceOnUse" x1="1078.73" y1="629.04" x2="1113.52" y2="647.91"><stop stop-color="#00008a"/><stop offset="1"/></linearGradient><linearGradient id="g755" gradientUnits="userSpaceOnUse" x1="1085.45" y1="699.67" x2="1073.53" y2="629.93"><stop stop-color="#000079"/><stop offset="1"/></linearGradient><linearGradient id="g756" gradientUnits="userSpaceOnUse" x1="1128.36" y1="620.56" x2="1078.37" y2="625.31"><stop stop-color="#00008a"/><stop offset="1"/></linearGradient><linearGradient id="g757" gradientUnits="userSpaceOnUse" x1="1025.32" y1="701.48" x2="1013.74" y2="812.93"><stop stop-color="#000979"/><stop offset="1"/></linearGradient><linearGradient id="g758" gradientUnits="userSpaceOnUse" x1="948.18" y1="806.12" x2="1023.58" y2="807.36"><stop stop-color="#001061"/><stop offset="1"/></linearGradient><linearGradient id="g759" gradientUnits="userSpaceOnUse" x1="1023.47" y1="813.94" x2="970.96" y2="775.23"><stop stop-color="#000861"/><stop offset="1"/></linearGradient><linearGradient id="g760" gradientUnits="userSpaceOnUse" x1="1025.32" y1="701.48" x2="1071.02" y2="726.27"><stop stop-color="#000979"/><stop offset="1"/></linearGradient><linearGradient id="g761" gradientUnits="userSpaceOnUse" x1="1023.47" y1="813.94" x2="1020.08" y2="701.64"><stop stop-color="#000861"/><stop offset="1"/></linearGradient><linearGradient id="g762" gradientUnits="userSpaceOnUse" x1="1085.45" y1="699.67" x2="1025.37" y2="698.68"><stop stop-color="#000079"/><stop offset="1"/></linearGradient><linearGradient id="g763" gradientUnits="userSpaceOnUse" x1="948.18" y1="806.12" x2="848.91" y2="1139.73"><stop stop-color="#001061"/><stop offset="1"/></linearGradient><linearGradient id="g764" gradientUnits="userSpaceOnUse" x1="728.63" y1="1103.94" x2="846.87" y2="1139.84"><stop stop-color="#002261"/><stop offset="1"/></linearGradient><linearGradient id="g765" gradientUnits="userSpaceOnUse" x1="847.07" y1="1139.19" x2="753.50" y2="1070.20"><stop stop-color="#001a61"/><stop offset="1"/></linearGradient><linearGradient id="g766" gradientUnits="userSpaceOnUse" x1="948.18" y1="806.12" x2="1009.64" y2="839.45"><stop stop-color="#001061"/><stop offset="1"/></linearGradient><linearGradient id="g767" gradientUnits="userSpaceOnUse" x1="847.07" y1="1139.19" x2="882.38" y2="799.29"><stop stop-color="#001a61"/><stop offset="1"/></linearGradient><linearGradient id="g768" gradientUnits="userSpaceOnUse" x1="1023.47" y1="813.94" x2="952.36" y2="792.36"><stop stop-color="#000861"/><stop offset="1"/></linearGradient><linearGradient id="g769" gradientUnits="userSpaceOnUse" x1="1180.80" y1="523.86" x2="1189.57" y2="554.87"><stop stop-color="#27009e"/><stop offset="1"/></linearGradient><linearGradient id="g770" gradientUnits="userSpaceOnUse" x1="1159.35" y1="563.42" x2="1190.73" y2="534.71"><stop stop-color="#170096"/><stop offset="1"/></linearGradient><linearGradient id="g771" gradientUnits="userSpaceOnUse" x1="1205.14" y1="550.47" x2="1175.19" y2="534.22"><stop stop-color="#4a0096"/><stop offset="1"/></linearGradient><linearGradient id="g772" gradientUnits="userSpaceOnUse" x1="1180.80" y1="523.86" x2="1210.36" y2="532.38"><stop stop-color="#27009e"/><stop offset="1"/></linearGradient><linearGradient id="g773" gradientUnits="userSpaceOnUse" x1="1205.14" y1="550.47" x2="1191.03" y2="519.24"><stop stop-color="#4a0096"/><stop offset="1"/></linearGradient><linearGradient id="g774" gradientUnits="userSpaceOnUse" x1="1217.60" y1="507.22" x2="1189.29" y2="533.14"><stop stop-color="#59009e"/><stop offset="1"/></linearGradient><linearGradient id="g775" gradientUnits="userSpaceOnUse" x1="1159.35" y1="563.42" x2="1166.13" y2="615.65"><stop stop-color="#170096"/><stop offset="1"/></linearGradient><linearGradient id="g776" gradientUnits="userSpaceOnUse" x1="1128.36" y1="620.56" x2="1176.31" y2="593.63"><stop stop-color="#00008a"/><stop offset="1"/></linearGradient><linearGradient id="g777" gradientUnits="userSpaceOnUse" x1="1187.14" y1="612.92" x2="1144.92" y2="590.02"><stop stop-color="#33008a"/><stop offset="1"/></linearGradient><linearGradient id="g778" gradientUnits="userSpaceOnUse" x1="1159.35" y1="563.42" x2="1198.18" y2="574.61"><stop stop-color="#170096"/><stop offset="1"/></linearGradient><linearGradient id="g779" gradientUnits="userSpaceOnUse" x1="1187.14" y1="612.92" x2="1172.12" y2="559.81"><stop stop-color="#33008a"/><stop offset="1"/></linearGradient><linearGradient id="g780" gradientUnits="userSpaceOnUse" x1="1205.14" y1="550.47" x2="1164.79" y2="573.12"><stop stop-color="#4a0096"/><stop offset="1"/></linearGradient><linearGradient id="g781" gradientUnits="userSpaceOnUse" x1="1128.36" y1="620.56" x2="1128.63" y2="699.52"><stop stop-color="#00008a"/><stop offset="1"/></linearGradient><linearGradient id="g782" gradientUnits="userSpaceOnUse" x1="1085.45" y1="699.67" x2="1150.36" y2="671.79"><stop stop-color="#000079"/><stop offset="1"/></linearGradient><linearGradient id="g783" gradientUnits="userSpaceOnUse" x1="1162.22" y1="699.40" x2="1103.01" y2="667.29"><stop stop-color="#170079"/><stop offset="1"/></linearGradient><linearGradient id="g784" gradientUnits="userSpaceOnUse" x1="1128.36" y1="620.56" x2="1180.60" y2="635.61"><stop stop-color="#00008a"/><stop offset="1"/></linearGradient><linearGradient id="g785" gradientUnits="userSpaceOnUse" x1="1162.22" y1="699.40" x2="1151.59" y2="617.54"><stop stop-color="#170079"/><stop offset="1"/></linearGradient><linearGradient id="g786" gradientUnits="userSpaceOnUse" x1="1187.14" y1="612.92" x2="1134.74" y2="635.42"><stop stop-color="#33008a"/><stop offset="1"/></linearGradient><linearGradient id="g787" gradientUnits="userSpaceOnUse" x1="1085.45" y1="699.67" x2="1073.40" y2="818.99"><stop stop-color="#000079"/><stop offset="1"/></linearGradient><linearGradient id="g788" gradientUnits="userSpaceOnUse" x1="1023.47" y1="813.94" x2="1113.22" y2="784.59"><stop stop-color="#000861"/><stop offset="1"/></linearGradient><linearGradient id="g789" gradientUnits="userSpaceOnUse" x1="1126.22" y1="824.32" x2="1042.48" y2="778.90"><stop stop-color="#000061"/><stop offset="1"/></linearGradient><linearGradient id="g790" gradientUnits="userSpaceOnUse" x1="1085.45" y1="699.67" x2="1156.26" y2="720.08"><stop stop-color="#000079"/><stop offset="1"/></linearGradient><linearGradient id="g791" gradientUnits="userSpaceOnUse" x1="1126.22" y1="824.32" x2="1125.78" y2="699.53"><stop stop-color="#000061"/><stop offset="1"/></linearGradient><linearGradient id="g792" gradientUnits="userSpaceOnUse" x1="1162.22" y1="699.40" x2="1092.79" y2="722.11"><stop stop-color="#170079"/><stop offset="1"/></linearGradient><linearGradient id="g793" gradientUnits="userSpaceOnUse" x1="1023.47" y1="813.94" x2="943.51" y2="1161.38"><stop stop-color="#000861"/><stop offset="1"/></linearGradient><linearGradient id="g794" gradientUnits="userSpaceOnUse" x1="847.07" y1="1139.19" x2="1023.72" y2="1139.05"><stop stop-color="#001a61"/><stop offset="1"/></linearGradient><linearGradient id="g795" gradientUnits="userSpaceOnUse" x1="1023.75" y1="1179.85" x2="870.19" y2="1096.56"><stop stop-color="#000861"/><stop offset="1"/></linearGradient><linearGradient id="g796" gradientUnits="userSpaceOnUse" x1="1023.47" y1="813.94" x2="1121.10" y2="842.08"><stop stop-color="#000861"/><stop offset="1"/></linearGradient><linearGradient id="g797" gradientUnits="userSpaceOnUse" x1="1023.75" y1="1179.85" x2="1060.32" y2="817.66"><stop stop-color="#000861"/><stop offset="1"/></linearGradient><linearGradient id="g798" gradientUnits="userSpaceOnUse" x1="1126.22" y1="824.32" x2="1023.48" y2="824.40"><stop stop-color="#000061"/><stop offset="1"/></linearGradient><linearGradient id="g799" gradientUnits="userSpaceOnUse" x1="1217.60" y1="507.22" x2="1228.16" y2="543.83"><stop stop-color="#59009e"/><stop offset="1"/></linearGradient><linearGradient id="g800" gradientUnits="userSpaceOnUse" x1="1205.14" y1="550.47" x2="1229.88" y2="516.04"><stop stop-color="#4a0096"/><stop offset="1"/></linearGradient><linearGradient id="g801" gradientUnits="userSpaceOnUse" x1="1256.98" y1="535.51" x2="1213.10" y2="522.87"><stop stop-color="#960096"/><stop offset="1"/></linearGradient><linearGradient id="g802" gradientUnits="userSpaceOnUse" x1="1217.60" y1="507.22" x2="1255.24" y2="505.07"><stop stop-color="#59009e"/><stop offset="1"/></linearGradient><linearGradient id="g803" gradientUnits="userSpaceOnUse" x1="1256.98" y1="535.51" x2="1239.68" y2="497.25"><stop stop-color="#960096"/><stop offset="1"/></linearGradient><linearGradient id="g804" gradientUnits="userSpaceOnUse" x1="1254.41" y1="490.59" x2="1233.99" y2="519.00"><stop stop-color="#9e009e"/><stop offset="1"/></linearGradient><linearGradient id="g805" gradientUnits="userSpaceOnUse" x1="1205.14" y1="550.47" x2="1214.97" y2="608.19"><stop stop-color="#4a0096"/><stop offset="1"/></linearGradient><linearGradient id="g806" gradientUnits="userSpaceOnUse" x1="1187.14" y1="612.92" x2="1226.24" y2="569.43"><stop stop-color="#33008a"/><stop offset="1"/></linearGradient><linearGradient id="g807" gradientUnits="userSpaceOnUse" x1="1260.69" y1="600.41" x2="1196.11" y2="581.80"><stop stop-color="#8a0087"/><stop offset="1"/></linearGradient><linearGradient id="g808" gradientUnits="userSpaceOnUse" x1="1205.14" y1="550.47" x2="1257.66" y2="547.46"><stop stop-color="#4a0096"/><stop offset="1"/></linearGradient><linearGradient id="g809" gradientUnits="userSpaceOnUse" x1="1260.69" y1="600.41" x2="1243.13" y2="539.51"><stop stop-color="#8a0087"/><stop offset="1"/></linearGradient><linearGradient id="g810" gradientUnits="userSpaceOnUse" x1="1256.98" y1="535.51" x2="1226.38" y2="569.55"><stop stop-color="#960096"/><stop offset="1"/></linearGradient><linearGradient id="g811" gradientUnits="userSpaceOnUse" x1="1187.14" y1="612.92" x2="1194.52" y2="696.55"><stop stop-color="#33008a"/><stop offset="1"/></linearGradient><linearGradient id="g812" gradientUnits="userSpaceOnUse" x1="1162.22" y1="699.40" x2="1217.70" y2="642.95"><stop stop-color="#170079"/><stop offset="1"/></linearGradient><linearGradient id="g813" gradientUnits="userSpaceOnUse" x1="1265.84" y1="690.26" x2="1172.60" y2="663.39"><stop stop-color="#790071"/><stop offset="1"/></linearGradient><linearGradient id="g814" gradientUnits="userSpaceOnUse" x1="1187.14" y1="612.92" x2="1261.17" y2="608.69"><stop stop-color="#33008a"/><stop offset="1"/></linearGradient><linearGradient id="g815" gradientUnits="userSpaceOnUse" x1="1265.84" y1="690.26" x2="1250.83" y2="602.09"><stop stop-color="#790071"/><stop offset="1"/></linearGradient><linearGradient id="g816" gradientUnits="userSpaceOnUse" x1="1260.69" y1="600.41" x2="1218.30" y2="643.54"><stop stop-color="#8a0087"/><stop offset="1"/></linearGradient><linearGradient id="g817" gradientUnits="userSpaceOnUse" x1="1162.22" y1="699.40" x2="1165.81" y2="823.17"><stop stop-color="#170079"/><stop offset="1"/></linearGradient><linearGradient id="g818" gradientUnits="userSpaceOnUse" x1="1126.22" y1="824.32" x2="1207.95" y2="749.09"><stop stop-color="#000061"/><stop offset="1"/></linearGradient><linearGradient id="g819" gradientUnits="userSpaceOnUse" x1="1273.26" y1="820.05" x2="1138.63" y2="781.25"><stop stop-color="#610054"/><stop offset="1"/></linearGradient><linearGradient id="g820" gradientUnits="userSpaceOnUse" x1="1162.22" y1="699.40" x2="1266.02" y2="693.46"><stop stop-color="#170079"/><stop offset="1"/></linearGradient><linearGradient id="g821" gradientUnits="userSpaceOnUse" x1="1273.26" y1="820.05" x2="1261.84" y2="690.61"><stop stop-color="#610054"/><stop offset="1"/></linearGradient><linearGradient id="g822" gradientUnits="userSpaceOnUse" x1="1265.84" y1="690.26" x2="1205.19" y2="746.08"><stop stop-color="#790071"/><stop offset="1"/></linearGradient><linearGradient id="g823" gradientUnits="userSpaceOnUse" x1="1126.22" y1="824.32" x2="1113.50" y2="1183.03"><stop stop-color="#000061"/><stop offset="1"/></linearGradient><linearGradient id="g824" gradientUnits="userSpaceOnUse" x1="1023.75" y1="1179.85" x2="1243.38" y2="1078.68"><stop stop-color="#000861"/><stop offset="1"/></linearGradient><linearGradient id="g825" gradientUnits="userSpaceOnUse" x1="1294.41" y1="1189.44" x2="1041.96" y2="1116.69"><stop stop-color="#610046"/><stop offset="1"/></linearGradient><linearGradient id="g826" gradientUnits="userSpaceOnUse" x1="1126.22" y1="824.32" x2="1273.03" y2="815.92"><stop stop-color="#000061"/><stop offset="1"/></linearGradient><linearGradient id="g827" gradientUnits="userSpaceOnUse" x1="1294.41" y1="1189.44" x2="1283.67" y2="819.75"><stop stop-color="#610046"/><stop offset="1"/></linearGradient><linearGradient id="g828" gradientUnits="userSpaceOnUse" x1="1273.26" y1="820.05" x2="1150.33" y2="876.67"><stop stop-color="#610054"/><stop offset="1"/></linearGradient><linearGradient id="g829" gradientUnits="userSpaceOnUse" x1="1254.41" y1="490.59" x2="1272.13" y2="528.41"><stop stop-color="#9e009e"/><stop offset="1"/></linearGradient><linearGradient id="g830" gradientUnits="userSpaceOnUse" x1="1256.98" y1="535.51" x2="1255.99" y2="490.55"><stop stop-color="#960096"/><stop offset="1"/></linearGradient><linearGradient id="g831" gradientUnits="userSpaceOnUse" x1="1357.71" y1="488.31" x2="1254.61" y2="494.21"><stop stop-color="#960032"/><stop offset="1"/></linearGradient><linearGradient id="g832" gradientUnits="userSpaceOnUse" x1="1254.41" y1="490.59" x2="1297.80" y2="438.45"><stop stop-color="#9e009e"/><stop offset="1"/></linearGradient><linearGradient id="g833" gradientUnits="userSpaceOnUse" x1="1357.71" y1="488.31" x2="1341.03" y2="451.43"><stop stop-color="#960032"/><stop offset="1"/></linearGradient><linearGradient id="g834" gradientUnits="userSpaceOnUse" x1="1323.12" y1="459.52" x2="1323.77" y2="489.06"><stop stop-color="#9e0041"/><stop offset="1"/></linearGradient><linearGradient id="g835" gradientUnits="userSpaceOnUse" x1="1256.98" y1="535.51" x2="1282.98" y2="589.71"><stop stop-color="#960096"/><stop offset="1"/></linearGradient><linearGradient id="g836" gradientUnits="userSpaceOnUse" x1="1260.69" y1="600.41" x2="1258.27" y2="535.47"><stop stop-color="#8a0087"/><stop offset="1"/></linearGradient><linearGradient id="g837" gradientUnits="userSpaceOnUse" x1="1407.67" y1="529.89" x2="1257.15" y2="538.50"><stop stop-color="#8a0024"/><stop offset="1"/></linearGradient><linearGradient id="g838" gradientUnits="userSpaceOnUse" x1="1256.98" y1="535.51" x2="1321.40" y2="458.10"><stop stop-color="#960096"/><stop offset="1"/></linearGradient><linearGradient id="g839" gradientUnits="userSpaceOnUse" x1="1407.67" y1="529.89" x2="1382.70" y2="476.60"><stop stop-color="#8a0024"/><stop offset="1"/></linearGradient><linearGradient id="g840" gradientUnits="userSpaceOnUse" x1="1357.71" y1="488.31" x2="1359.33" y2="531.69"><stop stop-color="#960032"/><stop offset="1"/></linearGradient><linearGradient id="g841" gradientUnits="userSpaceOnUse" x1="1260.69" y1="600.41" x2="1297.06" y2="675.05"><stop stop-color="#8a0087"/><stop offset="1"/></linearGradient><linearGradient id="g842" gradientUnits="userSpaceOnUse" x1="1265.84" y1="690.26" x2="1260.45" y2="600.42"><stop stop-color="#790071"/><stop offset="1"/></linearGradient><linearGradient id="g843" gradientUnits="userSpaceOnUse" x1="1476.85" y1="587.46" x2="1260.66" y2="599.83"><stop stop-color="#790018"/><stop offset="1"/></linearGradient><linearGradient id="g844" gradientUnits="userSpaceOnUse" x1="1260.69" y1="600.41" x2="1355.51" y2="486.48"><stop stop-color="#8a0087"/><stop offset="1"/></linearGradient><linearGradient id="g845" gradientUnits="userSpaceOnUse" x1="1476.85" y1="587.46" x2="1441.45" y2="513.68"><stop stop-color="#790018"/><stop offset="1"/></linearGradient><linearGradient id="g846" gradientUnits="userSpaceOnUse" x1="1407.67" y1="529.89" x2="1411.35" y2="591.38"><stop stop-color="#8a0024"/><stop offset="1"/></linearGradient><linearGradient id="g847" gradientUnits="userSpaceOnUse" x1="1265.84" y1="690.26" x2="1318.72" y2="797.67"><stop stop-color="#790071"/><stop offset="1"/></linearGradient><linearGradient id="g848" gradientUnits="userSpaceOnUse" x1="1273.26" y1="820.05" x2="1265.07" y2="690.31"><stop stop-color="#610054"/><stop offset="1"/></linearGradient><linearGradient id="g849" gradientUnits="userSpaceOnUse" x1="1576.77" y1="670.62" x2="1265.73" y2="688.42"><stop stop-color="#610009"/><stop offset="1"/></linearGradient><linearGradient id="g850" gradientUnits="userSpaceOnUse" x1="1265.84" y1="690.26" x2="1402.72" y2="525.77"><stop stop-color="#790071"/><stop offset="1"/></linearGradient><linearGradient id="g851" gradientUnits="userSpaceOnUse" x1="1576.77" y1="670.62" x2="1524.86" y2="564.07"><stop stop-color="#610009"/><stop offset="1"/></linearGradient><linearGradient id="g852" gradientUnits="userSpaceOnUse" x1="1476.85" y1="587.46" x2="1482.48" y2="676.57"><stop stop-color="#790018"/><stop offset="1"/></linearGradient><linearGradient id="g853" gradientUnits="userSpaceOnUse" x1="1273.26" y1="820.05" x2="1424.83" y2="1124.51"><stop stop-color="#610054"/><stop offset="1"/></linearGradient><linearGradient id="g854" gradientUnits="userSpaceOnUse" x1="1294.41" y1="1189.44" x2="1347.59" y2="831.08"><stop stop-color="#610046"/><stop offset="1"/></linearGradient><linearGradient id="g855" gradientUnits="userSpaceOnUse" x1="1861.17" y1="907.30" x2="1280.16" y2="940.55"><stop stop-color="#610000"/><stop offset="1"/></linearGradient><linearGradient id="g856" gradientUnits="userSpaceOnUse" x1="1273.26" y1="820.05" x2="1470.93" y2="582.53"><stop stop-color="#610054"/><stop offset="1"/></linearGradient><linearGradient id="g857" gradientUnits="userSpaceOnUse" x1="1861.17" y1="907.30" x2="1711.89" y2="604.09"><stop stop-color="#610000"/><stop offset="1"/></linearGradient><linearGradient id="g858" gradientUnits="userSpaceOnUse" x1="1576.77" y1="670.62" x2="1548.53" y2="860.90"><stop stop-color="#610009"/><stop offset="1"/></linearGradient><linearGradient id="g859" gradientUnits="userSpaceOnUse" x1="1323.12" y1="459.52" x2="1346.41" y2="495.60"><stop stop-color="#9e0041"/><stop offset="1"/></linearGradient><linearGradient id="g860" gradientUnits="userSpaceOnUse" x1="1357.71" y1="488.31" x2="1351.14" y2="454.14"><stop stop-color="#960032"/><stop offset="1"/></linearGradient><linearGradient id="g861" gradientUnits="userSpaceOnUse" x1="1435.83" y1="437.88" x2="1379.07" y2="506.09"><stop stop-color="#96000e"/><stop offset="1"/></linearGradient><linearGradient id="g862" gradientUnits="userSpaceOnUse" x1="1323.12" y1="459.52" x2="1332.48" y2="415.77"><stop stop-color="#9e0041"/><stop offset="1"/></linearGradient><linearGradient id="g863" gradientUnits="userSpaceOnUse" x1="1435.83" y1="437.88" x2="1424.83" y2="413.54"><stop stop-color="#96000e"/><stop offset="1"/></linearGradient><linearGradient id="g864" gradientUnits="userSpaceOnUse" x1="1391.83" y1="428.46" x2="1395.14" y2="445.69"><stop stop-color="#9e0017"/><stop offset="1"/></linearGradient><linearGradient id="g865" gradientUnits="userSpaceOnUse" x1="1357.71" y1="488.31" x2="1399.34" y2="537.01"><stop stop-color="#960032"/><stop offset="1"/></linearGradient><linearGradient id="g866" gradientUnits="userSpaceOnUse" x1="1407.67" y1="529.89" x2="1394.38" y2="478.78"><stop stop-color="#8a0024"/><stop offset="1"/></linearGradient><linearGradient id="g867" gradientUnits="userSpaceOnUse" x1="1499.40" y1="451.47" x2="1423.31" y2="542.90"><stop stop-color="#8a0005"/><stop offset="1"/></linearGradient><linearGradient id="g868" gradientUnits="userSpaceOnUse" x1="1357.71" y1="488.31" x2="1371.44" y2="424.10"><stop stop-color="#960032"/><stop offset="1"/></linearGradient><linearGradient id="g869" gradientUnits="userSpaceOnUse" x1="1499.40" y1="451.47" x2="1474.50" y2="412.91"><stop stop-color="#8a0005"/><stop offset="1"/></linearGradient><linearGradient id="g870" gradientUnits="userSpaceOnUse" x1="1435.83" y1="437.88" x2="1443.17" y2="466.09"><stop stop-color="#96000e"/><stop offset="1"/></linearGradient><linearGradient id="g871" gradientUnits="userSpaceOnUse" x1="1407.67" y1="529.89" x2="1473.00" y2="591.54"><stop stop-color="#8a0024"/><stop offset="1"/></linearGradient><linearGradient id="g872" gradientUnits="userSpaceOnUse" x1="1476.85" y1="587.46" x2="1452.80" y2="514.93"><stop stop-color="#790018"/><stop offset="1"/></linearGradient><linearGradient id="g873" gradientUnits="userSpaceOnUse" x1="1587.40" y1="470.30" x2="1484.56" y2="593.88"><stop stop-color="#790000"/><stop offset="1"/></linearGradient><linearGradient id="g874" gradientUnits="userSpaceOnUse" x1="1407.67" y1="529.89" x2="1427.72" y2="436.14"><stop stop-color="#8a0024"/><stop offset="1"/></linearGradient><linearGradient id="g875" gradientUnits="userSpaceOnUse" x1="1587.40" y1="470.30" x2="1540.94" y2="415.95"><stop stop-color="#790000"/><stop offset="1"/></linearGradient><linearGradient id="g876" gradientUnits="userSpaceOnUse" x1="1499.40" y1="451.47" x2="1513.73" y2="494.72"><stop stop-color="#8a0005"/><stop offset="1"/></linearGradient><linearGradient id="g877" gradientUnits="userSpaceOnUse" x1="1476.85" y1="587.46" x2="1578.55" y2="668.38"><stop stop-color="#790018"/><stop offset="1"/></linearGradient><linearGradient id="g878" gradientUnits="userSpaceOnUse" x1="1576.77" y1="670.62" x2="1536.72" y2="564.80"><stop stop-color="#610009"/><stop offset="1"/></linearGradient><linearGradient id="g879" gradientUnits="userSpaceOnUse" x1="1714.53" y1="497.50" x2="1573.04" y2="667.51"><stop stop-color="#610000"/><stop offset="1"/></linearGradient><linearGradient id="g880" gradientUnits="userSpaceOnUse" x1="1476.85" y1="587.46" x2="1505.65" y2="452.81"><stop stop-color="#790018"/><stop offset="1"/></linearGradient><linearGradient id="g881" gradientUnits="userSpaceOnUse" x1="1714.53" y1="497.50" x2="1633.71" y2="421.23"><stop stop-color="#610000"/><stop offset="1"/></linearGradient><linearGradient id="g882" gradientUnits="userSpaceOnUse" x1="1587.40" y1="470.30" x2="1612.34" y2="536.18"><stop stop-color="#790000"/><stop offset="1"/></linearGradient><linearGradient id="g883" gradientUnits="userSpaceOnUse" x1="1576.77" y1="670.62" x2="1885.16" y2="870.24"><stop stop-color="#610009"/><stop offset="1"/></linearGradient><linearGradient id="g884" gradientUnits="userSpaceOnUse" x1="1861.17" y1="907.30" x2="1807.36" y2="626.44"><stop stop-color="#610000"/><stop offset="1"/></linearGradient><linearGradient id="g885" gradientUnits="userSpaceOnUse" x1="2076.34" y1="574.90" x2="1824.86" y2="877.08"><stop stop-color="#610000"/><stop offset="1"/></linearGradient><linearGradient id="g886" gradientUnits="userSpaceOnUse" x1="1576.77" y1="670.62" x2="1618.21" y2="476.89"><stop stop-color="#610009"/><stop offset="1"/></linearGradient><linearGradient id="g887" gradientUnits="userSpaceOnUse" x1="2076.34" y1="574.90" x2="1817.09" y2="368.60"><stop stop-color="#610000"/><stop offset="1"/></linearGradient><linearGradient id="g888" gradientUnits="userSpaceOnUse" x1="1714.53" y1="497.50" x2="1741.65" y2="639.03"><stop stop-color="#610000"/><stop offset="1"/></linearGradient><linearGradient id="g889" gradientUnits="userSpaceOnUse" x1="1391.83" y1="428.46" x2="1407.06" y2="454.63"><stop stop-color="#9e0017"/><stop offset="1"/></linearGradient><linearGradient id="g890" gradientUnits="userSpaceOnUse" x1="1435.83" y1="437.88" x2="1430.36" y2="417.90"><stop stop-color="#96000e"/><stop offset="1"/></linearGradient><linearGradient id="g891" gradientUnits="userSpaceOnUse" x1="1505.54" y1="397.29" x2="1494.19" y2="450.36"><stop stop-color="#960000"/><stop offset="1"/></linearGradient><linearGradient id="g892" gradientUnits="userSpaceOnUse" x1="1391.83" y1="428.46" x2="1391.75" y2="397.57"><stop stop-color="#9e0017"/><stop offset="1"/></linearGradient><linearGradient id="g893" gradientUnits="userSpaceOnUse" x1="1505.54" y1="397.29" x2="1497.95" y2="380.49"><stop stop-color="#960000"/><stop offset="1"/></linearGradient><linearGradient id="g894" gradientUnits="userSpaceOnUse" x1="1460.54" y1="397.40" x2="1463.66" y2="408.77"><stop stop-color="#9e0000"/><stop offset="1"/></linearGradient><linearGradient id="g895" gradientUnits="userSpaceOnUse" x1="1435.83" y1="437.88" x2="1465.82" y2="477.13"><stop stop-color="#96000e"/><stop offset="1"/></linearGradient><linearGradient id="g896" gradientUnits="userSpaceOnUse" x1="1499.40" y1="451.47" x2="1490.30" y2="421.40"><stop stop-color="#8a0005"/><stop offset="1"/></linearGradient><linearGradient id="g897" gradientUnits="userSpaceOnUse" x1="1570.54" y1="397.12" x2="1556.31" y2="463.65"><stop stop-color="#8a0000"/><stop offset="1"/></linearGradient><linearGradient id="g898" gradientUnits="userSpaceOnUse" x1="1435.83" y1="437.88" x2="1435.73" y2="397.46"><stop stop-color="#96000e"/><stop offset="1"/></linearGradient><linearGradient id="g899" gradientUnits="userSpaceOnUse" x1="1570.54" y1="397.12" x2="1554.15" y2="368.98"><stop stop-color="#8a0000"/><stop offset="1"/></linearGradient><linearGradient id="g900" gradientUnits="userSpaceOnUse" x1="1505.54" y1="397.29" x2="1510.94" y2="415.15"><stop stop-color="#960000"/><stop offset="1"/></linearGradient><linearGradient id="g901" gradientUnits="userSpaceOnUse" x1="1499.40" y1="451.47" x2="1552.97" y2="504.86"><stop stop-color="#8a0005"/><stop offset="1"/></linearGradient><linearGradient id="g902" gradientUnits="userSpaceOnUse" x1="1587.40" y1="470.30" x2="1572.63" y2="426.67"><stop stop-color="#790000"/><stop offset="1"/></linearGradient><linearGradient id="g903" gradientUnits="userSpaceOnUse" x1="1660.54" y1="396.90" x2="1642.32" y2="482.05"><stop stop-color="#790000"/><stop offset="1"/></linearGradient><linearGradient id="g904" gradientUnits="userSpaceOnUse" x1="1499.40" y1="451.47" x2="1499.26" y2="397.30"><stop stop-color="#8a0005"/><stop offset="1"/></linearGradient><linearGradient id="g905" gradientUnits="userSpaceOnUse" x1="1660.54" y1="396.90" x2="1627.48" y2="353.62"><stop stop-color="#790000"/><stop offset="1"/></linearGradient><linearGradient id="g906" gradientUnits="userSpaceOnUse" x1="1570.54" y1="397.12" x2="1579.73" y2="424.27"><stop stop-color="#8a0000"/><stop offset="1"/></linearGradient><linearGradient id="g907" gradientUnits="userSpaceOnUse" x1="1587.40" y1="470.30" x2="1681.59" y2="541.23"><stop stop-color="#790000"/><stop offset="1"/></linearGradient><linearGradient id="g908" gradientUnits="userSpaceOnUse" x1="1714.53" y1="497.50" x2="1691.01" y2="432.70"><stop stop-color="#610000"/><stop offset="1"/></linearGradient><linearGradient id="g909" gradientUnits="userSpaceOnUse" x1="1790.54" y1="396.57" x2="1766.57" y2="508.63"><stop stop-color="#610000"/><stop offset="1"/></linearGradient><linearGradient id="g910" gradientUnits="userSpaceOnUse" x1="1587.40" y1="470.30" x2="1587.22" y2="397.08"><stop stop-color="#790000"/><stop offset="1"/></linearGradient><linearGradient id="g911" gradientUnits="userSpaceOnUse" x1="1790.54" y1="396.57" x2="1725.47" y2="331.74"><stop stop-color="#610000"/><stop offset="1"/></linearGradient><linearGradient id="g912" gradientUnits="userSpaceOnUse" x1="1660.54" y1="396.90" x2="1675.57" y2="438.30"><stop stop-color="#790000"/><stop offset="1"/></linearGradient><linearGradient id="g913" gradientUnits="userSpaceOnUse" x1="1714.53" y1="497.50" x2="2040.73" y2="650.72"><stop stop-color="#610000"/><stop offset="1"/></linearGradient><linearGradient id="g914" gradientUnits="userSpaceOnUse" x1="2076.34" y1="574.90" x2="2041.61" y2="422.80"><stop stop-color="#610000"/><stop offset="1"/></linearGradient><linearGradient id="g915" gradientUnits="userSpaceOnUse" x1="2160.54" y1="395.65" x2="2120.18" y2="584.28"><stop stop-color="#610000"/><stop offset="1"/></linearGradient><linearGradient id="g916" gradientUnits="userSpaceOnUse" x1="1714.53" y1="497.50" x2="1714.28" y2="396.76"><stop stop-color="#610000"/><stop offset="1"/></linearGradient><linearGradient id="g917" gradientUnits="userSpaceOnUse" x1="2160.54" y1="395.65" x2="1924.90" y2="218.17"><stop stop-color="#610000"/><stop offset="1"/></linearGradient><linearGradient id="g918" gradientUnits="userSpaceOnUse" x1="1790.54" y1="396.57" x2="1808.68" y2="476.00"><stop stop-color="#610000"/><stop offset="1"/></linearGradient><linearGradient id="gInsA" x1="0" y1="0" x2="1" y2="0"><stop offset="0" stop-color="#b8ff00"/><stop offset="0.5" stop-color="#ffff00"/><stop offset="1" stop-color="#ffb000"/></linearGradient><linearGradient id="gInsA2" x1="0" y1="0" x2="1" y2="1"><stop offset="0" stop-color="#a8f000"/><stop offset="0.55" stop-color="#ffff10"/><stop offset="1" stop-color="#ffb000"/></linearGradient><linearGradient id="gInsB" x1="0" y1="0" x2="1" y2="1"><stop offset="0" stop-color="#5a9000"/><stop offset="0.5" stop-color="#909000"/><stop offset="1" stop-color="#a06800"/></linearGradient><linearGradient id="gTH" x1="0" y1="0" x2="0" y2="1"><stop offset="0" stop-color="#333333"/><stop offset="0.5" stop-color="#333333"/><stop offset="0.5" stop-color="#181818"/><stop offset="1" stop-color="#181818"/></linearGradient><linearGradient id="gTile" x1="0" y1="0" x2="0" y2="1"><stop offset="0" stop-color="#8c8c8c"/><stop offset="0.35" stop-color="#787878"/><stop offset="1" stop-color="#555555"/></linearGradient><linearGradient id="gTB" x1="0" y1="0" x2="0" y2="1"><stop offset="0" stop-color="#4a4a4a"/><stop offset="1" stop-color="#282828"/></linearGradient><linearGradient id="gCtl" x1="0" y1="0" x2="0" y2="1"><stop offset="0" stop-color="#a8a8a8"/><stop offset="0.5" stop-color="#8e8e8e"/><stop offset="1" stop-color="#6a6a6a"/></linearGradient><linearGradient id="gCtl2" x1="0" y1="0" x2="0" y2="1"><stop offset="0" stop-color="#b0b0b0"/><stop offset="0.5" stop-color="#949494"/><stop offset="1" stop-color="#707070"/></linearGradient><linearGradient id="gCirc" x1="0" y1="0" x2="0" y2="1"><stop offset="0" stop-color="#6e6e6e"/><stop offset="1" stop-color="#a4a4a4"/></linearGradient><linearGradient id="gCircD" x1="0" y1="0" x2="0" y2="1"><stop offset="0" stop-color="#2a2a2a"/><stop offset="1" stop-color="#404040"/></linearGradient></defs>
<rect x="0" y="0" width="1600" height="870" fill="#232323" />
<rect x="200" y="87" width="1400" height="783" fill="#333333" />
<rect x="0" y="0" width="1600" height="21" fill="url(#gTitle)" />
<rect x="20" y="1" width="335" height="18" rx="8" fill="#f4c4e4" filter="url(#fBlur)"/>
<line x1="0" y1="20.5" x2="1600" y2="20.5" stroke="#f6c6e6" stroke-width="1" />
<rect x="0" y="3" width="16" height="16" fill="#0a2a0a" />
<text x="8.5" y="17" font-size="16" fill="#000000" text-anchor="middle" font-weight="bold" stroke="#2cff2c" stroke-width="2" paint-order="stroke">5</text>
<text x="21" y="15.5" font-size="13" fill="#111111" text-anchor="start" font-weight="normal" textLength="329" lengthAdjust="spacingAndGlyphs" >CalMAN 5 CalMAN Ultimate for Business 340 Days Remaining</text>
<path d="M1494.5,0 V13 Q1494.5,17.5 1499,17.5 H1549 V0 Z" fill="url(#gWB)" stroke="#6a4a60" stroke-width="1"/>
<line x1="1522.5" y1="0" x2="1522.5" y2="17" stroke="#8a6a80" stroke-width="1" />
<path d="M1549,0 V17.5 H1592 Q1596.5,17.5 1596.5,13 V0 Z" fill="url(#gWC)" stroke="#6a3a3a" stroke-width="1"/>
<rect x="1503.5" y="8.5" width="11" height="4" fill="#f4f4f4" stroke="#505050" stroke-width="1" />
<path d="M1530.5,4.5 V3 Q1530.5,2.5 1531,2.5 H1540 Q1540.5,2.5 1540.5,3 V11 Q1540.5,11.5 1540,11.5 H1538.5" fill="none" stroke="#505050" stroke-width="1.6"/>
<path d="M1531,3.5 H1539.5 V10.5" fill="none" stroke="#f4f4f4" stroke-width="0.8"/>
<rect x="1529.5" y="4.5" width="8" height="8.5" fill="#f4f4f4" stroke="#505050" stroke-width="1.2" />
<rect x="1532" y="7" width="3" height="3.5" fill="#d9a0c8" stroke="#505050" stroke-width="1" />
<path d="M1567,3.5 L1571,8 L1575,3.5 L1578,5.5 L1574,9.5 L1578,13 L1575,15 L1571,11 L1567,15 L1564,13 L1568,9.5 L1564,5.5 Z" fill="#f4f4f4" stroke="#505050" stroke-width="1"/>
<path d="M1,21 H182 V47 Q182,51 178,51 H5 Q1,51 1,47 Z" fill="url(#gLogo)" stroke="#d8f0d8" stroke-width="1"/>
<text x="6.3" y="45.3" font-size="30" fill="#3a7a3a" text-anchor="start" font-weight="bold" textLength="116" lengthAdjust="spacingAndGlyphs" stroke="#3a7a3a" stroke-width="1.1">CalMAN</text>
<text x="128.8" y="45.3" font-size="30" fill="#3a7a3a" text-anchor="start" font-weight="bold" textLength="18" lengthAdjust="spacingAndGlyphs" stroke="#3a7a3a" stroke-width="1.1">5</text>
<text x="5.5" y="44.5" font-size="30" fill="url(#gSilver)" text-anchor="start" font-weight="bold" textLength="116" lengthAdjust="spacingAndGlyphs" stroke="url(#gSilver)" stroke-width="0.9">CalMAN</text>
<text x="128" y="44.5" font-size="30" fill="url(#gSilver)" text-anchor="start" font-weight="bold" textLength="18" lengthAdjust="spacingAndGlyphs" stroke="url(#gSilver)" stroke-width="0.9">5</text>
<circle cx="92.3" cy="28.6" r="1.7" fill="#1e5a1e"/>
<path d="M90.5,30.8 L86.8,34.6 L83,36.2 M89.6,31.8 L93.8,33.2 M87.8,33.8 L90.2,37.6 L88.4,39 M89.6,31.8 L86,31.2" fill="none" stroke="#1e5a1e" stroke-width="1.5" stroke-linecap="round"/>
<circle cx="166" cy="36.5" r="10" fill="url(#gLD)"/>
<path d="M161.5,34 H170.5 L166,38.5 Z" fill="#ffffff"/>
<path d="M0,57 H193 Q199,57 199,63 V870 H0 Z" fill="url(#gSide)"/>
<circle cx="19" cy="71" r="10" fill="url(#gBtnC)"/>
<circle cx="18.5" cy="70.5" r="4.3" fill="url(#gBall)"/>
<circle cx="181" cy="71" r="10" fill="url(#gBtnC)"/>
<path d="M183.5,65.5 V75 L177.5,70.3 Z" fill="#f0f0f0"/>
<text x="9" y="100" font-size="13.5" fill="#eeeeee" text-anchor="start" font-weight="normal" textLength="81" lengthAdjust="spacingAndGlyphs" >Quick Analysis</text>
<rect x="10" y="104" width="181" height="190" fill="#222222" stroke="#1a1a1a" stroke-width="1" />
<path d="M18,123 L22,119 V123 Z" fill="#666"/>
<text x="29" y="123" font-size="11" fill="#f0f0f0" text-anchor="start" font-weight="bold" textLength="72" lengthAdjust="spacingAndGlyphs" >Quick Analysis</text>
<text x="42" y="139" font-size="11" fill="#eeeeee" text-anchor="start" font-weight="normal" textLength="60" lengthAdjust="spacingAndGlyphs" >Introduction</text>
<text x="42" y="153" font-size="11" fill="#eeeeee" text-anchor="start" font-weight="normal" textLength="39" lengthAdjust="spacingAndGlyphs" >Options</text>
<text x="42" y="168" font-size="11" fill="#eeeeee" text-anchor="start" font-weight="normal" textLength="46" lengthAdjust="spacingAndGlyphs" >Grayscale</text>
<text x="42" y="182" font-size="11" fill="#eeeeee" text-anchor="start" font-weight="normal" textLength="54" lengthAdjust="spacingAndGlyphs" >Colorspace</text>
<rect x="41" y="186" width="91" height="14" fill="#dcdcdc" />
<text x="42" y="197" font-size="11" fill="#202020" text-anchor="start" font-weight="normal" textLength="90" lengthAdjust="spacingAndGlyphs" >Saturation Sweeps</text>
<text x="42" y="212" font-size="11" fill="#eeeeee" text-anchor="start" font-weight="normal" textLength="93" lengthAdjust="spacingAndGlyphs" >Luminance Sweeps</text>
<text x="42" y="226" font-size="11" fill="#eeeeee" text-anchor="start" font-weight="normal" textLength="64" lengthAdjust="spacingAndGlyphs" >ColorChecker</text>
<text x="42" y="241" font-size="11" fill="#eeeeee" text-anchor="start" font-weight="normal" textLength="88" lengthAdjust="spacingAndGlyphs" >Screen Uniformity</text>
<text x="42" y="256" font-size="11" fill="#eeeeee" text-anchor="start" font-weight="normal" textLength="51" lengthAdjust="spacingAndGlyphs" >Angularity</text>
<text x="42" y="270" font-size="11" fill="#eeeeee" text-anchor="start" font-weight="normal" textLength="62" lengthAdjust="spacingAndGlyphs" >3D Cube LUT</text>
<text x="42" y="285" font-size="11" fill="#eeeeee" text-anchor="start" font-weight="normal" textLength="97" lengthAdjust="spacingAndGlyphs" >Spectral Power Dist.</text>
<path d="M200.5,87 V61 Q200.5,57.5 204,57.5 H288 Q291.5,57.5 291.5,61 V87" fill="url(#gTab)" stroke="#5a5a5a" stroke-width="1"/>
<line x1="258.5" y1="58" x2="258.5" y2="87" stroke="#4a4a4a" stroke-width="1" />
<text x="206" y="77" font-size="11.5" fill="#dddddd" text-anchor="start" font-weight="normal" textLength="47" lengthAdjust="spacingAndGlyphs" >History 1</text>
<circle cx="274" cy="73" r="9" fill="#3a3a3a"/>
<text x="274" y="77" font-size="11" fill="#777" text-anchor="middle" font-weight="normal" >+</text>
<path d="M1058,87 V61 Q1058,57.5 1061.5,57.5 H1209.5 Q1213,57.5 1213,61 V87 Z" fill="url(#gDev)"/>
<rect x="1058" y="58" width="5" height="29" fill="#22cc22" />
<text x="1067" y="69" font-size="11" fill="#eeeeee" text-anchor="start" font-weight="normal" textLength="66" lengthAdjust="spacingAndGlyphs" >X-Rite i1Pro 2</text>
<text x="1067" y="83" font-size="11" fill="#eeeeee" text-anchor="start" font-weight="normal" textLength="78" lengthAdjust="spacingAndGlyphs" >LCD Direct View</text>
<line x1="1177.5" y1="60" x2="1177.5" y2="87" stroke="#4a4a4a" stroke-width="1" />
<circle cx="1157.5" cy="72.5" r="9.5" fill="url(#gDD)"/>
<path d="M1153,70.5 H1162 L1157.5,75 Z" fill="#fff"/>
<circle cx="1197.5" cy="72" r="12.5" fill="#0000ee" stroke="#dddddd" stroke-width="1"/>
<text x="1197.5" y="76" font-size="10" fill="#ffffff" text-anchor="middle" font-weight="normal" textLength="17" lengthAdjust="spacingAndGlyphs" >233</text>
<path d="M1219,87 V61 Q1219,57.5 1222.5,57.5 H1344.5 Q1348,57.5 1348,61 V87 Z" fill="url(#gDev)"/>
<rect x="1219" y="58" width="5" height="29" fill="#dddd00" />
<text x="1228" y="69" font-size="11" fill="#eeeeee" text-anchor="start" font-weight="normal" textLength="33" lengthAdjust="spacingAndGlyphs" >Source</text>
<circle cx="1332" cy="72.5" r="9.5" fill="url(#gDD)"/>
<path d="M1327.5,70.5 H1336.5 L1332,75 Z" fill="#fff"/>
<path d="M1355,87 V61 Q1355,57.5 1358.5,57.5 H1494.5 Q1498,57.5 1498,61 V87 Z" fill="url(#gDev)"/>
<rect x="1355" y="58" width="5" height="29" fill="#dddd00" />
<text x="1364" y="69" font-size="11" fill="#eeeeee" text-anchor="start" font-weight="normal" textLength="105" lengthAdjust="spacingAndGlyphs" >Direct Display Control</text>
<circle cx="1482" cy="72.5" r="9.5" fill="url(#gDD)"/>
<path d="M1477.5,70.5 H1486.5 L1482,75 Z" fill="#fff"/>
<rect x="1501.5" y="57.5" width="33" height="27" rx="4" fill="url(#gSq)" stroke="#9a9a9a" stroke-width="1"/>
<rect x="1537.5" y="57.5" width="33" height="27" rx="4" fill="url(#gSq)" stroke="#9a9a9a" stroke-width="1"/>
<rect x="1573.5" y="57.5" width="36" height="27" rx="4" fill="url(#gSq)" stroke="#9a9a9a" stroke-width="1"/>
<circle cx="1518" cy="71" r="10" fill="#5a5a5a"/>
<circle cx="1554" cy="71" r="10" fill="#5a5a5a"/>
<circle cx="1587" cy="71" r="10" fill="#5a5a5a"/>
<g transform="translate(1518,71)"><rect x="-1.6" y="-7.5" width="3.2" height="4" transform="rotate(0)" fill="#bdbdbd"/><rect x="-1.6" y="-7.5" width="3.2" height="4" transform="rotate(45)" fill="#bdbdbd"/><rect x="-1.6" y="-7.5" width="3.2" height="4" transform="rotate(90)" fill="#bdbdbd"/><rect x="-1.6" y="-7.5" width="3.2" height="4" transform="rotate(135)" fill="#bdbdbd"/><rect x="-1.6" y="-7.5" width="3.2" height="4" transform="rotate(180)" fill="#bdbdbd"/><rect x="-1.6" y="-7.5" width="3.2" height="4" transform="rotate(225)" fill="#bdbdbd"/><rect x="-1.6" y="-7.5" width="3.2" height="4" transform="rotate(270)" fill="#bdbdbd"/><rect x="-1.6" y="-7.5" width="3.2" height="4" transform="rotate(315)" fill="#bdbdbd"/><circle r="5" fill="none" stroke="#bdbdbd" stroke-width="2.5"/></g>
<text x="1554" y="77.5" font-size="17" fill="#eeeeee" text-anchor="middle" font-weight="bold" >?</text>
<path d="M1590,65 V77 L1582.5,71 Z" fill="#eeeeee"/>
<text x="222" y="140.3" font-size="34.5" fill="#eeeeee" text-anchor="start" font-weight="normal" textLength="272" lengthAdjust="spacingAndGlyphs" >Saturation Sweeps</text>
<text x="335" y="195" font-size="12" fill="#dcdcdc" text-anchor="middle" font-weight="normal" textLength="70" lengthAdjust="spacingAndGlyphs" >RGB Balance</text>
<rect x="240.5" y="199.5" width="212" height="394" fill="#232323" stroke="#a0a0a0" stroke-width="1" />
<line x1="240" y1="228.5" x2="452" y2="228.5" stroke="#a0a0a0" stroke-width="1" />
<line x1="235" y1="228.5" x2="240" y2="228.5" stroke="#a0a0a0" stroke-width="1" />
<text x="235.5" y="234.0" font-size="13.2" fill="#dcdcdc" text-anchor="end" font-weight="normal" >60</text>
<line x1="240" y1="285.5" x2="452" y2="285.5" stroke="#a0a0a0" stroke-width="1" />
<line x1="235" y1="285.5" x2="240" y2="285.5" stroke="#a0a0a0" stroke-width="1" />
<text x="235.5" y="290.5" font-size="13.2" fill="#dcdcdc" text-anchor="end" font-weight="normal" >40</text>
<line x1="240" y1="341.5" x2="452" y2="341.5" stroke="#a0a0a0" stroke-width="1" />
<line x1="235" y1="341.5" x2="240" y2="341.5" stroke="#a0a0a0" stroke-width="1" />
<text x="235.5" y="346.5" font-size="13.2" fill="#dcdcdc" text-anchor="end" font-weight="normal" >20</text>
<line x1="240" y1="397.5" x2="452" y2="397.5" stroke="#a0a0a0" stroke-width="1" />
<line x1="235" y1="397.5" x2="240" y2="397.5" stroke="#a0a0a0" stroke-width="1" />
<text x="235.5" y="402.5" font-size="13.2" fill="#dcdcdc" text-anchor="end" font-weight="normal" >0</text>
<line x1="240" y1="453.5" x2="452" y2="453.5" stroke="#a0a0a0" stroke-width="1" />
<line x1="235" y1="453.5" x2="240" y2="453.5" stroke="#a0a0a0" stroke-width="1" />
<text x="235.5" y="458.5" font-size="13.2" fill="#dcdcdc" text-anchor="end" font-weight="normal" >-20</text>
<line x1="240" y1="509.5" x2="452" y2="509.5" stroke="#a0a0a0" stroke-width="1" />
<line x1="235" y1="509.5" x2="240" y2="509.5" stroke="#a0a0a0" stroke-width="1" />
<text x="235.5" y="515.0" font-size="13.2" fill="#dcdcdc" text-anchor="end" font-weight="normal" >-40</text>
<line x1="240" y1="565.5" x2="452" y2="565.5" stroke="#a0a0a0" stroke-width="1" />
<line x1="235" y1="565.5" x2="240" y2="565.5" stroke="#a0a0a0" stroke-width="1" />
<text x="235.5" y="570.5" font-size="13.2" fill="#dcdcdc" text-anchor="end" font-weight="normal" >-60</text>
<line x1="240.5" y1="593" x2="240.5" y2="598" stroke="#a0a0a0" stroke-width="1" />
<line x1="452.5" y1="593" x2="452.5" y2="598" stroke="#a0a0a0" stroke-width="1" />
<text x="346" y="607" font-size="12" fill="#dcdcdc" text-anchor="middle" font-weight="normal" >100%</text>
<rect x="261.5" y="296.5" width="56" height="100.5" fill="url(#gRed)" stroke="#000" stroke-width="1" />
<rect x="318.5" y="281.5" width="56" height="115.5" fill="url(#gGrn)" stroke="#000" stroke-width="1" />
<rect x="375.5" y="397" width="56" height="179" fill="url(#gBlu)" stroke="#000" stroke-width="1" />
<text x="583" y="123" font-size="12" fill="#dcdcdc" text-anchor="middle" font-weight="normal" >DeltaL</text>
<rect x="536.5" y="128.5" width="116" height="237.5" fill="#232323" stroke="#a0a0a0" stroke-width="1" />
<line x1="536" y1="128.5" x2="652" y2="128.5" stroke="#a0a0a0" stroke-width="1" />
<line x1="531" y1="128.5" x2="536" y2="128.5" stroke="#a0a0a0" stroke-width="1" />
<text x="532.5" y="133.5" font-size="13.2" fill="#dcdcdc" text-anchor="end" font-weight="normal" >15</text>
<line x1="536" y1="167.5" x2="652" y2="167.5" stroke="#a0a0a0" stroke-width="1" />
<line x1="531" y1="167.5" x2="536" y2="167.5" stroke="#a0a0a0" stroke-width="1" />
<text x="532.5" y="173.2" font-size="13.2" fill="#dcdcdc" text-anchor="end" font-weight="normal" >10</text>
<line x1="536" y1="207.5" x2="652" y2="207.5" stroke="#a0a0a0" stroke-width="1" />
<line x1="531" y1="207.5" x2="536" y2="207.5" stroke="#a0a0a0" stroke-width="1" />
<text x="532.5" y="212.8" font-size="13.2" fill="#dcdcdc" text-anchor="end" font-weight="normal" >5</text>
<line x1="536" y1="247.5" x2="652" y2="247.5" stroke="#a0a0a0" stroke-width="1" />
<line x1="531" y1="247.5" x2="536" y2="247.5" stroke="#a0a0a0" stroke-width="1" />
<text x="532.5" y="252.5" font-size="13.2" fill="#dcdcdc" text-anchor="end" font-weight="normal" >0</text>
<line x1="536" y1="286.5" x2="652" y2="286.5" stroke="#a0a0a0" stroke-width="1" />
<line x1="531" y1="286.5" x2="536" y2="286.5" stroke="#a0a0a0" stroke-width="1" />
<text x="532.5" y="292.3" font-size="13.2" fill="#dcdcdc" text-anchor="end" font-weight="normal" >-5</text>
<line x1="536" y1="326.5" x2="652" y2="326.5" stroke="#a0a0a0" stroke-width="1" />
<line x1="531" y1="326.5" x2="536" y2="326.5" stroke="#a0a0a0" stroke-width="1" />
<text x="532.5" y="332.0" font-size="13.2" fill="#dcdcdc" text-anchor="end" font-weight="normal" >-10</text>
<line x1="536" y1="366.5" x2="652" y2="366.5" stroke="#a0a0a0" stroke-width="1" />
<line x1="531" y1="366.5" x2="536" y2="366.5" stroke="#a0a0a0" stroke-width="1" />
<text x="532.5" y="371.5" font-size="13.2" fill="#dcdcdc" text-anchor="end" font-weight="normal" >-15</text>
<line x1="536.5" y1="366" x2="536.5" y2="371" stroke="#a0a0a0" stroke-width="1" />
<line x1="652.5" y1="366" x2="652.5" y2="371" stroke="#a0a0a0" stroke-width="1" />
<text x="595" y="379" font-size="12" fill="#dcdcdc" text-anchor="middle" font-weight="normal" >100%</text>
<rect x="548.5" y="145.8" width="91" height="100.69999999999999" fill="url(#gYel)" stroke="#000" stroke-width="1" />
<line x1="536" y1="166.60000000000002" x2="652" y2="166.60000000000002" stroke="#e81010" stroke-width="1.6" />
<line x1="536" y1="326.0" x2="652" y2="326.0" stroke="#e81010" stroke-width="1.6" />
<line x1="536" y1="206.45000000000002" x2="652" y2="206.45000000000002" stroke="#f0f000" stroke-width="1.6" />
<line x1="536" y1="286.15000000000003" x2="652" y2="286.15000000000003" stroke="#f0f000" stroke-width="1.6" />
<line x1="536" y1="222.39000000000001" x2="652" y2="222.39000000000001" stroke="#108010" stroke-width="1.3" />
<line x1="536" y1="270.21000000000004" x2="652" y2="270.21000000000004" stroke="#108010" stroke-width="1.3" />
<text x="743" y="123" font-size="12" fill="#dcdcdc" text-anchor="middle" font-weight="normal" >DeltaC</text>
<rect x="696.5" y="128.5" width="116" height="237.5" fill="#232323" stroke="#a0a0a0" stroke-width="1" />
<line x1="696" y1="128.5" x2="812" y2="128.5" stroke="#a0a0a0" stroke-width="1" />
<line x1="691" y1="128.5" x2="696" y2="128.5" stroke="#a0a0a0" stroke-width="1" />
<text x="692.5" y="133.5" font-size="13.2" fill="#dcdcdc" text-anchor="end" font-weight="normal" >15</text>
<line x1="696" y1="167.5" x2="812" y2="167.5" stroke="#a0a0a0" stroke-width="1" />
<line x1="691" y1="167.5" x2="696" y2="167.5" stroke="#a0a0a0" stroke-width="1" />
<text x="692.5" y="173.2" font-size="13.2" fill="#dcdcdc" text-anchor="end" font-weight="normal" >10</text>
<line x1="696" y1="207.5" x2="812" y2="207.5" stroke="#a0a0a0" stroke-width="1" />
<line x1="691" y1="207.5" x2="696" y2="207.5" stroke="#a0a0a0" stroke-width="1" />
<text x="692.5" y="212.8" font-size="13.2" fill="#dcdcdc" text-anchor="end" font-weight="normal" >5</text>
<line x1="696" y1="247.5" x2="812" y2="247.5" stroke="#a0a0a0" stroke-width="1" />
<line x1="691" y1="247.5" x2="696" y2="247.5" stroke="#a0a0a0" stroke-width="1" />
<text x="692.5" y="252.5" font-size="13.2" fill="#dcdcdc" text-anchor="end" font-weight="normal" >0</text>
<line x1="696" y1="286.5" x2="812" y2="286.5" stroke="#a0a0a0" stroke-width="1" />
<line x1="691" y1="286.5" x2="696" y2="286.5" stroke="#a0a0a0" stroke-width="1" />
<text x="692.5" y="292.3" font-size="13.2" fill="#dcdcdc" text-anchor="end" font-weight="normal" >-5</text>
<line x1="696" y1="326.5" x2="812" y2="326.5" stroke="#a0a0a0" stroke-width="1" />
<line x1="691" y1="326.5" x2="696" y2="326.5" stroke="#a0a0a0" stroke-width="1" />
<text x="692.5" y="332.0" font-size="13.2" fill="#dcdcdc" text-anchor="end" font-weight="normal" >-10</text>
<line x1="696" y1="366.5" x2="812" y2="366.5" stroke="#a0a0a0" stroke-width="1" />
<line x1="691" y1="366.5" x2="696" y2="366.5" stroke="#a0a0a0" stroke-width="1" />
<text x="692.5" y="371.5" font-size="13.2" fill="#dcdcdc" text-anchor="end" font-weight="normal" >-15</text>
<line x1="696.5" y1="366" x2="696.5" y2="371" stroke="#a0a0a0" stroke-width="1" />
<line x1="812.5" y1="366" x2="812.5" y2="371" stroke="#a0a0a0" stroke-width="1" />
<text x="755" y="379" font-size="12" fill="#dcdcdc" text-anchor="middle" font-weight="normal" >100%</text>
<rect x="708.5" y="167.3" width="91" height="79.19999999999999" fill="url(#gYel)" stroke="#000" stroke-width="1" />
<line x1="696" y1="166.60000000000002" x2="812" y2="166.60000000000002" stroke="#e81010" stroke-width="1.6" />
<line x1="696" y1="326.0" x2="812" y2="326.0" stroke="#e81010" stroke-width="1.6" />
<line x1="696" y1="206.45000000000002" x2="812" y2="206.45000000000002" stroke="#f0f000" stroke-width="1.6" />
<line x1="696" y1="286.15000000000003" x2="812" y2="286.15000000000003" stroke="#f0f000" stroke-width="1.6" />
<line x1="696" y1="222.39000000000001" x2="812" y2="222.39000000000001" stroke="#108010" stroke-width="1.3" />
<line x1="696" y1="270.21000000000004" x2="812" y2="270.21000000000004" stroke="#108010" stroke-width="1.3" />
<text x="903" y="123" font-size="12" fill="#dcdcdc" text-anchor="middle" font-weight="normal" >DeltaH</text>
<rect x="856.5" y="128.5" width="116" height="237.5" fill="#232323" stroke="#a0a0a0" stroke-width="1" />
<line x1="856" y1="128.5" x2="972" y2="128.5" stroke="#a0a0a0" stroke-width="1" />
<line x1="851" y1="128.5" x2="856" y2="128.5" stroke="#a0a0a0" stroke-width="1" />
<text x="852.5" y="133.5" font-size="13.2" fill="#dcdcdc" text-anchor="end" font-weight="normal" >15</text>
<line x1="856" y1="167.5" x2="972" y2="167.5" stroke="#a0a0a0" stroke-width="1" />
<line x1="851" y1="167.5" x2="856" y2="167.5" stroke="#a0a0a0" stroke-width="1" />
<text x="852.5" y="173.2" font-size="13.2" fill="#dcdcdc" text-anchor="end" font-weight="normal" >10</text>
<line x1="856" y1="207.5" x2="972" y2="207.5" stroke="#a0a0a0" stroke-width="1" />
<line x1="851" y1="207.5" x2="856" y2="207.5" stroke="#a0a0a0" stroke-width="1" />
<text x="852.5" y="212.8" font-size="13.2" fill="#dcdcdc" text-anchor="end" font-weight="normal" >5</text>
<line x1="856" y1="247.5" x2="972" y2="247.5" stroke="#a0a0a0" stroke-width="1" />
<line x1="851" y1="247.5" x2="856" y2="247.5" stroke="#a0a0a0" stroke-width="1" />
<text x="852.5" y="252.5" font-size="13.2" fill="#dcdcdc" text-anchor="end" font-weight="normal" >0</text>
<line x1="856" y1="286.5" x2="972" y2="286.5" stroke="#a0a0a0" stroke-width="1" />
<line x1="851" y1="286.5" x2="856" y2="286.5" stroke="#a0a0a0" stroke-width="1" />
<text x="852.5" y="292.3" font-size="13.2" fill="#dcdcdc" text-anchor="end" font-weight="normal" >-5</text>
<line x1="856" y1="326.5" x2="972" y2="326.5" stroke="#a0a0a0" stroke-width="1" />
<line x1="851" y1="326.5" x2="856" y2="326.5" stroke="#a0a0a0" stroke-width="1" />
<text x="852.5" y="332.0" font-size="13.2" fill="#dcdcdc" text-anchor="end" font-weight="normal" >-10</text>
<line x1="856" y1="366.5" x2="972" y2="366.5" stroke="#a0a0a0" stroke-width="1" />
<line x1="851" y1="366.5" x2="856" y2="366.5" stroke="#a0a0a0" stroke-width="1" />
<text x="852.5" y="371.5" font-size="13.2" fill="#dcdcdc" text-anchor="end" font-weight="normal" >-15</text>
<line x1="856.5" y1="366" x2="856.5" y2="371" stroke="#a0a0a0" stroke-width="1" />
<line x1="972.5" y1="366" x2="972.5" y2="371" stroke="#a0a0a0" stroke-width="1" />
<text x="915" y="379" font-size="12" fill="#dcdcdc" text-anchor="middle" font-weight="normal" >100%</text>
<rect x="868.5" y="239.5" width="91" height="7" fill="url(#gYel)" stroke="#000" stroke-width="1" />
<line x1="856" y1="166.60000000000002" x2="972" y2="166.60000000000002" stroke="#e81010" stroke-width="1.6" />
<line x1="856" y1="326.0" x2="972" y2="326.0" stroke="#e81010" stroke-width="1.6" />
<line x1="856" y1="206.45000000000002" x2="972" y2="206.45000000000002" stroke="#f0f000" stroke-width="1.6" />
<line x1="856" y1="286.15000000000003" x2="972" y2="286.15000000000003" stroke="#f0f000" stroke-width="1.6" />
<line x1="856" y1="222.39000000000001" x2="972" y2="222.39000000000001" stroke="#108010" stroke-width="1.3" />
<line x1="856" y1="270.21000000000004" x2="972" y2="270.21000000000004" stroke="#108010" stroke-width="1.3" />
<rect x="481" y="394" width="519" height="143" fill="#000000" />
<text transform="translate(492,426) rotate(-90)" font-size="10" font-weight="bold" fill="#eeeeee" text-anchor="middle">Actual</text>
<text transform="translate(492,491) rotate(-90)" font-size="10" font-weight="bold" fill="#eeeeee" text-anchor="middle">Target</text>
<rect x="498.5" y="400.5" width="87" height="51" fill="#e3e2c9" stroke="#ffffff" stroke-width="1" />
<rect x="498.5" y="466.5" width="87" height="50" fill="#c0c0a4" stroke="#ffffff" stroke-width="1" />
<text x="542" y="531" font-size="10" fill="#ffffff" text-anchor="middle" font-weight="bold" >20%</text>
<rect x="600.5" y="400.5" width="87" height="51" fill="#e0e3a6" stroke="#ffffff" stroke-width="1" />
<rect x="600.5" y="466.5" width="87" height="50" fill="#c1c189" stroke="#ffffff" stroke-width="1" />
<text x="644" y="531" font-size="10" fill="#ffffff" text-anchor="middle" font-weight="bold" >40%</text>
<rect x="701.5" y="400.5" width="87" height="51" fill="#e0e385" stroke="#ffffff" stroke-width="1" />
<rect x="701.5" y="466.5" width="87" height="50" fill="#bfbf6c" stroke="#ffffff" stroke-width="1" />
<text x="745" y="531" font-size="10" fill="#ffffff" text-anchor="middle" font-weight="bold" >60%</text>
<rect x="803.5" y="400.5" width="87" height="51" fill="#e0e35e" stroke="#ffffff" stroke-width="1" />
<rect x="803.5" y="466.5" width="87" height="50" fill="#c0c04e" stroke="#ffffff" stroke-width="1" />
<text x="847" y="531" font-size="10" fill="#ffffff" text-anchor="middle" font-weight="bold" >80%</text>
<rect x="904.5" y="400.5" width="87" height="51" fill="#e0e300" stroke="#ffffff" stroke-width="1" />
<rect x="904.5" y="466.5" width="87" height="50" fill="#c1c032" stroke="#ffffff" stroke-width="1" />
<text x="948" y="531" font-size="10" fill="#ffffff" text-anchor="middle" font-weight="bold" >100%</text>
<text x="737" y="561" font-size="12" fill="#dcdcdc" text-anchor="middle" font-weight="normal" textLength="66" lengthAdjust="spacingAndGlyphs" >DeltaE 2000</text>
<rect x="492.5" y="565.5" width="508" height="219.5" fill="#232323" stroke="#a0a0a0" stroke-width="1" />
<line x1="492" y1="567.5" x2="1000" y2="567.5" stroke="#a0a0a0" stroke-width="1" />
<line x1="487" y1="567.5" x2="492" y2="567.5" stroke="#a0a0a0" stroke-width="1" />
<text x="488.5" y="572.5" font-size="13.2" fill="#dcdcdc" text-anchor="end" font-weight="normal" >15</text>
<line x1="492" y1="640.5" x2="1000" y2="640.5" stroke="#a0a0a0" stroke-width="1" />
<line x1="487" y1="640.5" x2="492" y2="640.5" stroke="#a0a0a0" stroke-width="1" />
<text x="488.5" y="645.5" font-size="13.2" fill="#dcdcdc" text-anchor="end" font-weight="normal" >10</text>
<line x1="492" y1="713.5" x2="1000" y2="713.5" stroke="#a0a0a0" stroke-width="1" />
<line x1="487" y1="713.5" x2="492" y2="713.5" stroke="#a0a0a0" stroke-width="1" />
<text x="488.5" y="718.5" font-size="13.2" fill="#dcdcdc" text-anchor="end" font-weight="normal" >5</text>
<line x1="492" y1="785.5" x2="1000" y2="785.5" stroke="#a0a0a0" stroke-width="1" />
<line x1="487" y1="785.5" x2="492" y2="785.5" stroke="#a0a0a0" stroke-width="1" />
<text x="488.5" y="790.5" font-size="13.2" fill="#dcdcdc" text-anchor="end" font-weight="normal" >0</text>
<line x1="492.5" y1="785" x2="492.5" y2="790" stroke="#a0a0a0" stroke-width="1" />
<line x1="565.5" y1="785" x2="565.5" y2="790" stroke="#a0a0a0" stroke-width="1" />
<line x1="637.5" y1="785" x2="637.5" y2="790" stroke="#a0a0a0" stroke-width="1" />
<line x1="710.5" y1="785" x2="710.5" y2="790" stroke="#a0a0a0" stroke-width="1" />
<line x1="782.5" y1="785" x2="782.5" y2="790" stroke="#a0a0a0" stroke-width="1" />
<line x1="855.5" y1="785" x2="855.5" y2="790" stroke="#a0a0a0" stroke-width="1" />
<line x1="927.5" y1="785" x2="927.5" y2="790" stroke="#a0a0a0" stroke-width="1" />
<line x1="1000.5" y1="785" x2="1000.5" y2="790" stroke="#a0a0a0" stroke-width="1" />
<text x="528.285" y="799" font-size="12" fill="#dcdcdc" text-anchor="middle" font-weight="normal" >0</text>
<text x="600.855" y="799" font-size="12" fill="#dcdcdc" text-anchor="middle" font-weight="normal" >100</text>
<text x="673.425" y="799" font-size="12" fill="#dcdcdc" text-anchor="middle" font-weight="normal" >20%</text>
<text x="745.995" y="799" font-size="12" fill="#dcdcdc" text-anchor="middle" font-weight="normal" >40%</text>
<text x="818.5649999999999" y="799" font-size="12" fill="#dcdcdc" text-anchor="middle" font-weight="normal" >60%</text>
<text x="891.135" y="799" font-size="12" fill="#dcdcdc" text-anchor="middle" font-weight="normal" >80%</text>
<text x="963.7049999999999" y="799" font-size="12" fill="#dcdcdc" text-anchor="middle" font-weight="normal" >100%</text>
<rect x="644.5" y="638.1" width="7" height="146.89999999999998" fill="url(#gb1)" stroke="#000" stroke-width="1" />
<rect x="652.5" y="688.8" width="7" height="96.20000000000005" fill="url(#gb2)" stroke="#000" stroke-width="1" />
<rect x="660.5" y="673.9" width="7" height="111.10000000000002" fill="url(#gb3)" stroke="#000" stroke-width="1" />
<rect x="668.5" y="647.5" width="7" height="137.5" fill="url(#gb4)" stroke="#000" stroke-width="1" />
<rect x="676.5" y="645.3" width="7" height="139.70000000000005" fill="url(#gb5)" stroke="#000" stroke-width="1" />
<rect x="684.5" y="655.9" width="7" height="129.10000000000002" fill="url(#gb6)" stroke="#000" stroke-width="1" />
<rect x="717.5" y="671.2" width="7" height="113.79999999999995" fill="url(#gb7)" stroke="#000" stroke-width="1" />
<rect x="725.5" y="688.2" width="7" height="96.79999999999995" fill="url(#gb8)" stroke="#000" stroke-width="1" />
<rect x="733.5" y="662.3" width="7" height="122.70000000000005" fill="url(#gb9)" stroke="#000" stroke-width="1" />
<rect x="741.5" y="648.5" width="7" height="136.5" fill="url(#gb10)" stroke="#000" stroke-width="1" />
<rect x="749.5" y="640.2" width="7" height="144.79999999999995" fill="url(#gb11)" stroke="#000" stroke-width="1" />
<rect x="757.5" y="656.3" width="7" height="128.70000000000005" fill="url(#gb12)" stroke="#000" stroke-width="1" />
<rect x="790.5" y="679.5" width="7" height="105.5" fill="url(#gb13)" stroke="#000" stroke-width="1" />
<rect x="798.5" y="688.2" width="7" height="96.79999999999995" fill="url(#gb14)" stroke="#000" stroke-width="1" />
<rect x="806.5" y="662.3" width="7" height="122.70000000000005" fill="url(#gb15)" stroke="#000" stroke-width="1" />
<rect x="814.5" y="648.5" width="7" height="136.5" fill="url(#gb16)" stroke="#000" stroke-width="1" />
<rect x="822.5" y="637.5" width="7" height="147.5" fill="url(#gb17)" stroke="#000" stroke-width="1" />
<rect x="830.5" y="654.2" width="7" height="130.79999999999995" fill="url(#gb18)" stroke="#000" stroke-width="1" />
<rect x="863.5" y="702.2" width="7" height="82.79999999999995" fill="url(#gb19)" stroke="#000" stroke-width="1" />
<rect x="871.5" y="686.3" width="7" height="98.70000000000005" fill="url(#gb20)" stroke="#000" stroke-width="1" />
<rect x="879.5" y="698.5" width="7" height="86.5" fill="url(#gb21)" stroke="#000" stroke-width="1" />
<rect x="887.5" y="649.5" width="7" height="135.5" fill="url(#gb22)" stroke="#000" stroke-width="1" />
<rect x="895.5" y="640.2" width="7" height="144.79999999999995" fill="url(#gb23)" stroke="#000" stroke-width="1" />
<rect x="903.5" y="652.0" width="7" height="133.0" fill="url(#gb24)" stroke="#000" stroke-width="1" />
<rect x="936.5" y="704.3" width="7" height="80.70000000000005" fill="url(#gb25)" stroke="#000" stroke-width="1" />
<rect x="944.5" y="682.0" width="7" height="103.0" fill="url(#gb26)" stroke="#000" stroke-width="1" />
<rect x="952.5" y="716.1" width="7" height="68.89999999999998" fill="url(#gb27)" stroke="#000" stroke-width="1" />
<rect x="960.5" y="653.2" width="7" height="131.79999999999995" fill="url(#gb28)" stroke="#000" stroke-width="1" />
<rect x="968.5" y="659.2" width="7" height="125.79999999999995" fill="url(#gb29)" stroke="#000" stroke-width="1" />
<rect x="976.5" y="643.3" width="7" height="141.70000000000005" fill="url(#gb30)" stroke="#000" stroke-width="1" />
<rect x="620.5" y="710" width="7" height="75" fill="url(#gbW)" stroke="#000" stroke-width="1" />
<rect x="547.5" y="773.5" width="7" height="11.5" fill="url(#gbK)" stroke="#000" stroke-width="1" />
<line x1="492" y1="638.8" x2="1000" y2="638.8" stroke="#e01010" stroke-width="1.6" />
<line x1="492" y1="712.8" x2="1000" y2="712.8" stroke="#f0f000" stroke-width="1.6" />
<line x1="492" y1="741.5" x2="1000" y2="741.5" stroke="#107010" stroke-width="1.6" />
<rect x="1017" y="100" width="580" height="504" fill="#c4c000" />
<rect x="1023" y="106" width="570" height="492" fill="#333333" />
<text x="1307" y="122" font-size="12" fill="#dcdcdc" text-anchor="middle" font-weight="normal" textLength="62" lengthAdjust="spacingAndGlyphs" >CIE 1931 xy</text>
<rect x="1047.5" y="126.5" width="543" height="446" fill="#232323" stroke="#a0a0a0" stroke-width="1" />
<line x1="1042" y1="572.5" x2="1047" y2="572.5" stroke="#a0a0a0" stroke-width="1" />
<text x="1042.5" y="577.5999999999999" font-size="13" fill="#dcdcdc" text-anchor="end" font-weight="normal" >0</text>
<line x1="1047.5" y1="572" x2="1047.5" y2="577" stroke="#a0a0a0" stroke-width="1" />
<text x="1047.1" y="592" font-size="12" fill="#dcdcdc" text-anchor="middle" font-weight="normal" >0</text>
<line x1="1042" y1="519.5" x2="1047" y2="519.5" stroke="#a0a0a0" stroke-width="1" />
<text x="1042.5" y="524.5999999999999" font-size="13" fill="#dcdcdc" text-anchor="end" font-weight="normal" >0.1</text>
<line x1="1111.5" y1="572" x2="1111.5" y2="577" stroke="#a0a0a0" stroke-width="1" />
<text x="1111.6999999999998" y="592" font-size="12" fill="#dcdcdc" text-anchor="middle" font-weight="normal" >0.1</text>
<line x1="1042" y1="466.5" x2="1047" y2="466.5" stroke="#a0a0a0" stroke-width="1" />
<text x="1042.5" y="471.59999999999997" font-size="13" fill="#dcdcdc" text-anchor="end" font-weight="normal" >0.2</text>
<line x1="1176.5" y1="572" x2="1176.5" y2="577" stroke="#a0a0a0" stroke-width="1" />
<text x="1176.3" y="592" font-size="12" fill="#dcdcdc" text-anchor="middle" font-weight="normal" >0.2</text>
<line x1="1042" y1="413.5" x2="1047" y2="413.5" stroke="#a0a0a0" stroke-width="1" />
<text x="1042.5" y="418.59999999999997" font-size="13" fill="#dcdcdc" text-anchor="end" font-weight="normal" >0.3</text>
<line x1="1240.5" y1="572" x2="1240.5" y2="577" stroke="#a0a0a0" stroke-width="1" />
<text x="1240.8999999999999" y="592" font-size="12" fill="#dcdcdc" text-anchor="middle" font-weight="normal" >0.3</text>
<line x1="1042" y1="360.5" x2="1047" y2="360.5" stroke="#a0a0a0" stroke-width="1" />
<text x="1042.5" y="365.59999999999997" font-size="13" fill="#dcdcdc" text-anchor="end" font-weight="normal" >0.4</text>
<line x1="1305.5" y1="572" x2="1305.5" y2="577" stroke="#a0a0a0" stroke-width="1" />
<text x="1305.5" y="592" font-size="12" fill="#dcdcdc" text-anchor="middle" font-weight="normal" >0.4</text>
<line x1="1042" y1="307.5" x2="1047" y2="307.5" stroke="#a0a0a0" stroke-width="1" />
<text x="1042.5" y="312.59999999999997" font-size="13" fill="#dcdcdc" text-anchor="end" font-weight="normal" >0.5</text>
<line x1="1370.5" y1="572" x2="1370.5" y2="577" stroke="#a0a0a0" stroke-width="1" />
<text x="1370.1" y="592" font-size="12" fill="#dcdcdc" text-anchor="middle" font-weight="normal" >0.5</text>
<line x1="1042" y1="254.5" x2="1047" y2="254.5" stroke="#a0a0a0" stroke-width="1" />
<text x="1042.5" y="259.59999999999997" font-size="13" fill="#dcdcdc" text-anchor="end" font-weight="normal" >0.6</text>
<line x1="1434.5" y1="572" x2="1434.5" y2="577" stroke="#a0a0a0" stroke-width="1" />
<text x="1434.6999999999998" y="592" font-size="12" fill="#dcdcdc" text-anchor="middle" font-weight="normal" >0.6</text>
<line x1="1042" y1="201.5" x2="1047" y2="201.5" stroke="#a0a0a0" stroke-width="1" />
<text x="1042.5" y="206.59999999999997" font-size="13" fill="#dcdcdc" text-anchor="end" font-weight="normal" >0.7</text>
<line x1="1499.5" y1="572" x2="1499.5" y2="577" stroke="#a0a0a0" stroke-width="1" />
<text x="1499.3" y="592" font-size="12" fill="#dcdcdc" text-anchor="middle" font-weight="normal" >0.7</text>
<line x1="1042" y1="148.5" x2="1047" y2="148.5" stroke="#a0a0a0" stroke-width="1" />
<text x="1042.5" y="153.59999999999997" font-size="13" fill="#dcdcdc" text-anchor="end" font-weight="normal" >0.8</text>
<line x1="1563.5" y1="572" x2="1563.5" y2="577" stroke="#a0a0a0" stroke-width="1" />
<text x="1563.9" y="592" font-size="12" fill="#dcdcdc" text-anchor="middle" font-weight="normal" >0.8</text>
<g clip-path="url(#cpLoc)">
<rect x="1047" y="126" width="544" height="447" fill="#000"/>
<g style="isolation:isolate">
<polygon points="1249.10,397.93 1280.82,397.85 1273.69,393.21" fill="url(#g1)" class="pl"/><polygon points="1249.10,397.93 1280.82,397.85 1273.69,393.21" fill="url(#g2)" class="pl"/><polygon points="1249.10,397.93 1280.82,397.85 1273.69,393.21" fill="url(#g3)" class="pl"/>
<polygon points="1280.82,397.85 1323.11,397.74 1306.48,386.91" fill="url(#g4)" class="pl"/><polygon points="1280.82,397.85 1323.11,397.74 1306.48,386.91" fill="url(#g5)" class="pl"/><polygon points="1280.82,397.85 1323.11,397.74 1306.48,386.91" fill="url(#g6)" class="pl"/>
<polygon points="1280.82,397.85 1306.48,386.91 1273.69,393.21" fill="url(#g7)" class="pl"/><polygon points="1280.82,397.85 1306.48,386.91 1273.69,393.21" fill="url(#g8)" class="pl"/><polygon points="1280.82,397.85 1306.48,386.91 1273.69,393.21" fill="url(#g9)" class="pl"/>
<polygon points="1323.11,397.74 1375.97,397.61 1347.45,379.04" fill="url(#g10)" class="pl"/><polygon points="1323.11,397.74 1375.97,397.61 1347.45,379.04" fill="url(#g11)" class="pl"/><polygon points="1323.11,397.74 1375.97,397.61 1347.45,379.04" fill="url(#g12)" class="pl"/>
<polygon points="1323.11,397.74 1347.45,379.04 1306.48,386.91" fill="url(#g13)" class="pl"/><polygon points="1323.11,397.74 1347.45,379.04 1306.48,386.91" fill="url(#g14)" class="pl"/><polygon points="1323.11,397.74 1347.45,379.04 1306.48,386.91" fill="url(#g15)" class="pl"/>
<polygon points="1375.97,397.61 1460.54,397.40 1413.02,366.44" fill="url(#g16)" class="pl"/><polygon points="1375.97,397.61 1460.54,397.40 1413.02,366.44" fill="url(#g17)" class="pl"/><polygon points="1375.97,397.61 1460.54,397.40 1413.02,366.44" fill="url(#g18)" class="pl"/>
<polygon points="1375.97,397.61 1413.02,366.44 1347.45,379.04" fill="url(#g19)" class="pl"/><polygon points="1375.97,397.61 1413.02,366.44 1347.45,379.04" fill="url(#g20)" class="pl"/><polygon points="1375.97,397.61 1413.02,366.44 1347.45,379.04" fill="url(#g21)" class="pl"/>
<polygon points="1249.10,397.93 1273.69,393.21 1266.56,388.56" fill="url(#g22)" class="pl"/><polygon points="1249.10,397.93 1273.69,393.21 1266.56,388.56" fill="url(#g23)" class="pl"/><polygon points="1249.10,397.93 1273.69,393.21 1266.56,388.56" fill="url(#g24)" class="pl"/>
<polygon points="1273.69,393.21 1306.48,386.91 1289.84,376.07" fill="url(#g25)" class="pl"/><polygon points="1273.69,393.21 1306.48,386.91 1289.84,376.07" fill="url(#g26)" class="pl"/><polygon points="1273.69,393.21 1306.48,386.91 1289.84,376.07" fill="url(#g27)" class="pl"/>
<polygon points="1273.69,393.21 1289.84,376.07 1266.56,388.56" fill="url(#g28)" class="pl"/><polygon points="1273.69,393.21 1289.84,376.07 1266.56,388.56" fill="url(#g29)" class="pl"/><polygon points="1273.69,393.21 1289.84,376.07 1266.56,388.56" fill="url(#g30)" class="pl"/>
<polygon points="1306.48,386.91 1347.45,379.04 1318.94,360.46" fill="url(#g31)" class="pl"/><polygon points="1306.48,386.91 1347.45,379.04 1318.94,360.46" fill="url(#g32)" class="pl"/><polygon points="1306.48,386.91 1347.45,379.04 1318.94,360.46" fill="url(#g33)" class="pl"/>
<polygon points="1306.48,386.91 1318.94,360.46 1289.84,376.07" fill="url(#g34)" class="pl"/><polygon points="1306.48,386.91 1318.94,360.46 1289.84,376.07" fill="url(#g35)" class="pl"/><polygon points="1306.48,386.91 1318.94,360.46 1289.84,376.07" fill="url(#g36)" class="pl"/>
<polygon points="1347.45,379.04 1413.02,366.44 1365.50,335.48" fill="url(#g37)" class="pl"/><polygon points="1347.45,379.04 1413.02,366.44 1365.50,335.48" fill="url(#g38)" class="pl"/><polygon points="1347.45,379.04 1413.02,366.44 1365.50,335.48" fill="url(#g39)" class="pl"/>
<polygon points="1347.45,379.04 1365.50,335.48 1318.94,360.46" fill="url(#g40)" class="pl"/><polygon points="1347.45,379.04 1365.50,335.48 1318.94,360.46" fill="url(#g41)" class="pl"/><polygon points="1347.45,379.04 1365.50,335.48 1318.94,360.46" fill="url(#g42)" class="pl"/>
<polygon points="1249.10,397.93 1266.56,388.56 1259.44,383.92" fill="url(#g43)" class="pl"/><polygon points="1249.10,397.93 1266.56,388.56 1259.44,383.92" fill="url(#g44)" class="pl"/><polygon points="1249.10,397.93 1266.56,388.56 1259.44,383.92" fill="url(#g45)" class="pl"/>
<polygon points="1266.56,388.56 1289.84,376.07 1273.21,365.24" fill="url(#g46)" class="pl"/><polygon points="1266.56,388.56 1289.84,376.07 1273.21,365.24" fill="url(#g47)" class="pl"/><polygon points="1266.56,388.56 1289.84,376.07 1273.21,365.24" fill="url(#g48)" class="pl"/>
<polygon points="1266.56,388.56 1273.21,365.24 1259.44,383.92" fill="url(#g49)" class="pl"/><polygon points="1266.56,388.56 1273.21,365.24 1259.44,383.92" fill="url(#g50)" class="pl"/><polygon points="1266.56,388.56 1273.21,365.24 1259.44,383.92" fill="url(#g51)" class="pl"/>
<polygon points="1289.84,376.07 1318.94,360.46 1290.43,341.88" fill="url(#g52)" class="pl"/><polygon points="1289.84,376.07 1318.94,360.46 1290.43,341.88" fill="url(#g53)" class="pl"/><polygon points="1289.84,376.07 1318.94,360.46 1290.43,341.88" fill="url(#g54)" class="pl"/>
<polygon points="1289.84,376.07 1290.43,341.88 1273.21,365.24" fill="url(#g55)" class="pl"/><polygon points="1289.84,376.07 1290.43,341.88 1273.21,365.24" fill="url(#g56)" class="pl"/><polygon points="1289.84,376.07 1290.43,341.88 1273.21,365.24" fill="url(#g57)" class="pl"/>
<polygon points="1318.94,360.46 1365.50,335.48 1317.98,304.52" fill="url(#g58)" class="pl"/><polygon points="1318.94,360.46 1365.50,335.48 1317.98,304.52" fill="url(#g59)" class="pl"/><polygon points="1318.94,360.46 1365.50,335.48 1317.98,304.52" fill="url(#g60)" class="pl"/>
<polygon points="1318.94,360.46 1317.98,304.52 1290.43,341.88" fill="url(#g61)" class="pl"/><polygon points="1318.94,360.46 1317.98,304.52 1290.43,341.88" fill="url(#g62)" class="pl"/><polygon points="1318.94,360.46 1317.98,304.52 1290.43,341.88" fill="url(#g63)" class="pl"/>
<polygon points="1249.10,397.93 1259.44,383.92 1255.58,381.41" fill="url(#g64)" class="pl"/><polygon points="1249.10,397.93 1259.44,383.92 1255.58,381.41" fill="url(#g65)" class="pl"/><polygon points="1249.10,397.93 1259.44,383.92 1255.58,381.41" fill="url(#g66)" class="pl"/>
<polygon points="1259.44,383.92 1273.21,365.24 1264.22,359.38" fill="url(#g67)" class="pl"/><polygon points="1259.44,383.92 1273.21,365.24 1264.22,359.38" fill="url(#g68)" class="pl"/><polygon points="1259.44,383.92 1273.21,365.24 1264.22,359.38" fill="url(#g69)" class="pl"/>
<polygon points="1259.44,383.92 1264.22,359.38 1255.58,381.41" fill="url(#g70)" class="pl"/><polygon points="1259.44,383.92 1264.22,359.38 1255.58,381.41" fill="url(#g71)" class="pl"/><polygon points="1259.44,383.92 1264.22,359.38 1255.58,381.41" fill="url(#g72)" class="pl"/>
<polygon points="1273.21,365.24 1290.43,341.88 1275.01,331.84" fill="url(#g73)" class="pl"/><polygon points="1273.21,365.24 1290.43,341.88 1275.01,331.84" fill="url(#g74)" class="pl"/><polygon points="1273.21,365.24 1290.43,341.88 1275.01,331.84" fill="url(#g75)" class="pl"/>
<polygon points="1273.21,365.24 1275.01,331.84 1264.22,359.38" fill="url(#g76)" class="pl"/><polygon points="1273.21,365.24 1275.01,331.84 1264.22,359.38" fill="url(#g77)" class="pl"/><polygon points="1273.21,365.24 1275.01,331.84 1264.22,359.38" fill="url(#g78)" class="pl"/>
<polygon points="1290.43,341.88 1317.98,304.52 1292.29,287.78" fill="url(#g79)" class="pl"/><polygon points="1290.43,341.88 1317.98,304.52 1292.29,287.78" fill="url(#g80)" class="pl"/><polygon points="1290.43,341.88 1317.98,304.52 1292.29,287.78" fill="url(#g81)" class="pl"/>
<polygon points="1290.43,341.88 1292.29,287.78 1275.01,331.84" fill="url(#g82)" class="pl"/><polygon points="1290.43,341.88 1292.29,287.78 1275.01,331.84" fill="url(#g83)" class="pl"/><polygon points="1290.43,341.88 1292.29,287.78 1275.01,331.84" fill="url(#g84)" class="pl"/>
<polygon points="1249.10,397.93 1255.58,381.41 1251.73,378.90" fill="url(#g85)" class="pl"/><polygon points="1249.10,397.93 1255.58,381.41 1251.73,378.90" fill="url(#g86)" class="pl"/><polygon points="1249.10,397.93 1255.58,381.41 1251.73,378.90" fill="url(#g87)" class="pl"/>
<polygon points="1255.58,381.41 1264.22,359.38 1255.23,353.52" fill="url(#g88)" class="pl"/><polygon points="1255.58,381.41 1264.22,359.38 1255.23,353.52" fill="url(#g89)" class="pl"/><polygon points="1255.58,381.41 1264.22,359.38 1255.23,353.52" fill="url(#g90)" class="pl"/>
<polygon points="1255.58,381.41 1255.23,353.52 1251.73,378.90" fill="url(#g91)" class="pl"/><polygon points="1255.58,381.41 1255.23,353.52 1251.73,378.90" fill="url(#g92)" class="pl"/><polygon points="1255.58,381.41 1255.23,353.52 1251.73,378.90" fill="url(#g93)" class="pl"/>
<polygon points="1264.22,359.38 1275.01,331.84 1259.60,321.80" fill="url(#g94)" class="pl"/><polygon points="1264.22,359.38 1275.01,331.84 1259.60,321.80" fill="url(#g95)" class="pl"/><polygon points="1264.22,359.38 1275.01,331.84 1259.60,321.80" fill="url(#g96)" class="pl"/>
<polygon points="1264.22,359.38 1259.60,321.80 1255.23,353.52" fill="url(#g97)" class="pl"/><polygon points="1264.22,359.38 1259.60,321.80 1255.23,353.52" fill="url(#g98)" class="pl"/><polygon points="1264.22,359.38 1259.60,321.80 1255.23,353.52" fill="url(#g99)" class="pl"/>
<polygon points="1275.01,331.84 1292.29,287.78 1266.59,271.04" fill="url(#g100)" class="pl"/><polygon points="1275.01,331.84 1292.29,287.78 1266.59,271.04" fill="url(#g101)" class="pl"/><polygon points="1275.01,331.84 1292.29,287.78 1266.59,271.04" fill="url(#g102)" class="pl"/>
<polygon points="1275.01,331.84 1266.59,271.04 1259.60,321.80" fill="url(#g103)" class="pl"/><polygon points="1275.01,331.84 1266.59,271.04 1259.60,321.80" fill="url(#g104)" class="pl"/><polygon points="1275.01,331.84 1266.59,271.04 1259.60,321.80" fill="url(#g105)" class="pl"/>
<polygon points="1249.10,397.93 1251.73,378.90 1247.87,376.39" fill="url(#g106)" class="pl"/><polygon points="1249.10,397.93 1251.73,378.90 1247.87,376.39" fill="url(#g107)" class="pl"/><polygon points="1249.10,397.93 1251.73,378.90 1247.87,376.39" fill="url(#g108)" class="pl"/>
<polygon points="1251.73,378.90 1255.23,353.52 1246.23,347.66" fill="url(#g109)" class="pl"/><polygon points="1251.73,378.90 1255.23,353.52 1246.23,347.66" fill="url(#g110)" class="pl"/><polygon points="1251.73,378.90 1255.23,353.52 1246.23,347.66" fill="url(#g111)" class="pl"/>
<polygon points="1251.73,378.90 1246.23,347.66 1247.87,376.39" fill="url(#g112)" class="pl"/><polygon points="1251.73,378.90 1246.23,347.66 1247.87,376.39" fill="url(#g113)" class="pl"/><polygon points="1251.73,378.90 1246.23,347.66 1247.87,376.39" fill="url(#g114)" class="pl"/>
<polygon points="1255.23,353.52 1259.60,321.80 1244.18,311.75" fill="url(#g115)" class="pl"/><polygon points="1255.23,353.52 1259.60,321.80 1244.18,311.75" fill="url(#g116)" class="pl"/><polygon points="1255.23,353.52 1259.60,321.80 1244.18,311.75" fill="url(#g117)" class="pl"/>
<polygon points="1255.23,353.52 1244.18,311.75 1246.23,347.66" fill="url(#g118)" class="pl"/><polygon points="1255.23,353.52 1244.18,311.75 1246.23,347.66" fill="url(#g119)" class="pl"/><polygon points="1255.23,353.52 1244.18,311.75 1246.23,347.66" fill="url(#g120)" class="pl"/>
<polygon points="1259.60,321.80 1266.59,271.04 1240.90,254.30" fill="url(#g121)" class="pl"/><polygon points="1259.60,321.80 1266.59,271.04 1240.90,254.30" fill="url(#g122)" class="pl"/><polygon points="1259.60,321.80 1266.59,271.04 1240.90,254.30" fill="url(#g123)" class="pl"/>
<polygon points="1259.60,321.80 1240.90,254.30 1244.18,311.75" fill="url(#g124)" class="pl"/><polygon points="1259.60,321.80 1240.90,254.30 1244.18,311.75" fill="url(#g125)" class="pl"/><polygon points="1259.60,321.80 1240.90,254.30 1244.18,311.75" fill="url(#g126)" class="pl"/>
<polygon points="1249.10,397.93 1247.87,376.39 1245.44,383.58" fill="url(#g127)" class="pl"/><polygon points="1249.10,397.93 1247.87,376.39 1245.44,383.58" fill="url(#g128)" class="pl"/><polygon points="1249.10,397.93 1247.87,376.39 1245.44,383.58" fill="url(#g129)" class="pl"/>
<polygon points="1247.87,376.39 1246.23,347.66 1240.55,364.44" fill="url(#g130)" class="pl"/><polygon points="1247.87,376.39 1246.23,347.66 1240.55,364.44" fill="url(#g131)" class="pl"/><polygon points="1247.87,376.39 1246.23,347.66 1240.55,364.44" fill="url(#g132)" class="pl"/>
<polygon points="1247.87,376.39 1240.55,364.44 1245.44,383.58" fill="url(#g133)" class="pl"/><polygon points="1247.87,376.39 1240.55,364.44 1245.44,383.58" fill="url(#g134)" class="pl"/><polygon points="1247.87,376.39 1240.55,364.44 1245.44,383.58" fill="url(#g135)" class="pl"/>
<polygon points="1246.23,347.66 1244.18,311.75 1234.44,340.51" fill="url(#g136)" class="pl"/><polygon points="1246.23,347.66 1244.18,311.75 1234.44,340.51" fill="url(#g137)" class="pl"/><polygon points="1246.23,347.66 1244.18,311.75 1234.44,340.51" fill="url(#g138)" class="pl"/>
<polygon points="1246.23,347.66 1234.44,340.51 1240.55,364.44" fill="url(#g139)" class="pl"/><polygon points="1246.23,347.66 1234.44,340.51 1240.55,364.44" fill="url(#g140)" class="pl"/><polygon points="1246.23,347.66 1234.44,340.51 1240.55,364.44" fill="url(#g141)" class="pl"/>
<polygon points="1244.18,311.75 1240.90,254.30 1224.67,302.23" fill="url(#g142)" class="pl"/><polygon points="1244.18,311.75 1240.90,254.30 1224.67,302.23" fill="url(#g143)" class="pl"/><polygon points="1244.18,311.75 1240.90,254.30 1224.67,302.23" fill="url(#g144)" class="pl"/>
<polygon points="1244.18,311.75 1224.67,302.23 1234.44,340.51" fill="url(#g145)" class="pl"/><polygon points="1244.18,311.75 1224.67,302.23 1234.44,340.51" fill="url(#g146)" class="pl"/><polygon points="1244.18,311.75 1224.67,302.23 1234.44,340.51" fill="url(#g147)" class="pl"/>
<polygon points="1249.10,397.93 1245.44,383.58 1243.00,390.77" fill="url(#g148)" class="pl"/><polygon points="1249.10,397.93 1245.44,383.58 1243.00,390.77" fill="url(#g149)" class="pl"/><polygon points="1249.10,397.93 1245.44,383.58 1243.00,390.77" fill="url(#g150)" class="pl"/>
<polygon points="1245.44,383.58 1240.55,364.44 1234.87,381.21" fill="url(#g151)" class="pl"/><polygon points="1245.44,383.58 1240.55,364.44 1234.87,381.21" fill="url(#g152)" class="pl"/><polygon points="1245.44,383.58 1240.55,364.44 1234.87,381.21" fill="url(#g153)" class="pl"/>
<polygon points="1245.44,383.58 1234.87,381.21 1243.00,390.77" fill="url(#g154)" class="pl"/><polygon points="1245.44,383.58 1234.87,381.21 1243.00,390.77" fill="url(#g155)" class="pl"/><polygon points="1245.44,383.58 1234.87,381.21 1243.00,390.77" fill="url(#g156)" class="pl"/>
<polygon points="1240.55,364.44 1234.44,340.51 1224.71,369.27" fill="url(#g157)" class="pl"/><polygon points="1240.55,364.44 1234.44,340.51 1224.71,369.27" fill="url(#g158)" class="pl"/><polygon points="1240.55,364.44 1234.44,340.51 1224.71,369.27" fill="url(#g159)" class="pl"/>
<polygon points="1240.55,364.44 1224.71,369.27 1234.87,381.21" fill="url(#g160)" class="pl"/><polygon points="1240.55,364.44 1224.71,369.27 1234.87,381.21" fill="url(#g161)" class="pl"/><polygon points="1240.55,364.44 1224.71,369.27 1234.87,381.21" fill="url(#g162)" class="pl"/>
<polygon points="1234.44,340.51 1224.67,302.23 1208.44,350.16" fill="url(#g163)" class="pl"/><polygon points="1234.44,340.51 1224.67,302.23 1208.44,350.16" fill="url(#g164)" class="pl"/><polygon points="1234.44,340.51 1224.67,302.23 1208.44,350.16" fill="url(#g165)" class="pl"/>
<polygon points="1234.44,340.51 1208.44,350.16 1224.71,369.27" fill="url(#g166)" class="pl"/><polygon points="1234.44,340.51 1208.44,350.16 1224.71,369.27" fill="url(#g167)" class="pl"/><polygon points="1234.44,340.51 1208.44,350.16 1224.71,369.27" fill="url(#g168)" class="pl"/>
<polygon points="1249.10,397.93 1243.00,390.77 1240.57,397.95" fill="url(#g169)" class="pl"/><polygon points="1249.10,397.93 1243.00,390.77 1240.57,397.95" fill="url(#g170)" class="pl"/><polygon points="1249.10,397.93 1243.00,390.77 1240.57,397.95" fill="url(#g171)" class="pl"/>
<polygon points="1243.00,390.77 1234.87,381.21 1229.19,397.99" fill="url(#g172)" class="pl"/><polygon points="1243.00,390.77 1234.87,381.21 1229.19,397.99" fill="url(#g173)" class="pl"/><polygon points="1243.00,390.77 1234.87,381.21 1229.19,397.99" fill="url(#g174)" class="pl"/>
<polygon points="1243.00,390.77 1229.19,397.99 1240.57,397.95" fill="url(#g175)" class="pl"/><polygon points="1243.00,390.77 1229.19,397.99 1240.57,397.95" fill="url(#g176)" class="pl"/><polygon points="1243.00,390.77 1229.19,397.99 1240.57,397.95" fill="url(#g177)" class="pl"/>
<polygon points="1234.87,381.21 1224.71,369.27 1214.97,398.03" fill="url(#g178)" class="pl"/><polygon points="1234.87,381.21 1224.71,369.27 1214.97,398.03" fill="url(#g179)" class="pl"/><polygon points="1234.87,381.21 1224.71,369.27 1214.97,398.03" fill="url(#g180)" class="pl"/>
<polygon points="1234.87,381.21 1214.97,398.03 1229.19,397.99" fill="url(#g181)" class="pl"/><polygon points="1234.87,381.21 1214.97,398.03 1229.19,397.99" fill="url(#g182)" class="pl"/><polygon points="1234.87,381.21 1214.97,398.03 1229.19,397.99" fill="url(#g183)" class="pl"/>
<polygon points="1224.71,369.27 1208.44,350.16 1192.21,398.10" fill="url(#g184)" class="pl"/><polygon points="1224.71,369.27 1208.44,350.16 1192.21,398.10" fill="url(#g185)" class="pl"/><polygon points="1224.71,369.27 1208.44,350.16 1192.21,398.10" fill="url(#g186)" class="pl"/>
<polygon points="1224.71,369.27 1192.21,398.10 1214.97,398.03" fill="url(#g187)" class="pl"/><polygon points="1224.71,369.27 1192.21,398.10 1214.97,398.03" fill="url(#g188)" class="pl"/><polygon points="1224.71,369.27 1192.21,398.10 1214.97,398.03" fill="url(#g189)" class="pl"/>
<polygon points="1249.10,397.93 1240.57,397.95 1238.16,405.08" fill="url(#g190)" class="pl"/><polygon points="1249.10,397.93 1240.57,397.95 1238.16,405.08" fill="url(#g191)" class="pl"/><polygon points="1249.10,397.93 1240.57,397.95 1238.16,405.08" fill="url(#g192)" class="pl"/>
<polygon points="1240.57,397.95 1229.19,397.99 1223.57,414.60" fill="url(#g193)" class="pl"/><polygon points="1240.57,397.95 1229.19,397.99 1223.57,414.60" fill="url(#g194)" class="pl"/><polygon points="1240.57,397.95 1229.19,397.99 1223.57,414.60" fill="url(#g195)" class="pl"/>
<polygon points="1240.57,397.95 1223.57,414.60 1238.16,405.08" fill="url(#g196)" class="pl"/><polygon points="1240.57,397.95 1223.57,414.60 1238.16,405.08" fill="url(#g197)" class="pl"/><polygon points="1240.57,397.95 1223.57,414.60 1238.16,405.08" fill="url(#g198)" class="pl"/>
<polygon points="1229.19,397.99 1214.97,398.03 1205.33,426.51" fill="url(#g199)" class="pl"/><polygon points="1229.19,397.99 1214.97,398.03 1205.33,426.51" fill="url(#g200)" class="pl"/><polygon points="1229.19,397.99 1214.97,398.03 1205.33,426.51" fill="url(#g201)" class="pl"/>
<polygon points="1229.19,397.99 1205.33,426.51 1223.57,414.60" fill="url(#g202)" class="pl"/><polygon points="1229.19,397.99 1205.33,426.51 1223.57,414.60" fill="url(#g203)" class="pl"/><polygon points="1229.19,397.99 1205.33,426.51 1223.57,414.60" fill="url(#g204)" class="pl"/>
<polygon points="1214.97,398.03 1192.21,398.10 1176.14,445.56" fill="url(#g205)" class="pl"/><polygon points="1214.97,398.03 1192.21,398.10 1176.14,445.56" fill="url(#g206)" class="pl"/><polygon points="1214.97,398.03 1192.21,398.10 1176.14,445.56" fill="url(#g207)" class="pl"/>
<polygon points="1214.97,398.03 1176.14,445.56 1205.33,426.51" fill="url(#g208)" class="pl"/><polygon points="1214.97,398.03 1176.14,445.56 1205.33,426.51" fill="url(#g209)" class="pl"/><polygon points="1214.97,398.03 1176.14,445.56 1205.33,426.51" fill="url(#g210)" class="pl"/>
<polygon points="1249.10,397.93 1238.16,405.08 1235.75,412.20" fill="url(#g211)" class="pl"/><polygon points="1249.10,397.93 1238.16,405.08 1235.75,412.20" fill="url(#g212)" class="pl"/><polygon points="1249.10,397.93 1238.16,405.08 1235.75,412.20" fill="url(#g213)" class="pl"/>
<polygon points="1238.16,405.08 1223.57,414.60 1217.94,431.22" fill="url(#g214)" class="pl"/><polygon points="1238.16,405.08 1223.57,414.60 1217.94,431.22" fill="url(#g215)" class="pl"/><polygon points="1238.16,405.08 1223.57,414.60 1217.94,431.22" fill="url(#g216)" class="pl"/>
<polygon points="1238.16,405.08 1217.94,431.22 1235.75,412.20" fill="url(#g217)" class="pl"/><polygon points="1238.16,405.08 1217.94,431.22 1235.75,412.20" fill="url(#g218)" class="pl"/><polygon points="1238.16,405.08 1217.94,431.22 1235.75,412.20" fill="url(#g219)" class="pl"/>
<polygon points="1223.57,414.60 1205.33,426.51 1195.68,454.99" fill="url(#g220)" class="pl"/><polygon points="1223.57,414.60 1205.33,426.51 1195.68,454.99" fill="url(#g221)" class="pl"/><polygon points="1223.57,414.60 1205.33,426.51 1195.68,454.99" fill="url(#g222)" class="pl"/>
<polygon points="1223.57,414.60 1195.68,454.99 1217.94,431.22" fill="url(#g223)" class="pl"/><polygon points="1223.57,414.60 1195.68,454.99 1217.94,431.22" fill="url(#g224)" class="pl"/><polygon points="1223.57,414.60 1195.68,454.99 1217.94,431.22" fill="url(#g225)" class="pl"/>
<polygon points="1205.33,426.51 1176.14,445.56 1160.07,493.03" fill="url(#g226)" class="pl"/><polygon points="1205.33,426.51 1176.14,445.56 1160.07,493.03" fill="url(#g227)" class="pl"/><polygon points="1205.33,426.51 1176.14,445.56 1160.07,493.03" fill="url(#g228)" class="pl"/>
<polygon points="1205.33,426.51 1160.07,493.03 1195.68,454.99" fill="url(#g229)" class="pl"/><polygon points="1205.33,426.51 1160.07,493.03 1195.68,454.99" fill="url(#g230)" class="pl"/><polygon points="1205.33,426.51 1160.07,493.03 1195.68,454.99" fill="url(#g231)" class="pl"/>
<polygon points="1249.10,397.93 1235.75,412.20 1233.34,419.32" fill="url(#g232)" class="pl"/><polygon points="1249.10,397.93 1235.75,412.20 1233.34,419.32" fill="url(#g233)" class="pl"/><polygon points="1249.10,397.93 1235.75,412.20 1233.34,419.32" fill="url(#g234)" class="pl"/>
<polygon points="1235.75,412.20 1217.94,431.22 1212.32,447.83" fill="url(#g235)" class="pl"/><polygon points="1235.75,412.20 1217.94,431.22 1212.32,447.83" fill="url(#g236)" class="pl"/><polygon points="1235.75,412.20 1217.94,431.22 1212.32,447.83" fill="url(#g237)" class="pl"/>
<polygon points="1235.75,412.20 1212.32,447.83 1233.34,419.32" fill="url(#g238)" class="pl"/><polygon points="1235.75,412.20 1212.32,447.83 1233.34,419.32" fill="url(#g239)" class="pl"/><polygon points="1235.75,412.20 1212.32,447.83 1233.34,419.32" fill="url(#g240)" class="pl"/>
<polygon points="1217.94,431.22 1195.68,454.99 1186.04,483.47" fill="url(#g241)" class="pl"/><polygon points="1217.94,431.22 1195.68,454.99 1186.04,483.47" fill="url(#g242)" class="pl"/><polygon points="1217.94,431.22 1195.68,454.99 1186.04,483.47" fill="url(#g243)" class="pl"/>
<polygon points="1217.94,431.22 1186.04,483.47 1212.32,447.83" fill="url(#g244)" class="pl"/><polygon points="1217.94,431.22 1186.04,483.47 1212.32,447.83" fill="url(#g245)" class="pl"/><polygon points="1217.94,431.22 1186.04,483.47 1212.32,447.83" fill="url(#g246)" class="pl"/>
<polygon points="1195.68,454.99 1160.07,493.03 1144.00,540.50" fill="url(#g247)" class="pl"/><polygon points="1195.68,454.99 1160.07,493.03 1144.00,540.50" fill="url(#g248)" class="pl"/><polygon points="1195.68,454.99 1160.07,493.03 1144.00,540.50" fill="url(#g249)" class="pl"/>
<polygon points="1195.68,454.99 1144.00,540.50 1186.04,483.47" fill="url(#g250)" class="pl"/><polygon points="1195.68,454.99 1144.00,540.50 1186.04,483.47" fill="url(#g251)" class="pl"/><polygon points="1195.68,454.99 1144.00,540.50 1186.04,483.47" fill="url(#g252)" class="pl"/>
<polygon points="1249.10,397.93 1233.34,419.32 1238.86,416.82" fill="url(#g253)" class="pl"/><polygon points="1249.10,397.93 1233.34,419.32 1238.86,416.82" fill="url(#g254)" class="pl"/><polygon points="1249.10,397.93 1233.34,419.32 1238.86,416.82" fill="url(#g255)" class="pl"/>
<polygon points="1233.34,419.32 1212.32,447.83 1225.20,442.01" fill="url(#g256)" class="pl"/><polygon points="1233.34,419.32 1212.32,447.83 1225.20,442.01" fill="url(#g257)" class="pl"/><polygon points="1233.34,419.32 1212.32,447.83 1225.20,442.01" fill="url(#g258)" class="pl"/>
<polygon points="1233.34,419.32 1225.20,442.01 1238.86,416.82" fill="url(#g259)" class="pl"/><polygon points="1233.34,419.32 1225.20,442.01 1238.86,416.82" fill="url(#g260)" class="pl"/><polygon points="1233.34,419.32 1225.20,442.01 1238.86,416.82" fill="url(#g261)" class="pl"/>
<polygon points="1212.32,447.83 1186.04,483.47 1208.12,473.49" fill="url(#g262)" class="pl"/><polygon points="1212.32,447.83 1186.04,483.47 1208.12,473.49" fill="url(#g263)" class="pl"/><polygon points="1212.32,447.83 1186.04,483.47 1208.12,473.49" fill="url(#g264)" class="pl"/>
<polygon points="1212.32,447.83 1208.12,473.49 1225.20,442.01" fill="url(#g265)" class="pl"/><polygon points="1212.32,447.83 1208.12,473.49 1225.20,442.01" fill="url(#g266)" class="pl"/><polygon points="1212.32,447.83 1208.12,473.49 1225.20,442.01" fill="url(#g267)" class="pl"/>
<polygon points="1186.04,483.47 1144.00,540.50 1180.80,523.86" fill="url(#g268)" class="pl"/><polygon points="1186.04,483.47 1144.00,540.50 1180.80,523.86" fill="url(#g269)" class="pl"/><polygon points="1186.04,483.47 1144.00,540.50 1180.80,523.86" fill="url(#g270)" class="pl"/>
<polygon points="1186.04,483.47 1180.80,523.86 1208.12,473.49" fill="url(#g271)" class="pl"/><polygon points="1186.04,483.47 1180.80,523.86 1208.12,473.49" fill="url(#g272)" class="pl"/><polygon points="1186.04,483.47 1180.80,523.86 1208.12,473.49" fill="url(#g273)" class="pl"/>
<polygon points="1249.10,397.93 1238.86,416.82 1244.38,414.32" fill="url(#g274)" class="pl"/><polygon points="1249.10,397.93 1238.86,416.82 1244.38,414.32" fill="url(#g275)" class="pl"/><polygon points="1249.10,397.93 1238.86,416.82 1244.38,414.32" fill="url(#g276)" class="pl"/>
<polygon points="1238.86,416.82 1225.20,442.01 1238.08,436.18" fill="url(#g277)" class="pl"/><polygon points="1238.86,416.82 1225.20,442.01 1238.08,436.18" fill="url(#g278)" class="pl"/><polygon points="1238.86,416.82 1225.20,442.01 1238.08,436.18" fill="url(#g279)" class="pl"/>
<polygon points="1238.86,416.82 1238.08,436.18 1244.38,414.32" fill="url(#g280)" class="pl"/><polygon points="1238.86,416.82 1238.08,436.18 1244.38,414.32" fill="url(#g281)" class="pl"/><polygon points="1238.86,416.82 1238.08,436.18 1244.38,414.32" fill="url(#g282)" class="pl"/>
<polygon points="1225.20,442.01 1208.12,473.49 1230.20,463.51" fill="url(#g283)" class="pl"/><polygon points="1225.20,442.01 1208.12,473.49 1230.20,463.51" fill="url(#g284)" class="pl"/><polygon points="1225.20,442.01 1208.12,473.49 1230.20,463.51" fill="url(#g285)" class="pl"/>
<polygon points="1225.20,442.01 1230.20,463.51 1238.08,436.18" fill="url(#g286)" class="pl"/><polygon points="1225.20,442.01 1230.20,463.51 1238.08,436.18" fill="url(#g287)" class="pl"/><polygon points="1225.20,442.01 1230.20,463.51 1238.08,436.18" fill="url(#g288)" class="pl"/>
<polygon points="1208.12,473.49 1180.80,523.86 1217.60,507.22" fill="url(#g289)" class="pl"/><polygon points="1208.12,473.49 1180.80,523.86 1217.60,507.22" fill="url(#g290)" class="pl"/><polygon points="1208.12,473.49 1180.80,523.86 1217.60,507.22" fill="url(#g291)" class="pl"/>
<polygon points="1208.12,473.49 1217.60,507.22 1230.20,463.51" fill="url(#g292)" class="pl"/><polygon points="1208.12,473.49 1217.60,507.22 1230.20,463.51" fill="url(#g293)" class="pl"/><polygon points="1208.12,473.49 1217.60,507.22 1230.20,463.51" fill="url(#g294)" class="pl"/>
<polygon points="1249.10,397.93 1244.38,414.32 1249.90,411.83" fill="url(#g295)" class="pl"/><polygon points="1249.10,397.93 1244.38,414.32 1249.90,411.83" fill="url(#g296)" class="pl"/><polygon points="1249.10,397.93 1244.38,414.32 1249.90,411.83" fill="url(#g297)" class="pl"/>
<polygon points="1244.38,414.32 1238.08,436.18 1250.96,430.36" fill="url(#g298)" class="pl"/><polygon points="1244.38,414.32 1238.08,436.18 1250.96,430.36" fill="url(#g299)" class="pl"/><polygon points="1244.38,414.32 1238.08,436.18 1250.96,430.36" fill="url(#g300)" class="pl"/>
<polygon points="1244.38,414.32 1250.96,430.36 1249.90,411.83" fill="url(#g301)" class="pl"/><polygon points="1244.38,414.32 1250.96,430.36 1249.90,411.83" fill="url(#g302)" class="pl"/><polygon points="1244.38,414.32 1250.96,430.36 1249.90,411.83" fill="url(#g303)" class="pl"/>
<polygon points="1238.08,436.18 1230.20,463.51 1252.29,453.52" fill="url(#g304)" class="pl"/><polygon points="1238.08,436.18 1230.20,463.51 1252.29,453.52" fill="url(#g305)" class="pl"/><polygon points="1238.08,436.18 1230.20,463.51 1252.29,453.52" fill="url(#g306)" class="pl"/>
<polygon points="1238.08,436.18 1252.29,453.52 1250.96,430.36" fill="url(#g307)" class="pl"/><polygon points="1238.08,436.18 1252.29,453.52 1250.96,430.36" fill="url(#g308)" class="pl"/><polygon points="1238.08,436.18 1252.29,453.52 1250.96,430.36" fill="url(#g309)" class="pl"/>
<polygon points="1230.20,463.51 1217.60,507.22 1254.41,490.59" fill="url(#g310)" class="pl"/><polygon points="1230.20,463.51 1217.60,507.22 1254.41,490.59" fill="url(#g311)" class="pl"/><polygon points="1230.20,463.51 1217.60,507.22 1254.41,490.59" fill="url(#g312)" class="pl"/>
<polygon points="1230.20,463.51 1254.41,490.59 1252.29,453.52" fill="url(#g313)" class="pl"/><polygon points="1230.20,463.51 1254.41,490.59 1252.29,453.52" fill="url(#g314)" class="pl"/><polygon points="1230.20,463.51 1254.41,490.59 1252.29,453.52" fill="url(#g315)" class="pl"/>
<polygon points="1249.10,397.93 1249.90,411.83 1260.21,407.17" fill="url(#g316)" class="pl"/><polygon points="1249.10,397.93 1249.90,411.83 1260.21,407.17" fill="url(#g317)" class="pl"/><polygon points="1249.10,397.93 1249.90,411.83 1260.21,407.17" fill="url(#g318)" class="pl"/>
<polygon points="1249.90,411.83 1250.96,430.36 1275.01,419.49" fill="url(#g319)" class="pl"/><polygon points="1249.90,411.83 1250.96,430.36 1275.01,419.49" fill="url(#g320)" class="pl"/><polygon points="1249.90,411.83 1250.96,430.36 1275.01,419.49" fill="url(#g321)" class="pl"/>
<polygon points="1249.90,411.83 1275.01,419.49 1260.21,407.17" fill="url(#g322)" class="pl"/><polygon points="1249.90,411.83 1275.01,419.49 1260.21,407.17" fill="url(#g323)" class="pl"/><polygon points="1249.90,411.83 1275.01,419.49 1260.21,407.17" fill="url(#g324)" class="pl"/>
<polygon points="1250.96,430.36 1252.29,453.52 1293.51,434.89" fill="url(#g325)" class="pl"/><polygon points="1250.96,430.36 1252.29,453.52 1293.51,434.89" fill="url(#g326)" class="pl"/><polygon points="1250.96,430.36 1252.29,453.52 1293.51,434.89" fill="url(#g327)" class="pl"/>
<polygon points="1250.96,430.36 1293.51,434.89 1275.01,419.49" fill="url(#g328)" class="pl"/><polygon points="1250.96,430.36 1293.51,434.89 1275.01,419.49" fill="url(#g329)" class="pl"/><polygon points="1250.96,430.36 1293.51,434.89 1275.01,419.49" fill="url(#g330)" class="pl"/>
<polygon points="1252.29,453.52 1254.41,490.59 1323.12,459.52" fill="url(#g331)" class="pl"/><polygon points="1252.29,453.52 1254.41,490.59 1323.12,459.52" fill="url(#g332)" class="pl"/><polygon points="1252.29,453.52 1254.41,490.59 1323.12,459.52" fill="url(#g333)" class="pl"/>
<polygon points="1252.29,453.52 1323.12,459.52 1293.51,434.89" fill="url(#g334)" class="pl"/><polygon points="1252.29,453.52 1323.12,459.52 1293.51,434.89" fill="url(#g335)" class="pl"/><polygon points="1252.29,453.52 1323.12,459.52 1293.51,434.89" fill="url(#g336)" class="pl"/>
<polygon points="1249.10,397.93 1260.21,407.17 1270.51,402.51" fill="url(#g337)" class="pl"/><polygon points="1249.10,397.93 1260.21,407.17 1270.51,402.51" fill="url(#g338)" class="pl"/><polygon points="1249.10,397.93 1260.21,407.17 1270.51,402.51" fill="url(#g339)" class="pl"/>
<polygon points="1260.21,407.17 1275.01,419.49 1299.06,408.62" fill="url(#g340)" class="pl"/><polygon points="1260.21,407.17 1275.01,419.49 1299.06,408.62" fill="url(#g341)" class="pl"/><polygon points="1260.21,407.17 1275.01,419.49 1299.06,408.62" fill="url(#g342)" class="pl"/>
<polygon points="1260.21,407.17 1299.06,408.62 1270.51,402.51" fill="url(#g343)" class="pl"/><polygon points="1260.21,407.17 1299.06,408.62 1270.51,402.51" fill="url(#g344)" class="pl"/><polygon points="1260.21,407.17 1299.06,408.62 1270.51,402.51" fill="url(#g345)" class="pl"/>
<polygon points="1275.01,419.49 1293.51,434.89 1334.74,416.25" fill="url(#g346)" class="pl"/><polygon points="1275.01,419.49 1293.51,434.89 1334.74,416.25" fill="url(#g347)" class="pl"/><polygon points="1275.01,419.49 1293.51,434.89 1334.74,416.25" fill="url(#g348)" class="pl"/>
<polygon points="1275.01,419.49 1334.74,416.25 1299.06,408.62" fill="url(#g349)" class="pl"/><polygon points="1275.01,419.49 1334.74,416.25 1299.06,408.62" fill="url(#g350)" class="pl"/><polygon points="1275.01,419.49 1334.74,416.25 1299.06,408.62" fill="url(#g351)" class="pl"/>
<polygon points="1293.51,434.89 1323.12,459.52 1391.83,428.46" fill="url(#g352)" class="pl"/><polygon points="1293.51,434.89 1323.12,459.52 1391.83,428.46" fill="url(#g353)" class="pl"/><polygon points="1293.51,434.89 1323.12,459.52 1391.83,428.46" fill="url(#g354)" class="pl"/>
<polygon points="1293.51,434.89 1391.83,428.46 1334.74,416.25" fill="url(#g355)" class="pl"/><polygon points="1293.51,434.89 1391.83,428.46 1334.74,416.25" fill="url(#g356)" class="pl"/><polygon points="1293.51,434.89 1391.83,428.46 1334.74,416.25" fill="url(#g357)" class="pl"/>
<polygon points="1249.10,397.93 1270.51,402.51 1280.82,397.85" fill="url(#g358)" class="pl"/><polygon points="1249.10,397.93 1270.51,402.51 1280.82,397.85" fill="url(#g359)" class="pl"/><polygon points="1249.10,397.93 1270.51,402.51 1280.82,397.85" fill="url(#g360)" class="pl"/>
<polygon points="1270.51,402.51 1299.06,408.62 1323.11,397.74" fill="url(#g361)" class="pl"/><polygon points="1270.51,402.51 1299.06,408.62 1323.11,397.74" fill="url(#g362)" class="pl"/><polygon points="1270.51,402.51 1299.06,408.62 1323.11,397.74" fill="url(#g363)" class="pl"/>
<polygon points="1270.51,402.51 1323.11,397.74 1280.82,397.85" fill="url(#g364)" class="pl"/><polygon points="1270.51,402.51 1323.11,397.74 1280.82,397.85" fill="url(#g365)" class="pl"/><polygon points="1270.51,402.51 1323.11,397.74 1280.82,397.85" fill="url(#g366)" class="pl"/>
<polygon points="1299.06,408.62 1334.74,416.25 1375.97,397.61" fill="url(#g367)" class="pl"/><polygon points="1299.06,408.62 1334.74,416.25 1375.97,397.61" fill="url(#g368)" class="pl"/><polygon points="1299.06,408.62 1334.74,416.25 1375.97,397.61" fill="url(#g369)" class="pl"/>
<polygon points="1299.06,408.62 1375.97,397.61 1323.11,397.74" fill="url(#g370)" class="pl"/><polygon points="1299.06,408.62 1375.97,397.61 1323.11,397.74" fill="url(#g371)" class="pl"/><polygon points="1299.06,408.62 1375.97,397.61 1323.11,397.74" fill="url(#g372)" class="pl"/>
<polygon points="1334.74,416.25 1391.83,428.46 1460.54,397.40" fill="url(#g373)" class="pl"/><polygon points="1334.74,416.25 1391.83,428.46 1460.54,397.40" fill="url(#g374)" class="pl"/><polygon points="1334.74,416.25 1391.83,428.46 1460.54,397.40" fill="url(#g375)" class="pl"/>
<polygon points="1334.74,416.25 1460.54,397.40 1375.97,397.61" fill="url(#g376)" class="pl"/><polygon points="1334.74,416.25 1460.54,397.40 1375.97,397.61" fill="url(#g377)" class="pl"/><polygon points="1334.74,416.25 1460.54,397.40 1375.97,397.61" fill="url(#g378)" class="pl"/>
<polygon points="1460.54,397.40 1505.54,397.29 1457.21,357.95" fill="url(#g379)" class="pl"/><polygon points="1460.54,397.40 1505.54,397.29 1457.21,357.95" fill="url(#g380)" class="pl"/><polygon points="1460.54,397.40 1505.54,397.29 1457.21,357.95" fill="url(#g381)" class="pl"/>
<polygon points="1460.54,397.40 1457.21,357.95 1413.02,366.44" fill="url(#g382)" class="pl"/><polygon points="1460.54,397.40 1457.21,357.95 1413.02,366.44" fill="url(#g383)" class="pl"/><polygon points="1460.54,397.40 1457.21,357.95 1413.02,366.44" fill="url(#g384)" class="pl"/>
<polygon points="1505.54,397.29 1570.54,397.12 1521.05,345.69" fill="url(#g385)" class="pl"/><polygon points="1505.54,397.29 1570.54,397.12 1521.05,345.69" fill="url(#g386)" class="pl"/><polygon points="1505.54,397.29 1570.54,397.12 1521.05,345.69" fill="url(#g387)" class="pl"/>
<polygon points="1505.54,397.29 1521.05,345.69 1457.21,357.95" fill="url(#g388)" class="pl"/><polygon points="1505.54,397.29 1521.05,345.69 1457.21,357.95" fill="url(#g389)" class="pl"/><polygon points="1505.54,397.29 1521.05,345.69 1457.21,357.95" fill="url(#g390)" class="pl"/>
<polygon points="1570.54,397.12 1660.54,396.90 1609.43,328.71" fill="url(#g391)" class="pl"/><polygon points="1570.54,397.12 1660.54,396.90 1609.43,328.71" fill="url(#g392)" class="pl"/><polygon points="1570.54,397.12 1660.54,396.90 1609.43,328.71" fill="url(#g393)" class="pl"/>
<polygon points="1570.54,397.12 1609.43,328.71 1521.05,345.69" fill="url(#g394)" class="pl"/><polygon points="1570.54,397.12 1609.43,328.71 1521.05,345.69" fill="url(#g395)" class="pl"/><polygon points="1570.54,397.12 1609.43,328.71 1521.05,345.69" fill="url(#g396)" class="pl"/>
<polygon points="1660.54,396.90 1790.54,396.57 1737.10,304.18" fill="url(#g397)" class="pl"/><polygon points="1660.54,396.90 1790.54,396.57 1737.10,304.18" fill="url(#g398)" class="pl"/><polygon points="1660.54,396.90 1790.54,396.57 1737.10,304.18" fill="url(#g399)" class="pl"/>
<polygon points="1660.54,396.90 1737.10,304.18 1609.43,328.71" fill="url(#g400)" class="pl"/><polygon points="1660.54,396.90 1737.10,304.18 1609.43,328.71" fill="url(#g401)" class="pl"/><polygon points="1660.54,396.90 1737.10,304.18 1609.43,328.71" fill="url(#g402)" class="pl"/>
<polygon points="1790.54,396.57 2160.54,395.65 2100.45,234.38" fill="url(#g403)" class="pl"/><polygon points="1790.54,396.57 2160.54,395.65 2100.45,234.38" fill="url(#g404)" class="pl"/><polygon points="1790.54,396.57 2160.54,395.65 2100.45,234.38" fill="url(#g405)" class="pl"/>
<polygon points="1790.54,396.57 2100.45,234.38 1737.10,304.18" fill="url(#g406)" class="pl"/><polygon points="1790.54,396.57 2100.45,234.38 1737.10,304.18" fill="url(#g407)" class="pl"/><polygon points="1790.54,396.57 2100.45,234.38 1737.10,304.18" fill="url(#g408)" class="pl"/>
<polygon points="1413.02,366.44 1457.21,357.95 1405.16,314.21" fill="url(#g409)" class="pl"/><polygon points="1413.02,366.44 1457.21,357.95 1405.16,314.21" fill="url(#g410)" class="pl"/><polygon points="1413.02,366.44 1457.21,357.95 1405.16,314.21" fill="url(#g411)" class="pl"/>
<polygon points="1413.02,366.44 1405.16,314.21 1365.50,335.48" fill="url(#g412)" class="pl"/><polygon points="1413.02,366.44 1405.16,314.21 1365.50,335.48" fill="url(#g413)" class="pl"/><polygon points="1413.02,366.44 1405.16,314.21 1365.50,335.48" fill="url(#g414)" class="pl"/>
<polygon points="1457.21,357.95 1521.05,345.69 1462.43,283.48" fill="url(#g415)" class="pl"/><polygon points="1457.21,357.95 1521.05,345.69 1462.43,283.48" fill="url(#g416)" class="pl"/><polygon points="1457.21,357.95 1521.05,345.69 1462.43,283.48" fill="url(#g417)" class="pl"/>
<polygon points="1457.21,357.95 1462.43,283.48 1405.16,314.21" fill="url(#g418)" class="pl"/><polygon points="1457.21,357.95 1462.43,283.48 1405.16,314.21" fill="url(#g419)" class="pl"/><polygon points="1457.21,357.95 1462.43,283.48 1405.16,314.21" fill="url(#g420)" class="pl"/>
<polygon points="1521.05,345.69 1609.43,328.71 1541.74,240.93" fill="url(#g421)" class="pl"/><polygon points="1521.05,345.69 1609.43,328.71 1541.74,240.93" fill="url(#g422)" class="pl"/><polygon points="1521.05,345.69 1609.43,328.71 1541.74,240.93" fill="url(#g423)" class="pl"/>
<polygon points="1521.05,345.69 1541.74,240.93 1462.43,283.48" fill="url(#g424)" class="pl"/><polygon points="1521.05,345.69 1541.74,240.93 1462.43,283.48" fill="url(#g425)" class="pl"/><polygon points="1521.05,345.69 1541.74,240.93 1462.43,283.48" fill="url(#g426)" class="pl"/>
<polygon points="1609.43,328.71 1737.10,304.18 1656.29,179.47" fill="url(#g427)" class="pl"/><polygon points="1609.43,328.71 1737.10,304.18 1656.29,179.47" fill="url(#g428)" class="pl"/><polygon points="1609.43,328.71 1737.10,304.18 1656.29,179.47" fill="url(#g429)" class="pl"/>
<polygon points="1609.43,328.71 1656.29,179.47 1541.74,240.93" fill="url(#g430)" class="pl"/><polygon points="1609.43,328.71 1656.29,179.47 1541.74,240.93" fill="url(#g431)" class="pl"/><polygon points="1609.43,328.71 1656.29,179.47 1541.74,240.93" fill="url(#g432)" class="pl"/>
<polygon points="1737.10,304.18 2100.45,234.38 1982.33,4.54" fill="url(#g433)" class="pl"/><polygon points="1737.10,304.18 2100.45,234.38 1982.33,4.54" fill="url(#g434)" class="pl"/><polygon points="1737.10,304.18 2100.45,234.38 1982.33,4.54" fill="url(#g435)" class="pl"/>
<polygon points="1737.10,304.18 1982.33,4.54 1656.29,179.47" fill="url(#g436)" class="pl"/><polygon points="1737.10,304.18 1982.33,4.54 1656.29,179.47" fill="url(#g437)" class="pl"/><polygon points="1737.10,304.18 1982.33,4.54 1656.29,179.47" fill="url(#g438)" class="pl"/>
<polygon points="1365.50,335.48 1405.16,314.21 1344.69,268.30" fill="url(#g439)" class="pl"/><polygon points="1365.50,335.48 1405.16,314.21 1344.69,268.30" fill="url(#g440)" class="pl"/><polygon points="1365.50,335.48 1405.16,314.21 1344.69,268.30" fill="url(#g441)" class="pl"/>
<polygon points="1365.50,335.48 1344.69,268.30 1317.98,304.52" fill="url(#g442)" class="pl"/><polygon points="1365.50,335.48 1344.69,268.30 1317.98,304.52" fill="url(#g443)" class="pl"/><polygon points="1365.50,335.48 1344.69,268.30 1317.98,304.52" fill="url(#g444)" class="pl"/>
<polygon points="1405.16,314.21 1462.43,283.48 1383.27,215.99" fill="url(#g445)" class="pl"/><polygon points="1405.16,314.21 1462.43,283.48 1383.27,215.99" fill="url(#g446)" class="pl"/><polygon points="1405.16,314.21 1462.43,283.48 1383.27,215.99" fill="url(#g447)" class="pl"/>
<polygon points="1405.16,314.21 1383.27,215.99 1344.69,268.30" fill="url(#g448)" class="pl"/><polygon points="1405.16,314.21 1383.27,215.99 1344.69,268.30" fill="url(#g449)" class="pl"/><polygon points="1405.16,314.21 1383.27,215.99 1344.69,268.30" fill="url(#g450)" class="pl"/>
<polygon points="1462.43,283.48 1541.74,240.93 1436.68,143.55" fill="url(#g451)" class="pl"/><polygon points="1462.43,283.48 1541.74,240.93 1436.68,143.55" fill="url(#g452)" class="pl"/><polygon points="1462.43,283.48 1541.74,240.93 1436.68,143.55" fill="url(#g453)" class="pl"/>
<polygon points="1462.43,283.48 1436.68,143.55 1383.27,215.99" fill="url(#g454)" class="pl"/><polygon points="1462.43,283.48 1436.68,143.55 1383.27,215.99" fill="url(#g455)" class="pl"/><polygon points="1462.43,283.48 1436.68,143.55 1383.27,215.99" fill="url(#g456)" class="pl"/>
<polygon points="1541.74,240.93 1656.29,179.47 1513.83,38.92" fill="url(#g457)" class="pl"/><polygon points="1541.74,240.93 1656.29,179.47 1513.83,38.92" fill="url(#g458)" class="pl"/><polygon points="1541.74,240.93 1656.29,179.47 1513.83,38.92" fill="url(#g459)" class="pl"/>
<polygon points="1541.74,240.93 1513.83,38.92 1436.68,143.55" fill="url(#g460)" class="pl"/><polygon points="1541.74,240.93 1513.83,38.92 1436.68,143.55" fill="url(#g461)" class="pl"/><polygon points="1541.74,240.93 1513.83,38.92 1436.68,143.55" fill="url(#g462)" class="pl"/>
<polygon points="1656.29,179.47 1982.33,4.54 1733.42,-258.87" fill="url(#g463)" class="pl"/><polygon points="1656.29,179.47 1982.33,4.54 1733.42,-258.87" fill="url(#g464)" class="pl"/><polygon points="1656.29,179.47 1982.33,4.54 1733.42,-258.87" fill="url(#g465)" class="pl"/>
<polygon points="1656.29,179.47 1733.42,-258.87 1513.83,38.92" fill="url(#g466)" class="pl"/><polygon points="1656.29,179.47 1733.42,-258.87 1513.83,38.92" fill="url(#g467)" class="pl"/><polygon points="1656.29,179.47 1733.42,-258.87 1513.83,38.92" fill="url(#g468)" class="pl"/>
<polygon points="1317.98,304.52 1344.69,268.30 1308.71,245.89" fill="url(#g469)" class="pl"/><polygon points="1317.98,304.52 1344.69,268.30 1308.71,245.89" fill="url(#g470)" class="pl"/><polygon points="1317.98,304.52 1344.69,268.30 1308.71,245.89" fill="url(#g471)" class="pl"/>
<polygon points="1317.98,304.52 1308.71,245.89 1292.29,287.78" fill="url(#g472)" class="pl"/><polygon points="1317.98,304.52 1308.71,245.89 1292.29,287.78" fill="url(#g473)" class="pl"/><polygon points="1317.98,304.52 1308.71,245.89 1292.29,287.78" fill="url(#g474)" class="pl"/>
<polygon points="1344.69,268.30 1383.27,215.99 1332.44,185.37" fill="url(#g475)" class="pl"/><polygon points="1344.69,268.30 1383.27,215.99 1332.44,185.37" fill="url(#g476)" class="pl"/><polygon points="1344.69,268.30 1383.27,215.99 1332.44,185.37" fill="url(#g477)" class="pl"/>
<polygon points="1344.69,268.30 1332.44,185.37 1308.71,245.89" fill="url(#g478)" class="pl"/><polygon points="1344.69,268.30 1332.44,185.37 1308.71,245.89" fill="url(#g479)" class="pl"/><polygon points="1344.69,268.30 1332.44,185.37 1308.71,245.89" fill="url(#g480)" class="pl"/>
<polygon points="1383.27,215.99 1436.68,143.55 1365.29,101.58" fill="url(#g481)" class="pl"/><polygon points="1383.27,215.99 1436.68,143.55 1365.29,101.58" fill="url(#g482)" class="pl"/><polygon points="1383.27,215.99 1436.68,143.55 1365.29,101.58" fill="url(#g483)" class="pl"/>
<polygon points="1383.27,215.99 1365.29,101.58 1332.44,185.37" fill="url(#g484)" class="pl"/><polygon points="1383.27,215.99 1365.29,101.58 1332.44,185.37" fill="url(#g485)" class="pl"/><polygon points="1383.27,215.99 1365.29,101.58 1332.44,185.37" fill="url(#g486)" class="pl"/>
<polygon points="1436.68,143.55 1513.83,38.92 1412.74,-19.45" fill="url(#g487)" class="pl"/><polygon points="1436.68,143.55 1513.83,38.92 1412.74,-19.45" fill="url(#g488)" class="pl"/><polygon points="1436.68,143.55 1513.83,38.92 1412.74,-19.45" fill="url(#g489)" class="pl"/>
<polygon points="1436.68,143.55 1412.74,-19.45 1365.29,101.58" fill="url(#g490)" class="pl"/><polygon points="1436.68,143.55 1412.74,-19.45 1365.29,101.58" fill="url(#g491)" class="pl"/><polygon points="1436.68,143.55 1412.74,-19.45 1365.29,101.58" fill="url(#g492)" class="pl"/>
<polygon points="1513.83,38.92 1733.42,-258.87 1547.79,-363.92" fill="url(#g493)" class="pl"/><polygon points="1513.83,38.92 1733.42,-258.87 1547.79,-363.92" fill="url(#g494)" class="pl"/><polygon points="1513.83,38.92 1733.42,-258.87 1547.79,-363.92" fill="url(#g495)" class="pl"/>
<polygon points="1513.83,38.92 1547.79,-363.92 1412.74,-19.45" fill="url(#g496)" class="pl"/><polygon points="1513.83,38.92 1547.79,-363.92 1412.74,-19.45" fill="url(#g497)" class="pl"/><polygon points="1513.83,38.92 1547.79,-363.92 1412.74,-19.45" fill="url(#g498)" class="pl"/>
<polygon points="1292.29,287.78 1308.71,245.89 1272.74,226.46" fill="url(#g499)" class="pl"/><polygon points="1292.29,287.78 1308.71,245.89 1272.74,226.46" fill="url(#g500)" class="pl"/><polygon points="1292.29,287.78 1308.71,245.89 1272.74,226.46" fill="url(#g501)" class="pl"/>
<polygon points="1292.29,287.78 1272.74,226.46 1266.59,271.04" fill="url(#g502)" class="pl"/><polygon points="1292.29,287.78 1272.74,226.46 1266.59,271.04" fill="url(#g503)" class="pl"/><polygon points="1292.29,287.78 1272.74,226.46 1266.59,271.04" fill="url(#g504)" class="pl"/>
<polygon points="1308.71,245.89 1332.44,185.37 1281.61,162.07" fill="url(#g505)" class="pl"/><polygon points="1308.71,245.89 1332.44,185.37 1281.61,162.07" fill="url(#g506)" class="pl"/><polygon points="1308.71,245.89 1332.44,185.37 1281.61,162.07" fill="url(#g507)" class="pl"/>
<polygon points="1308.71,245.89 1281.61,162.07 1272.74,226.46" fill="url(#g508)" class="pl"/><polygon points="1308.71,245.89 1281.61,162.07 1272.74,226.46" fill="url(#g509)" class="pl"/><polygon points="1308.71,245.89 1281.61,162.07 1272.74,226.46" fill="url(#g510)" class="pl"/>
<polygon points="1332.44,185.37 1365.29,101.58 1293.90,72.91" fill="url(#g511)" class="pl"/><polygon points="1332.44,185.37 1365.29,101.58 1293.90,72.91" fill="url(#g512)" class="pl"/><polygon points="1332.44,185.37 1365.29,101.58 1293.90,72.91" fill="url(#g513)" class="pl"/>
<polygon points="1332.44,185.37 1293.90,72.91 1281.61,162.07" fill="url(#g514)" class="pl"/><polygon points="1332.44,185.37 1293.90,72.91 1281.61,162.07" fill="url(#g515)" class="pl"/><polygon points="1332.44,185.37 1293.90,72.91 1281.61,162.07" fill="url(#g516)" class="pl"/>
<polygon points="1365.29,101.58 1412.74,-19.45 1311.65,-55.87" fill="url(#g517)" class="pl"/><polygon points="1365.29,101.58 1412.74,-19.45 1311.65,-55.87" fill="url(#g518)" class="pl"/><polygon points="1365.29,101.58 1412.74,-19.45 1311.65,-55.87" fill="url(#g519)" class="pl"/>
<polygon points="1365.29,101.58 1311.65,-55.87 1293.90,72.91" fill="url(#g520)" class="pl"/><polygon points="1365.29,101.58 1311.65,-55.87 1293.90,72.91" fill="url(#g521)" class="pl"/><polygon points="1365.29,101.58 1311.65,-55.87 1293.90,72.91" fill="url(#g522)" class="pl"/>
<polygon points="1412.74,-19.45 1547.79,-363.92 1362.18,-422.40" fill="url(#g523)" class="pl"/><polygon points="1412.74,-19.45 1547.79,-363.92 1362.18,-422.40" fill="url(#g524)" class="pl"/><polygon points="1412.74,-19.45 1547.79,-363.92 1362.18,-422.40" fill="url(#g525)" class="pl"/>
<polygon points="1412.74,-19.45 1362.18,-422.40 1311.65,-55.87" fill="url(#g526)" class="pl"/><polygon points="1412.74,-19.45 1362.18,-422.40 1311.65,-55.87" fill="url(#g527)" class="pl"/><polygon points="1412.74,-19.45 1362.18,-422.40 1311.65,-55.87" fill="url(#g528)" class="pl"/>
<polygon points="1266.59,271.04 1272.74,226.46 1238.33,209.37" fill="url(#g529)" class="pl"/><polygon points="1266.59,271.04 1272.74,226.46 1238.33,209.37" fill="url(#g530)" class="pl"/><polygon points="1266.59,271.04 1272.74,226.46 1238.33,209.37" fill="url(#g531)" class="pl"/>
<polygon points="1266.59,271.04 1238.33,209.37 1240.90,254.30" fill="url(#g532)" class="pl"/><polygon points="1266.59,271.04 1238.33,209.37 1240.90,254.30" fill="url(#g533)" class="pl"/><polygon points="1266.59,271.04 1238.33,209.37 1240.90,254.30" fill="url(#g534)" class="pl"/>
<polygon points="1272.74,226.46 1281.61,162.07 1234.63,144.48" fill="url(#g535)" class="pl"/><polygon points="1272.74,226.46 1281.61,162.07 1234.63,144.48" fill="url(#g536)" class="pl"/><polygon points="1272.74,226.46 1281.61,162.07 1234.63,144.48" fill="url(#g537)" class="pl"/>
<polygon points="1272.74,226.46 1234.63,144.48 1238.33,209.37" fill="url(#g538)" class="pl"/><polygon points="1272.74,226.46 1234.63,144.48 1238.33,209.37" fill="url(#g539)" class="pl"/><polygon points="1272.74,226.46 1234.63,144.48 1238.33,209.37" fill="url(#g540)" class="pl"/>
<polygon points="1281.61,162.07 1293.90,72.91 1229.49,54.63" fill="url(#g541)" class="pl"/><polygon points="1281.61,162.07 1293.90,72.91 1229.49,54.63" fill="url(#g542)" class="pl"/><polygon points="1281.61,162.07 1293.90,72.91 1229.49,54.63" fill="url(#g543)" class="pl"/>
<polygon points="1281.61,162.07 1229.49,54.63 1234.63,144.48" fill="url(#g544)" class="pl"/><polygon points="1281.61,162.07 1229.49,54.63 1234.63,144.48" fill="url(#g545)" class="pl"/><polygon points="1281.61,162.07 1229.49,54.63 1234.63,144.48" fill="url(#g546)" class="pl"/>
<polygon points="1293.90,72.91 1311.65,-55.87 1222.08,-75.16" fill="url(#g547)" class="pl"/><polygon points="1293.90,72.91 1311.65,-55.87 1222.08,-75.16" fill="url(#g548)" class="pl"/><polygon points="1293.90,72.91 1311.65,-55.87 1222.08,-75.16" fill="url(#g549)" class="pl"/>
<polygon points="1293.90,72.91 1222.08,-75.16 1229.49,54.63" fill="url(#g550)" class="pl"/><polygon points="1293.90,72.91 1222.08,-75.16 1229.49,54.63" fill="url(#g551)" class="pl"/><polygon points="1293.90,72.91 1222.08,-75.16 1229.49,54.63" fill="url(#g552)" class="pl"/>
<polygon points="1311.65,-55.87 1362.18,-422.40 1200.98,-444.56" fill="url(#g553)" class="pl"/><polygon points="1311.65,-55.87 1362.18,-422.40 1200.98,-444.56" fill="url(#g554)" class="pl"/><polygon points="1311.65,-55.87 1362.18,-422.40 1200.98,-444.56" fill="url(#g555)" class="pl"/>
<polygon points="1311.65,-55.87 1200.98,-444.56 1222.08,-75.16" fill="url(#g556)" class="pl"/><polygon points="1311.65,-55.87 1200.98,-444.56 1222.08,-75.16" fill="url(#g557)" class="pl"/><polygon points="1311.65,-55.87 1200.98,-444.56 1222.08,-75.16" fill="url(#g558)" class="pl"/>
<polygon points="1240.90,254.30 1238.33,209.37 1213.54,258.63" fill="url(#g559)" class="pl"/><polygon points="1240.90,254.30 1238.33,209.37 1213.54,258.63" fill="url(#g560)" class="pl"/><polygon points="1240.90,254.30 1238.33,209.37 1213.54,258.63" fill="url(#g561)" class="pl"/>
<polygon points="1240.90,254.30 1213.54,258.63 1224.67,302.23" fill="url(#g562)" class="pl"/><polygon points="1240.90,254.30 1213.54,258.63 1224.67,302.23" fill="url(#g563)" class="pl"/><polygon points="1240.90,254.30 1213.54,258.63 1224.67,302.23" fill="url(#g564)" class="pl"/>
<polygon points="1238.33,209.37 1234.63,144.48 1197.46,195.65" fill="url(#g565)" class="pl"/><polygon points="1238.33,209.37 1234.63,144.48 1197.46,195.65" fill="url(#g566)" class="pl"/><polygon points="1238.33,209.37 1234.63,144.48 1197.46,195.65" fill="url(#g567)" class="pl"/>
<polygon points="1238.33,209.37 1197.46,195.65 1213.54,258.63" fill="url(#g568)" class="pl"/><polygon points="1238.33,209.37 1197.46,195.65 1213.54,258.63" fill="url(#g569)" class="pl"/><polygon points="1238.33,209.37 1197.46,195.65 1213.54,258.63" fill="url(#g570)" class="pl"/>
<polygon points="1234.63,144.48 1229.49,54.63 1175.20,108.45" fill="url(#g571)" class="pl"/><polygon points="1234.63,144.48 1229.49,54.63 1175.20,108.45" fill="url(#g572)" class="pl"/><polygon points="1234.63,144.48 1229.49,54.63 1175.20,108.45" fill="url(#g573)" class="pl"/>
<polygon points="1234.63,144.48 1175.20,108.45 1197.46,195.65" fill="url(#g574)" class="pl"/><polygon points="1234.63,144.48 1175.20,108.45 1197.46,195.65" fill="url(#g575)" class="pl"/><polygon points="1234.63,144.48 1175.20,108.45 1197.46,195.65" fill="url(#g576)" class="pl"/>
<polygon points="1229.49,54.63 1222.08,-75.16 1143.04,-17.51" fill="url(#g577)" class="pl"/><polygon points="1229.49,54.63 1222.08,-75.16 1143.04,-17.51" fill="url(#g578)" class="pl"/><polygon points="1229.49,54.63 1222.08,-75.16 1143.04,-17.51" fill="url(#g579)" class="pl"/>
<polygon points="1229.49,54.63 1143.04,-17.51 1175.20,108.45" fill="url(#g580)" class="pl"/><polygon points="1229.49,54.63 1143.04,-17.51 1175.20,108.45" fill="url(#g581)" class="pl"/><polygon points="1229.49,54.63 1143.04,-17.51 1175.20,108.45" fill="url(#g582)" class="pl"/>
<polygon points="1222.08,-75.16 1200.98,-444.56 1051.51,-376.01" fill="url(#g583)" class="pl"/><polygon points="1222.08,-75.16 1200.98,-444.56 1051.51,-376.01" fill="url(#g584)" class="pl"/><polygon points="1222.08,-75.16 1200.98,-444.56 1051.51,-376.01" fill="url(#g585)" class="pl"/>
<polygon points="1222.08,-75.16 1051.51,-376.01 1143.04,-17.51" fill="url(#g586)" class="pl"/><polygon points="1222.08,-75.16 1051.51,-376.01 1143.04,-17.51" fill="url(#g587)" class="pl"/><polygon points="1222.08,-75.16 1051.51,-376.01 1143.04,-17.51" fill="url(#g588)" class="pl"/>
<polygon points="1224.67,302.23 1213.54,258.63 1179.27,315.90" fill="url(#g589)" class="pl"/><polygon points="1224.67,302.23 1213.54,258.63 1179.27,315.90" fill="url(#g590)" class="pl"/><polygon points="1224.67,302.23 1213.54,258.63 1179.27,315.90" fill="url(#g591)" class="pl"/>
<polygon points="1224.67,302.23 1179.27,315.90 1208.44,350.16" fill="url(#g592)" class="pl"/><polygon points="1224.67,302.23 1179.27,315.90 1208.44,350.16" fill="url(#g593)" class="pl"/><polygon points="1224.67,302.23 1179.27,315.90 1208.44,350.16" fill="url(#g594)" class="pl"/>
<polygon points="1213.54,258.63 1197.46,195.65 1137.14,266.40" fill="url(#g595)" class="pl"/><polygon points="1213.54,258.63 1197.46,195.65 1137.14,266.40" fill="url(#g596)" class="pl"/><polygon points="1213.54,258.63 1197.46,195.65 1137.14,266.40" fill="url(#g597)" class="pl"/>
<polygon points="1213.54,258.63 1137.14,266.40 1179.27,315.90" fill="url(#g598)" class="pl"/><polygon points="1213.54,258.63 1137.14,266.40 1179.27,315.90" fill="url(#g599)" class="pl"/><polygon points="1213.54,258.63 1137.14,266.40 1179.27,315.90" fill="url(#g600)" class="pl"/>
<polygon points="1197.46,195.65 1175.20,108.45 1078.80,197.87" fill="url(#g601)" class="pl"/><polygon points="1197.46,195.65 1175.20,108.45 1078.80,197.87" fill="url(#g602)" class="pl"/><polygon points="1197.46,195.65 1175.20,108.45 1078.80,197.87" fill="url(#g603)" class="pl"/>
<polygon points="1197.46,195.65 1078.80,197.87 1137.14,266.40" fill="url(#g604)" class="pl"/><polygon points="1197.46,195.65 1078.80,197.87 1137.14,266.40" fill="url(#g605)" class="pl"/><polygon points="1197.46,195.65 1078.80,197.87 1137.14,266.40" fill="url(#g606)" class="pl"/>
<polygon points="1175.20,108.45 1143.04,-17.51 994.53,98.88" fill="url(#g607)" class="pl"/><polygon points="1175.20,108.45 1143.04,-17.51 994.53,98.88" fill="url(#g608)" class="pl"/><polygon points="1175.20,108.45 1143.04,-17.51 994.53,98.88" fill="url(#g609)" class="pl"/>
<polygon points="1175.20,108.45 994.53,98.88 1078.80,197.87" fill="url(#g610)" class="pl"/><polygon points="1175.20,108.45 994.53,98.88 1078.80,197.87" fill="url(#g611)" class="pl"/><polygon points="1175.20,108.45 994.53,98.88 1078.80,197.87" fill="url(#g612)" class="pl"/>
<polygon points="1143.04,-17.51 1051.51,-376.01 754.70,-182.86" fill="url(#g613)" class="pl"/><polygon points="1143.04,-17.51 1051.51,-376.01 754.70,-182.86" fill="url(#g614)" class="pl"/><polygon points="1143.04,-17.51 1051.51,-376.01 754.70,-182.86" fill="url(#g615)" class="pl"/>
<polygon points="1143.04,-17.51 754.70,-182.86 994.53,98.88" fill="url(#g616)" class="pl"/><polygon points="1143.04,-17.51 754.70,-182.86 994.53,98.88" fill="url(#g617)" class="pl"/><polygon points="1143.04,-17.51 754.70,-182.86 994.53,98.88" fill="url(#g618)" class="pl"/>
<polygon points="1208.44,350.16 1179.27,315.90 1147.21,398.23" fill="url(#g619)" class="pl"/><polygon points="1208.44,350.16 1179.27,315.90 1147.21,398.23" fill="url(#g620)" class="pl"/><polygon points="1208.44,350.16 1179.27,315.90 1147.21,398.23" fill="url(#g621)" class="pl"/>
<polygon points="1208.44,350.16 1147.21,398.23 1192.21,398.10" fill="url(#g622)" class="pl"/><polygon points="1208.44,350.16 1147.21,398.23 1192.21,398.10" fill="url(#g623)" class="pl"/><polygon points="1208.44,350.16 1147.21,398.23 1192.21,398.10" fill="url(#g624)" class="pl"/>
<polygon points="1179.27,315.90 1137.14,266.40 1082.21,398.42" fill="url(#g625)" class="pl"/><polygon points="1179.27,315.90 1137.14,266.40 1082.21,398.42" fill="url(#g626)" class="pl"/><polygon points="1179.27,315.90 1137.14,266.40 1082.21,398.42" fill="url(#g627)" class="pl"/>
<polygon points="1179.27,315.90 1082.21,398.42 1147.21,398.23" fill="url(#g628)" class="pl"/><polygon points="1179.27,315.90 1082.21,398.42 1147.21,398.23" fill="url(#g629)" class="pl"/><polygon points="1179.27,315.90 1082.21,398.42 1147.21,398.23" fill="url(#g630)" class="pl"/>
<polygon points="1137.14,266.40 1078.80,197.87 992.21,398.68" fill="url(#g631)" class="pl"/><polygon points="1137.14,266.40 1078.80,197.87 992.21,398.68" fill="url(#g632)" class="pl"/><polygon points="1137.14,266.40 1078.80,197.87 992.21,398.68" fill="url(#g633)" class="pl"/>
<polygon points="1137.14,266.40 992.21,398.68 1082.21,398.42" fill="url(#g634)" class="pl"/><polygon points="1137.14,266.40 992.21,398.68 1082.21,398.42" fill="url(#g635)" class="pl"/><polygon points="1137.14,266.40 992.21,398.68 1082.21,398.42" fill="url(#g636)" class="pl"/>
<polygon points="1078.80,197.87 994.53,98.88 862.22,399.06" fill="url(#g637)" class="pl"/><polygon points="1078.80,197.87 994.53,98.88 862.22,399.06" fill="url(#g638)" class="pl"/><polygon points="1078.80,197.87 994.53,98.88 862.22,399.06" fill="url(#g639)" class="pl"/>
<polygon points="1078.80,197.87 862.22,399.06 992.21,398.68" fill="url(#g640)" class="pl"/><polygon points="1078.80,197.87 862.22,399.06 992.21,398.68" fill="url(#g641)" class="pl"/><polygon points="1078.80,197.87 862.22,399.06 992.21,398.68" fill="url(#g642)" class="pl"/>
<polygon points="994.53,98.88 754.70,-182.86 492.22,400.15" fill="url(#g643)" class="pl"/><polygon points="994.53,98.88 754.70,-182.86 492.22,400.15" fill="url(#g644)" class="pl"/><polygon points="994.53,98.88 754.70,-182.86 492.22,400.15" fill="url(#g645)" class="pl"/>
<polygon points="994.53,98.88 492.22,400.15 862.22,399.06" fill="url(#g646)" class="pl"/><polygon points="994.53,98.88 492.22,400.15 862.22,399.06" fill="url(#g647)" class="pl"/><polygon points="994.53,98.88 492.22,400.15 862.22,399.06" fill="url(#g648)" class="pl"/>
<polygon points="1192.21,398.10 1147.21,398.23 1138.46,470.16" fill="url(#g649)" class="pl"/><polygon points="1192.21,398.10 1147.21,398.23 1138.46,470.16" fill="url(#g650)" class="pl"/><polygon points="1192.21,398.10 1147.21,398.23 1138.46,470.16" fill="url(#g651)" class="pl"/>
<polygon points="1192.21,398.10 1138.46,470.16 1176.14,445.56" fill="url(#g652)" class="pl"/><polygon points="1192.21,398.10 1138.46,470.16 1176.14,445.56" fill="url(#g653)" class="pl"/><polygon points="1192.21,398.10 1138.46,470.16 1176.14,445.56" fill="url(#g654)" class="pl"/>
<polygon points="1147.21,398.23 1082.21,398.42 1084.03,505.70" fill="url(#g655)" class="pl"/><polygon points="1147.21,398.23 1082.21,398.42 1084.03,505.70" fill="url(#g656)" class="pl"/><polygon points="1147.21,398.23 1082.21,398.42 1084.03,505.70" fill="url(#g657)" class="pl"/>
<polygon points="1147.21,398.23 1084.03,505.70 1138.46,470.16" fill="url(#g658)" class="pl"/><polygon points="1147.21,398.23 1084.03,505.70 1138.46,470.16" fill="url(#g659)" class="pl"/><polygon points="1147.21,398.23 1084.03,505.70 1138.46,470.16" fill="url(#g660)" class="pl"/>
<polygon points="1082.21,398.42 992.21,398.68 1008.67,554.90" fill="url(#g661)" class="pl"/><polygon points="1082.21,398.42 992.21,398.68 1008.67,554.90" fill="url(#g662)" class="pl"/><polygon points="1082.21,398.42 992.21,398.68 1008.67,554.90" fill="url(#g663)" class="pl"/>
<polygon points="1082.21,398.42 1008.67,554.90 1084.03,505.70" fill="url(#g664)" class="pl"/><polygon points="1082.21,398.42 1008.67,554.90 1084.03,505.70" fill="url(#g665)" class="pl"/><polygon points="1082.21,398.42 1008.67,554.90 1084.03,505.70" fill="url(#g666)" class="pl"/>
<polygon points="992.21,398.68 862.22,399.06 899.82,625.97" fill="url(#g667)" class="pl"/><polygon points="992.21,398.68 862.22,399.06 899.82,625.97" fill="url(#g668)" class="pl"/><polygon points="992.21,398.68 862.22,399.06 899.82,625.97" fill="url(#g669)" class="pl"/>
<polygon points="992.21,398.68 899.82,625.97 1008.67,554.90" fill="url(#g670)" class="pl"/><polygon points="992.21,398.68 899.82,625.97 1008.67,554.90" fill="url(#g671)" class="pl"/><polygon points="992.21,398.68 899.82,625.97 1008.67,554.90" fill="url(#g672)" class="pl"/>
<polygon points="862.22,399.06 492.22,400.15 590.00,828.24" fill="url(#g673)" class="pl"/><polygon points="862.22,399.06 492.22,400.15 590.00,828.24" fill="url(#g674)" class="pl"/><polygon points="862.22,399.06 492.22,400.15 590.00,828.24" fill="url(#g675)" class="pl"/>
<polygon points="862.22,399.06 590.00,828.24 899.82,625.97" fill="url(#g676)" class="pl"/><polygon points="862.22,399.06 590.00,828.24 899.82,625.97" fill="url(#g677)" class="pl"/><polygon points="862.22,399.06 590.00,828.24 899.82,625.97" fill="url(#g678)" class="pl"/>
<polygon points="1176.14,445.56 1138.46,470.16 1129.32,525.88" fill="url(#g679)" class="pl"/><polygon points="1176.14,445.56 1138.46,470.16 1129.32,525.88" fill="url(#g680)" class="pl"/><polygon points="1176.14,445.56 1138.46,470.16 1129.32,525.88" fill="url(#g681)" class="pl"/>
<polygon points="1176.14,445.56 1129.32,525.88 1160.07,493.03" fill="url(#g682)" class="pl"/><polygon points="1176.14,445.56 1129.32,525.88 1160.07,493.03" fill="url(#g683)" class="pl"/><polygon points="1176.14,445.56 1129.32,525.88 1160.07,493.03" fill="url(#g684)" class="pl"/>
<polygon points="1138.46,470.16 1084.03,505.70 1084.89,573.33" fill="url(#g685)" class="pl"/><polygon points="1138.46,470.16 1084.03,505.70 1084.89,573.33" fill="url(#g686)" class="pl"/><polygon points="1138.46,470.16 1084.03,505.70 1084.89,573.33" fill="url(#g687)" class="pl"/>
<polygon points="1138.46,470.16 1084.89,573.33 1129.32,525.88" fill="url(#g688)" class="pl"/><polygon points="1138.46,470.16 1084.89,573.33 1129.32,525.88" fill="url(#g689)" class="pl"/><polygon points="1138.46,470.16 1084.89,573.33 1129.32,525.88" fill="url(#g690)" class="pl"/>
<polygon points="1084.03,505.70 1008.67,554.90 1023.39,639.04" fill="url(#g691)" class="pl"/><polygon points="1084.03,505.70 1008.67,554.90 1023.39,639.04" fill="url(#g692)" class="pl"/><polygon points="1084.03,505.70 1008.67,554.90 1023.39,639.04" fill="url(#g693)" class="pl"/>
<polygon points="1084.03,505.70 1023.39,639.04 1084.89,573.33" fill="url(#g694)" class="pl"/><polygon points="1084.03,505.70 1023.39,639.04 1084.89,573.33" fill="url(#g695)" class="pl"/><polygon points="1084.03,505.70 1023.39,639.04 1084.89,573.33" fill="url(#g696)" class="pl"/>
<polygon points="1008.67,554.90 899.82,625.97 934.54,733.94" fill="url(#g697)" class="pl"/><polygon points="1008.67,554.90 899.82,625.97 934.54,733.94" fill="url(#g698)" class="pl"/><polygon points="1008.67,554.90 899.82,625.97 934.54,733.94" fill="url(#g699)" class="pl"/>
<polygon points="1008.67,554.90 934.54,733.94 1023.39,639.04" fill="url(#g700)" class="pl"/><polygon points="1008.67,554.90 934.54,733.94 1023.39,639.04" fill="url(#g701)" class="pl"/><polygon points="1008.67,554.90 934.54,733.94 1023.39,639.04" fill="url(#g702)" class="pl"/>
<polygon points="899.82,625.97 590.00,828.24 681.67,1004.04" fill="url(#g703)" class="pl"/><polygon points="899.82,625.97 590.00,828.24 681.67,1004.04" fill="url(#g704)" class="pl"/><polygon points="899.82,625.97 590.00,828.24 681.67,1004.04" fill="url(#g705)" class="pl"/>
<polygon points="899.82,625.97 681.67,1004.04 934.54,733.94" fill="url(#g706)" class="pl"/><polygon points="899.82,625.97 681.67,1004.04 934.54,733.94" fill="url(#g707)" class="pl"/><polygon points="899.82,625.97 681.67,1004.04 934.54,733.94" fill="url(#g708)" class="pl"/>
<polygon points="1160.07,493.03 1129.32,525.88 1117.30,576.72" fill="url(#g709)" class="pl"/><polygon points="1160.07,493.03 1129.32,525.88 1117.30,576.72" fill="url(#g710)" class="pl"/><polygon points="1160.07,493.03 1129.32,525.88 1117.30,576.72" fill="url(#g711)" class="pl"/>
<polygon points="1160.07,493.03 1117.30,576.72 1144.00,540.50" fill="url(#g712)" class="pl"/><polygon points="1160.07,493.03 1117.30,576.72 1144.00,540.50" fill="url(#g713)" class="pl"/><polygon points="1160.07,493.03 1117.30,576.72 1144.00,540.50" fill="url(#g714)" class="pl"/>
<polygon points="1129.32,525.88 1084.89,573.33 1078.73,629.04" fill="url(#g715)" class="pl"/><polygon points="1129.32,525.88 1084.89,573.33 1078.73,629.04" fill="url(#g716)" class="pl"/><polygon points="1129.32,525.88 1084.89,573.33 1078.73,629.04" fill="url(#g717)" class="pl"/>
<polygon points="1129.32,525.88 1078.73,629.04 1117.30,576.72" fill="url(#g718)" class="pl"/><polygon points="1129.32,525.88 1078.73,629.04 1117.30,576.72" fill="url(#g719)" class="pl"/><polygon points="1129.32,525.88 1078.73,629.04 1117.30,576.72" fill="url(#g720)" class="pl"/>
<polygon points="1084.89,573.33 1023.39,639.04 1025.32,701.48" fill="url(#g721)" class="pl"/><polygon points="1084.89,573.33 1023.39,639.04 1025.32,701.48" fill="url(#g722)" class="pl"/><polygon points="1084.89,573.33 1023.39,639.04 1025.32,701.48" fill="url(#g723)" class="pl"/>
<polygon points="1084.89,573.33 1025.32,701.48 1078.73,629.04" fill="url(#g724)" class="pl"/><polygon points="1084.89,573.33 1025.32,701.48 1078.73,629.04" fill="url(#g725)" class="pl"/><polygon points="1084.89,573.33 1025.32,701.48 1078.73,629.04" fill="url(#g726)" class="pl"/>
<polygon points="1023.39,639.04 934.54,733.94 948.18,806.12" fill="url(#g727)" class="pl"/><polygon points="1023.39,639.04 934.54,733.94 948.18,806.12" fill="url(#g728)" class="pl"/><polygon points="1023.39,639.04 934.54,733.94 948.18,806.12" fill="url(#g729)" class="pl"/>
<polygon points="1023.39,639.04 948.18,806.12 1025.32,701.48" fill="url(#g730)" class="pl"/><polygon points="1023.39,639.04 948.18,806.12 1025.32,701.48" fill="url(#g731)" class="pl"/><polygon points="1023.39,639.04 948.18,806.12 1025.32,701.48" fill="url(#g732)" class="pl"/>
<polygon points="934.54,733.94 681.67,1004.04 728.63,1103.94" fill="url(#g733)" class="pl"/><polygon points="934.54,733.94 681.67,1004.04 728.63,1103.94" fill="url(#g734)" class="pl"/><polygon points="934.54,733.94 681.67,1004.04 728.63,1103.94" fill="url(#g735)" class="pl"/>
<polygon points="934.54,733.94 728.63,1103.94 948.18,806.12" fill="url(#g736)" class="pl"/><polygon points="934.54,733.94 728.63,1103.94 948.18,806.12" fill="url(#g737)" class="pl"/><polygon points="934.54,733.94 728.63,1103.94 948.18,806.12" fill="url(#g738)" class="pl"/>
<polygon points="1144.00,540.50 1117.30,576.72 1159.35,563.42" fill="url(#g739)" class="pl"/><polygon points="1144.00,540.50 1117.30,576.72 1159.35,563.42" fill="url(#g740)" class="pl"/><polygon points="1144.00,540.50 1117.30,576.72 1159.35,563.42" fill="url(#g741)" class="pl"/>
<polygon points="1144.00,540.50 1159.35,563.42 1180.80,523.86" fill="url(#g742)" class="pl"/><polygon points="1144.00,540.50 1159.35,563.42 1180.80,523.86" fill="url(#g743)" class="pl"/><polygon points="1144.00,540.50 1159.35,563.42 1180.80,523.86" fill="url(#g744)" class="pl"/>
<polygon points="1117.30,576.72 1078.73,629.04 1128.36,620.56" fill="url(#g745)" class="pl"/><polygon points="1117.30,576.72 1078.73,629.04 1128.36,620.56" fill="url(#g746)" class="pl"/><polygon points="1117.30,576.72 1078.73,629.04 1128.36,620.56" fill="url(#g747)" class="pl"/>
<polygon points="1117.30,576.72 1128.36,620.56 1159.35,563.42" fill="url(#g748)" class="pl"/><polygon points="1117.30,576.72 1128.36,620.56 1159.35,563.42" fill="url(#g749)" class="pl"/><polygon points="1117.30,576.72 1128.36,620.56 1159.35,563.42" fill="url(#g750)" class="pl"/>
<polygon points="1078.73,629.04 1025.32,701.48 1085.45,699.67" fill="url(#g751)" class="pl"/><polygon points="1078.73,629.04 1025.32,701.48 1085.45,699.67" fill="url(#g752)" class="pl"/><polygon points="1078.73,629.04 1025.32,701.48 1085.45,699.67" fill="url(#g753)" class="pl"/>
<polygon points="1078.73,629.04 1085.45,699.67 1128.36,620.56" fill="url(#g754)" class="pl"/><polygon points="1078.73,629.04 1085.45,699.67 1128.36,620.56" fill="url(#g755)" class="pl"/><polygon points="1078.73,629.04 1085.45,699.67 1128.36,620.56" fill="url(#g756)" class="pl"/>
<polygon points="1025.32,701.48 948.18,806.12 1023.47,813.94" fill="url(#g757)" class="pl"/><polygon points="1025.32,701.48 948.18,806.12 1023.47,813.94" fill="url(#g758)" class="pl"/><polygon points="1025.32,701.48 948.18,806.12 1023.47,813.94" fill="url(#g759)" class="pl"/>
<polygon points="1025.32,701.48 1023.47,813.94 1085.45,699.67" fill="url(#g760)" class="pl"/><polygon points="1025.32,701.48 1023.47,813.94 1085.45,699.67" fill="url(#g761)" class="pl"/><polygon points="1025.32,701.48 1023.47,813.94 1085.45,699.67" fill="url(#g762)" class="pl"/>
<polygon points="948.18,806.12 728.63,1103.94 847.07,1139.19" fill="url(#g763)" class="pl"/><polygon points="948.18,806.12 728.63,1103.94 847.07,1139.19" fill="url(#g764)" class="pl"/><polygon points="948.18,806.12 728.63,1103.94 847.07,1139.19" fill="url(#g765)" class="pl"/>
<polygon points="948.18,806.12 847.07,1139.19 1023.47,813.94" fill="url(#g766)" class="pl"/><polygon points="948.18,806.12 847.07,1139.19 1023.47,813.94" fill="url(#g767)" class="pl"/><polygon points="948.18,806.12 847.07,1139.19 1023.47,813.94" fill="url(#g768)" class="pl"/>
<polygon points="1180.80,523.86 1159.35,563.42 1205.14,550.47" fill="url(#g769)" class="pl"/><polygon points="1180.80,523.86 1159.35,563.42 1205.14,550.47" fill="url(#g770)" class="pl"/><polygon points="1180.80,523.86 1159.35,563.42 1205.14,550.47" fill="url(#g771)" class="pl"/>
<polygon points="1180.80,523.86 1205.14,550.47 1217.60,507.22" fill="url(#g772)" class="pl"/><polygon points="1180.80,523.86 1205.14,550.47 1217.60,507.22" fill="url(#g773)" class="pl"/><polygon points="1180.80,523.86 1205.14,550.47 1217.60,507.22" fill="url(#g774)" class="pl"/>
<polygon points="1159.35,563.42 1128.36,620.56 1187.14,612.92" fill="url(#g775)" class="pl"/><polygon points="1159.35,563.42 1128.36,620.56 1187.14,612.92" fill="url(#g776)" class="pl"/><polygon points="1159.35,563.42 1128.36,620.56 1187.14,612.92" fill="url(#g777)" class="pl"/>
<polygon points="1159.35,563.42 1187.14,612.92 1205.14,550.47" fill="url(#g778)" class="pl"/><polygon points="1159.35,563.42 1187.14,612.92 1205.14,550.47" fill="url(#g779)" class="pl"/><polygon points="1159.35,563.42 1187.14,612.92 1205.14,550.47" fill="url(#g780)" class="pl"/>
<polygon points="1128.36,620.56 1085.45,699.67 1162.22,699.40" fill="url(#g781)" class="pl"/><polygon points="1128.36,620.56 1085.45,699.67 1162.22,699.40" fill="url(#g782)" class="pl"/><polygon points="1128.36,620.56 1085.45,699.67 1162.22,699.40" fill="url(#g783)" class="pl"/>
<polygon points="1128.36,620.56 1162.22,699.40 1187.14,612.92" fill="url(#g784)" class="pl"/><polygon points="1128.36,620.56 1162.22,699.40 1187.14,612.92" fill="url(#g785)" class="pl"/><polygon points="1128.36,620.56 1162.22,699.40 1187.14,612.92" fill="url(#g786)" class="pl"/>
<polygon points="1085.45,699.67 1023.47,813.94 1126.22,824.32" fill="url(#g787)" class="pl"/><polygon points="1085.45,699.67 1023.47,813.94 1126.22,824.32" fill="url(#g788)" class="pl"/><polygon points="1085.45,699.67 1023.47,813.94 1126.22,824.32" fill="url(#g789)" class="pl"/>
<polygon points="1085.45,699.67 1126.22,824.32 1162.22,699.40" fill="url(#g790)" class="pl"/><polygon points="1085.45,699.67 1126.22,824.32 1162.22,699.40" fill="url(#g791)" class="pl"/><polygon points="1085.45,699.67 1126.22,824.32 1162.22,699.40" fill="url(#g792)" class="pl"/>
<polygon points="1023.47,813.94 847.07,1139.19 1023.75,1179.85" fill="url(#g793)" class="pl"/><polygon points="1023.47,813.94 847.07,1139.19 1023.75,1179.85" fill="url(#g794)" class="pl"/><polygon points="1023.47,813.94 847.07,1139.19 1023.75,1179.85" fill="url(#g795)" class="pl"/>
<polygon points="1023.47,813.94 1023.75,1179.85 1126.22,824.32" fill="url(#g796)" class="pl"/><polygon points="1023.47,813.94 1023.75,1179.85 1126.22,824.32" fill="url(#g797)" class="pl"/><polygon points="1023.47,813.94 1023.75,1179.85 1126.22,824.32" fill="url(#g798)" class="pl"/>
<polygon points="1217.60,507.22 1205.14,550.47 1256.98,535.51" fill="url(#g799)" class="pl"/><polygon points="1217.60,507.22 1205.14,550.47 1256.98,535.51" fill="url(#g800)" class="pl"/><polygon points="1217.60,507.22 1205.14,550.47 1256.98,535.51" fill="url(#g801)" class="pl"/>
<polygon points="1217.60,507.22 1256.98,535.51 1254.41,490.59" fill="url(#g802)" class="pl"/><polygon points="1217.60,507.22 1256.98,535.51 1254.41,490.59" fill="url(#g803)" class="pl"/><polygon points="1217.60,507.22 1256.98,535.51 1254.41,490.59" fill="url(#g804)" class="pl"/>
<polygon points="1205.14,550.47 1187.14,612.92 1260.69,600.41" fill="url(#g805)" class="pl"/><polygon points="1205.14,550.47 1187.14,612.92 1260.69,600.41" fill="url(#g806)" class="pl"/><polygon points="1205.14,550.47 1187.14,612.92 1260.69,600.41" fill="url(#g807)" class="pl"/>
<polygon points="1205.14,550.47 1260.69,600.41 1256.98,535.51" fill="url(#g808)" class="pl"/><polygon points="1205.14,550.47 1260.69,600.41 1256.98,535.51" fill="url(#g809)" class="pl"/><polygon points="1205.14,550.47 1260.69,600.41 1256.98,535.51" fill="url(#g810)" class="pl"/>
<polygon points="1187.14,612.92 1162.22,699.40 1265.84,690.26" fill="url(#g811)" class="pl"/><polygon points="1187.14,612.92 1162.22,699.40 1265.84,690.26" fill="url(#g812)" class="pl"/><polygon points="1187.14,612.92 1162.22,699.40 1265.84,690.26" fill="url(#g813)" class="pl"/>
<polygon points="1187.14,612.92 1265.84,690.26 1260.69,600.41" fill="url(#g814)" class="pl"/><polygon points="1187.14,612.92 1265.84,690.26 1260.69,600.41" fill="url(#g815)" class="pl"/><polygon points="1187.14,612.92 1265.84,690.26 1260.69,600.41" fill="url(#g816)" class="pl"/>
<polygon points="1162.22,699.40 1126.22,824.32 1273.26,820.05" fill="url(#g817)" class="pl"/><polygon points="1162.22,699.40 1126.22,824.32 1273.26,820.05" fill="url(#g818)" class="pl"/><polygon points="1162.22,699.40 1126.22,824.32 1273.26,820.05" fill="url(#g819)" class="pl"/>
<polygon points="1162.22,699.40 1273.26,820.05 1265.84,690.26" fill="url(#g820)" class="pl"/><polygon points="1162.22,699.40 1273.26,820.05 1265.84,690.26" fill="url(#g821)" class="pl"/><polygon points="1162.22,699.40 1273.26,820.05 1265.84,690.26" fill="url(#g822)" class="pl"/>
<polygon points="1126.22,824.32 1023.75,1179.85 1294.41,1189.44" fill="url(#g823)" class="pl"/><polygon points="1126.22,824.32 1023.75,1179.85 1294.41,1189.44" fill="url(#g824)" class="pl"/><polygon points="1126.22,824.32 1023.75,1179.85 1294.41,1189.44" fill="url(#g825)" class="pl"/>
<polygon points="1126.22,824.32 1294.41,1189.44 1273.26,820.05" fill="url(#g826)" class="pl"/><polygon points="1126.22,824.32 1294.41,1189.44 1273.26,820.05" fill="url(#g827)" class="pl"/><polygon points="1126.22,824.32 1294.41,1189.44 1273.26,820.05" fill="url(#g828)" class="pl"/>
<polygon points="1254.41,490.59 1256.98,535.51 1357.71,488.31" fill="url(#g829)" class="pl"/><polygon points="1254.41,490.59 1256.98,535.51 1357.71,488.31" fill="url(#g830)" class="pl"/><polygon points="1254.41,490.59 1256.98,535.51 1357.71,488.31" fill="url(#g831)" class="pl"/>
<polygon points="1254.41,490.59 1357.71,488.31 1323.12,459.52" fill="url(#g832)" class="pl"/><polygon points="1254.41,490.59 1357.71,488.31 1323.12,459.52" fill="url(#g833)" class="pl"/><polygon points="1254.41,490.59 1357.71,488.31 1323.12,459.52" fill="url(#g834)" class="pl"/>
<polygon points="1256.98,535.51 1260.69,600.41 1407.67,529.89" fill="url(#g835)" class="pl"/><polygon points="1256.98,535.51 1260.69,600.41 1407.67,529.89" fill="url(#g836)" class="pl"/><polygon points="1256.98,535.51 1260.69,600.41 1407.67,529.89" fill="url(#g837)" class="pl"/>
<polygon points="1256.98,535.51 1407.67,529.89 1357.71,488.31" fill="url(#g838)" class="pl"/><polygon points="1256.98,535.51 1407.67,529.89 1357.71,488.31" fill="url(#g839)" class="pl"/><polygon points="1256.98,535.51 1407.67,529.89 1357.71,488.31" fill="url(#g840)" class="pl"/>
<polygon points="1260.69,600.41 1265.84,690.26 1476.85,587.46" fill="url(#g841)" class="pl"/><polygon points="1260.69,600.41 1265.84,690.26 1476.85,587.46" fill="url(#g842)" class="pl"/><polygon points="1260.69,600.41 1265.84,690.26 1476.85,587.46" fill="url(#g843)" class="pl"/>
<polygon points="1260.69,600.41 1476.85,587.46 1407.67,529.89" fill="url(#g844)" class="pl"/><polygon points="1260.69,600.41 1476.85,587.46 1407.67,529.89" fill="url(#g845)" class="pl"/><polygon points="1260.69,600.41 1476.85,587.46 1407.67,529.89" fill="url(#g846)" class="pl"/>
<polygon points="1265.84,690.26 1273.26,820.05 1576.77,670.62" fill="url(#g847)" class="pl"/><polygon points="1265.84,690.26 1273.26,820.05 1576.77,670.62" fill="url(#g848)" class="pl"/><polygon points="1265.84,690.26 1273.26,820.05 1576.77,670.62" fill="url(#g849)" class="pl"/>
<polygon points="1265.84,690.26 1576.77,670.62 1476.85,587.46" fill="url(#g850)" class="pl"/><polygon points="1265.84,690.26 1576.77,670.62 1476.85,587.46" fill="url(#g851)" class="pl"/><polygon points="1265.84,690.26 1576.77,670.62 1476.85,587.46" fill="url(#g852)" class="pl"/>
<polygon points="1273.26,820.05 1294.41,1189.44 1861.17,907.30" fill="url(#g853)" class="pl"/><polygon points="1273.26,820.05 1294.41,1189.44 1861.17,907.30" fill="url(#g854)" class="pl"/><polygon points="1273.26,820.05 1294.41,1189.44 1861.17,907.30" fill="url(#g855)" class="pl"/>
<polygon points="1273.26,820.05 1861.17,907.30 1576.77,670.62" fill="url(#g856)" class="pl"/><polygon points="1273.26,820.05 1861.17,907.30 1576.77,670.62" fill="url(#g857)" class="pl"/><polygon points="1273.26,820.05 1861.17,907.30 1576.77,670.62" fill="url(#g858)" class="pl"/>
<polygon points="1323.12,459.52 1357.71,488.31 1435.83,437.88" fill="url(#g859)" class="pl"/><polygon points="1323.12,459.52 1357.71,488.31 1435.83,437.88" fill="url(#g860)" class="pl"/><polygon points="1323.12,459.52 1357.71,488.31 1435.83,437.88" fill="url(#g861)" class="pl"/>
<polygon points="1323.12,459.52 1435.83,437.88 1391.83,428.46" fill="url(#g862)" class="pl"/><polygon points="1323.12,459.52 1435.83,437.88 1391.83,428.46" fill="url(#g863)" class="pl"/><polygon points="1323.12,459.52 1435.83,437.88 1391.83,428.46" fill="url(#g864)" class="pl"/>
<polygon points="1357.71,488.31 1407.67,529.89 1499.40,451.47" fill="url(#g865)" class="pl"/><polygon points="1357.71,488.31 1407.67,529.89 1499.40,451.47" fill="url(#g866)" class="pl"/><polygon points="1357.71,488.31 1407.67,529.89 1499.40,451.47" fill="url(#g867)" class="pl"/>
<polygon points="1357.71,488.31 1499.40,451.47 1435.83,437.88" fill="url(#g868)" class="pl"/><polygon points="1357.71,488.31 1499.40,451.47 1435.83,437.88" fill="url(#g869)" class="pl"/><polygon points="1357.71,488.31 1499.40,451.47 1435.83,437.88" fill="url(#g870)" class="pl"/>
<polygon points="1407.67,529.89 1476.85,587.46 1587.40,470.30" fill="url(#g871)" class="pl"/><polygon points="1407.67,529.89 1476.85,587.46 1587.40,470.30" fill="url(#g872)" class="pl"/><polygon points="1407.67,529.89 1476.85,587.46 1587.40,470.30" fill="url(#g873)" class="pl"/>
<polygon points="1407.67,529.89 1587.40,470.30 1499.40,451.47" fill="url(#g874)" class="pl"/><polygon points="1407.67,529.89 1587.40,470.30 1499.40,451.47" fill="url(#g875)" class="pl"/><polygon points="1407.67,529.89 1587.40,470.30 1499.40,451.47" fill="url(#g876)" class="pl"/>
<polygon points="1476.85,587.46 1576.77,670.62 1714.53,497.50" fill="url(#g877)" class="pl"/><polygon points="1476.85,587.46 1576.77,670.62 1714.53,497.50" fill="url(#g878)" class="pl"/><polygon points="1476.85,587.46 1576.77,670.62 1714.53,497.50" fill="url(#g879)" class="pl"/>
<polygon points="1476.85,587.46 1714.53,497.50 1587.40,470.30" fill="url(#g880)" class="pl"/><polygon points="1476.85,587.46 1714.53,497.50 1587.40,470.30" fill="url(#g881)" class="pl"/><polygon points="1476.85,587.46 1714.53,497.50 1587.40,470.30" fill="url(#g882)" class="pl"/>
<polygon points="1576.77,670.62 1861.17,907.30 2076.34,574.90" fill="url(#g883)" class="pl"/><polygon points="1576.77,670.62 1861.17,907.30 2076.34,574.90" fill="url(#g884)" class="pl"/><polygon points="1576.77,670.62 1861.17,907.30 2076.34,574.90" fill="url(#g885)" class="pl"/>
<polygon points="1576.77,670.62 2076.34,574.90 1714.53,497.50" fill="url(#g886)" class="pl"/><polygon points="1576.77,670.62 2076.34,574.90 1714.53,497.50" fill="url(#g887)" class="pl"/><polygon points="1576.77,670.62 2076.34,574.90 1714.53,497.50" fill="url(#g888)" class="pl"/>
<polygon points="1391.83,428.46 1435.83,437.88 1505.54,397.29" fill="url(#g889)" class="pl"/><polygon points="1391.83,428.46 1435.83,437.88 1505.54,397.29" fill="url(#g890)" class="pl"/><polygon points="1391.83,428.46 1435.83,437.88 1505.54,397.29" fill="url(#g891)" class="pl"/>
<polygon points="1391.83,428.46 1505.54,397.29 1460.54,397.40" fill="url(#g892)" class="pl"/><polygon points="1391.83,428.46 1505.54,397.29 1460.54,397.40" fill="url(#g893)" class="pl"/><polygon points="1391.83,428.46 1505.54,397.29 1460.54,397.40" fill="url(#g894)" class="pl"/>
<polygon points="1435.83,437.88 1499.40,451.47 1570.54,397.12" fill="url(#g895)" class="pl"/><polygon points="1435.83,437.88 1499.40,451.47 1570.54,397.12" fill="url(#g896)" class="pl"/><polygon points="1435.83,437.88 1499.40,451.47 1570.54,397.12" fill="url(#g897)" class="pl"/>
<polygon points="1435.83,437.88 1570.54,397.12 1505.54,397.29" fill="url(#g898)" class="pl"/><polygon points="1435.83,437.88 1570.54,397.12 1505.54,397.29" fill="url(#g899)" class="pl"/><polygon points="1435.83,437.88 1570.54,397.12 1505.54,397.29" fill="url(#g900)" class="pl"/>
<polygon points="1499.40,451.47 1587.40,470.30 1660.54,396.90" fill="url(#g901)" class="pl"/><polygon points="1499.40,451.47 1587.40,470.30 1660.54,396.90" fill="url(#g902)" class="pl"/><polygon points="1499.40,451.47 1587.40,470.30 1660.54,396.90" fill="url(#g903)" class="pl"/>
<polygon points="1499.40,451.47 1660.54,396.90 1570.54,397.12" fill="url(#g904)" class="pl"/><polygon points="1499.40,451.47 1660.54,396.90 1570.54,397.12" fill="url(#g905)" class="pl"/><polygon points="1499.40,451.47 1660.54,396.90 1570.54,397.12" fill="url(#g906)" class="pl"/>
<polygon points="1587.40,470.30 1714.53,497.50 1790.54,396.57" fill="url(#g907)" class="pl"/><polygon points="1587.40,470.30 1714.53,497.50 1790.54,396.57" fill="url(#g908)" class="pl"/><polygon points="1587.40,470.30 1714.53,497.50 1790.54,396.57" fill="url(#g909)" class="pl"/>
<polygon points="1587.40,470.30 1790.54,396.57 1660.54,396.90" fill="url(#g910)" class="pl"/><polygon points="1587.40,470.30 1790.54,396.57 1660.54,396.90" fill="url(#g911)" class="pl"/><polygon points="1587.40,470.30 1790.54,396.57 1660.54,396.90" fill="url(#g912)" class="pl"/>
<polygon points="1714.53,497.50 2076.34,574.90 2160.54,395.65" fill="url(#g913)" class="pl"/><polygon points="1714.53,497.50 2076.34,574.90 2160.54,395.65" fill="url(#g914)" class="pl"/><polygon points="1714.53,497.50 2076.34,574.90 2160.54,395.65" fill="url(#g915)" class="pl"/>
<polygon points="1714.53,497.50 2160.54,395.65 1790.54,396.57" fill="url(#g916)" class="pl"/><polygon points="1714.53,497.50 2160.54,395.65 1790.54,396.57" fill="url(#g917)" class="pl"/><polygon points="1714.53,497.50 2160.54,395.65 1790.54,396.57" fill="url(#g918)" class="pl"/>
</g></g>
<rect x="1234.8" y="246.9" width="12" height="12" fill="none" stroke="#ffffff" stroke-width="1.4"/>
<rect x="1235.9" y="278.6" width="12" height="12" fill="none" stroke="#ffffff" stroke-width="1.4"/>
<rect x="1237.9" y="305.9" width="12" height="12" fill="none" stroke="#ffffff" stroke-width="1.4"/>
<rect x="1239.4" y="335.0" width="12" height="12" fill="none" stroke="#ffffff" stroke-width="1.4"/>
<rect x="1241.8" y="362.0" width="12" height="12" fill="none" stroke="#ffffff" stroke-width="1.4"/>
<rect x="1312.4" y="297.6" width="12" height="12" fill="none" stroke="#ffffff" stroke-width="1.4"/>
<rect x="1297.0" y="317.9" width="12" height="12" fill="none" stroke="#ffffff" stroke-width="1.4"/>
<rect x="1284.6" y="335.0" width="12" height="12" fill="none" stroke="#ffffff" stroke-width="1.4"/>
<rect x="1271.3" y="352.9" width="12" height="12" fill="none" stroke="#ffffff" stroke-width="1.4"/>
<rect x="1256.7" y="372.1" width="12" height="12" fill="none" stroke="#ffffff" stroke-width="1.4"/>
<rect x="1185.7" y="391.1" width="12" height="12" fill="none" stroke="#ffffff" stroke-width="1.4"/>
<rect x="1197.7" y="391.1" width="12" height="12" fill="none" stroke="#ffffff" stroke-width="1.4"/>
<rect x="1208.6" y="391.1" width="12" height="12" fill="none" stroke="#ffffff" stroke-width="1.4"/>
<rect x="1220.6" y="391.1" width="12" height="12" fill="none" stroke="#ffffff" stroke-width="1.4"/>
<rect x="1231.5" y="391.1" width="12" height="12" fill="none" stroke="#ffffff" stroke-width="1.4"/>
<rect x="1284.0" y="390.9" width="12" height="12" fill="none" stroke="#ffffff" stroke-width="1.4"/>
<rect x="1328.3" y="390.9" width="12" height="12" fill="none" stroke="#ffffff" stroke-width="1.4"/>
<rect x="1365.9" y="390.9" width="12" height="12" fill="none" stroke="#ffffff" stroke-width="1.4"/>
<rect x="1408.0" y="390.9" width="12" height="12" fill="none" stroke="#ffffff" stroke-width="1.4"/>
<rect x="1455.0" y="390.9" width="12" height="12" fill="none" stroke="#ffffff" stroke-width="1.4"/>
<rect x="1137.8" y="533.8" width="12" height="12" fill="none" stroke="#ffffff" stroke-width="1.4"/>
<rect x="1160.8" y="502.9" width="12" height="12" fill="none" stroke="#ffffff" stroke-width="1.4"/>
<rect x="1181.0" y="474.9" width="12" height="12" fill="none" stroke="#ffffff" stroke-width="1.4"/>
<rect x="1200.3" y="448.8" width="12" height="12" fill="none" stroke="#ffffff" stroke-width="1.4"/>
<rect x="1221.8" y="419.7" width="12" height="12" fill="none" stroke="#ffffff" stroke-width="1.4"/>
<rect x="1243.9" y="410.2" width="12" height="12" fill="none" stroke="#ffffff" stroke-width="1.4"/>
<rect x="1244.8" y="429.3" width="12" height="12" fill="none" stroke="#ffffff" stroke-width="1.4"/>
<rect x="1245.9" y="446.4" width="12" height="12" fill="none" stroke="#ffffff" stroke-width="1.4"/>
<rect x="1247.6" y="464.4" width="12" height="12" fill="none" stroke="#ffffff" stroke-width="1.4"/>
<rect x="1248.5" y="483.6" width="12" height="12" fill="none" stroke="#ffffff" stroke-width="1.4"/>
<rect x="1243" y="391" width="12" height="12" fill="none" stroke="#ffffff" stroke-width="1.6"/>
<rect x="1242.5" y="390.5" width="13" height="13" fill="none" stroke="#000" stroke-width="1.4"/>
<circle cx="1246.3" cy="244.9" r="4.5" fill="#1dd71d" stroke="#111" stroke-width="1.1"/>
<circle cx="1246.5" cy="282.9" r="4.5" fill="#69c669" stroke="#111" stroke-width="1.1"/>
<circle cx="1246.5" cy="316.9" r="4.5" fill="#7abf7a" stroke="#111" stroke-width="1.1"/>
<circle cx="1246.5" cy="345.3" r="4.5" fill="#92bf92" stroke="#111" stroke-width="1.1"/>
<circle cx="1247.4" cy="373.0" r="4.5" fill="#aec6ae" stroke="#111" stroke-width="1.1"/>
<circle cx="1320.5" cy="294.9" r="4.5" fill="#c8c400" stroke="#111" stroke-width="1.1"/>
<circle cx="1301.5" cy="321.3" r="4.5" fill="#d3d369" stroke="#111" stroke-width="1.1"/>
<circle cx="1287.3" cy="341.8" r="4.5" fill="#cece80" stroke="#111" stroke-width="1.1"/>
<circle cx="1273.6" cy="362.4" r="4.5" fill="#d3d3a3" stroke="#111" stroke-width="1.1"/>
<circle cx="1260.5" cy="381.2" r="4.5" fill="#d3d3b4" stroke="#111" stroke-width="1.1"/>
<circle cx="1194.3" cy="403.0" r="4.5" fill="#3bcec6" stroke="#111" stroke-width="1.1"/>
<circle cx="1206.3" cy="401.9" r="4.5" fill="#6fceca" stroke="#111" stroke-width="1.1"/>
<circle cx="1216.4" cy="401.9" r="4.5" fill="#89ceca" stroke="#111" stroke-width="1.1"/>
<circle cx="1227.3" cy="400.8" r="4.5" fill="#a3ceca" stroke="#111" stroke-width="1.1"/>
<circle cx="1237.3" cy="400.8" r="4.5" fill="#bdceca" stroke="#111" stroke-width="1.1"/>
<circle cx="1282.1" cy="398.2" r="4.5" fill="#d7a3a3" stroke="#111" stroke-width="1.1"/>
<circle cx="1320.5" cy="395.9" r="4.5" fill="#d78080" stroke="#111" stroke-width="1.1"/>
<circle cx="1359.5" cy="394.7" r="4.5" fill="#d76969" stroke="#111" stroke-width="1.1"/>
<circle cx="1409.5" cy="393.4" r="4.5" fill="#d75555" stroke="#111" stroke-width="1.1"/>
<circle cx="1458.6" cy="392.3" r="4.5" fill="#e41919" stroke="#111" stroke-width="1.1"/>
<circle cx="1146.2" cy="543.1" r="4.5" fill="#1919c6" stroke="#111" stroke-width="1.1"/>
<circle cx="1168.6" cy="510.7" r="4.5" fill="#5e5ed7" stroke="#111" stroke-width="1.1"/>
<circle cx="1190.3" cy="480.0" r="4.5" fill="#7a7ad7" stroke="#111" stroke-width="1.1"/>
<circle cx="1210.4" cy="453.3" r="4.5" fill="#9a9ad7" stroke="#111" stroke-width="1.1"/>
<circle cx="1228.4" cy="425.7" r="4.5" fill="#b4b4d7" stroke="#111" stroke-width="1.1"/>
<circle cx="1246.4" cy="417.5" r="4.5" fill="#d7b4d7" stroke="#111" stroke-width="1.1"/>
<circle cx="1246.4" cy="435.3" r="4.5" fill="#d7a3d7" stroke="#111" stroke-width="1.1"/>
<circle cx="1246.4" cy="451.1" r="4.5" fill="#d780d7" stroke="#111" stroke-width="1.1"/>
<circle cx="1247.3" cy="471.2" r="4.5" fill="#d75ed7" stroke="#111" stroke-width="1.1"/>
<circle cx="1247.3" cy="495.3" r="4.5" fill="#d72ad7" stroke="#111" stroke-width="1.1"/>
<circle cx="1245.6" cy="402.1" r="4.5" fill="#ffffff" stroke="#111" stroke-width="1.1"/>
<circle cx="1224.3" cy="426.9" r="4.5" fill="#000000" stroke="#111" stroke-width="1.1"/>
<rect x="1437" y="127" width="153" height="162" fill="url(#gInsA2)" />
<polygon points="1437,127 1590,127 1590,270.5 1437,143.3" fill="url(#gInsB)"/>
<rect x="1436.5" y="126.5" width="154" height="163" fill="none" stroke="#8a8a8a" stroke-width="2" />
<rect x="1507.5" y="202.1" width="12" height="12" fill="none" stroke="#ffffff" stroke-width="1.4"/>
<circle cx="1523.2" cy="155.0" r="4.5" fill="#c8c020" stroke="#111" stroke-width="1.1"/>
<rect x="1019" y="611" width="499" height="28" fill="url(#gTH)" />
<rect x="1019" y="611" width="16" height="28" fill="#000000" />
<text x="1176.7" y="630" font-size="16" fill="#f2f2f2" text-anchor="start" font-weight="normal" textLength="36.2" lengthAdjust="spacingAndGlyphs" >20%</text>
<text x="1245.6" y="630" font-size="16" fill="#f2f2f2" text-anchor="start" font-weight="normal" textLength="36.2" lengthAdjust="spacingAndGlyphs" >40%</text>
<text x="1315.6" y="630" font-size="16" fill="#f2f2f2" text-anchor="start" font-weight="normal" textLength="36.2" lengthAdjust="spacingAndGlyphs" >60%</text>
<text x="1385" y="630" font-size="16" fill="#f2f2f2" text-anchor="start" font-weight="normal" textLength="36.2" lengthAdjust="spacingAndGlyphs" >80%</text>
<text x="1454.5" y="630" font-size="16" fill="#f2f2f2" text-anchor="start" font-weight="normal" textLength="46.2" lengthAdjust="spacingAndGlyphs" >100%</text>
<rect x="1035" y="638.6" width="483" height="25" fill="#444444" />
<rect x="1019" y="638.6" width="16" height="25" fill="#222222" />
<text x="1040" y="656.8000000000001" font-size="16" fill="#f2f2f2" text-anchor="start" font-weight="normal" textLength="67" lengthAdjust="spacingAndGlyphs" >x: CIE31</text>
<text x="1176.7" y="656.8000000000001" font-size="16" fill="#f2f2f2" text-anchor="start" font-weight="normal" textLength="35.2" lengthAdjust="spacingAndGlyphs" >0.33</text>
<text x="1245.6" y="656.8000000000001" font-size="16" fill="#f2f2f2" text-anchor="start" font-weight="normal" textLength="35.2" lengthAdjust="spacingAndGlyphs" >0.35</text>
<text x="1315.6" y="656.8000000000001" font-size="16" fill="#f2f2f2" text-anchor="start" font-weight="normal" textLength="35.2" lengthAdjust="spacingAndGlyphs" >0.37</text>
<text x="1385" y="656.8000000000001" font-size="16" fill="#f2f2f2" text-anchor="start" font-weight="normal" textLength="35.2" lengthAdjust="spacingAndGlyphs" >0.39</text>
<text x="1454.5" y="656.8000000000001" font-size="16" fill="#f2f2f2" text-anchor="start" font-weight="normal" textLength="35.2" lengthAdjust="spacingAndGlyphs" >0.42</text>
<rect x="1035" y="663.6" width="483" height="25" fill="#808080" />
<rect x="1019" y="663.6" width="16" height="25" fill="#222222" />
<text x="1040" y="681.8000000000001" font-size="16" fill="#f2f2f2" text-anchor="start" font-weight="normal" textLength="68" lengthAdjust="spacingAndGlyphs" >y: CIE31</text>
<text x="1176.7" y="681.8000000000001" font-size="16" fill="#f2f2f2" text-anchor="start" font-weight="normal" textLength="35.2" lengthAdjust="spacingAndGlyphs" >0.36</text>
<text x="1245.6" y="681.8000000000001" font-size="16" fill="#f2f2f2" text-anchor="start" font-weight="normal" textLength="35.2" lengthAdjust="spacingAndGlyphs" >0.40</text>
<text x="1315.6" y="681.8000000000001" font-size="16" fill="#f2f2f2" text-anchor="start" font-weight="normal" textLength="35.2" lengthAdjust="spacingAndGlyphs" >0.43</text>
<text x="1385" y="681.8000000000001" font-size="16" fill="#f2f2f2" text-anchor="start" font-weight="normal" textLength="35.2" lengthAdjust="spacingAndGlyphs" >0.47</text>
<text x="1454.5" y="681.8000000000001" font-size="16" fill="#f2f2f2" text-anchor="start" font-weight="normal" textLength="35.2" lengthAdjust="spacingAndGlyphs" >0.52</text>
<rect x="1035" y="688.6" width="483" height="25" fill="#444444" />
<rect x="1019" y="688.6" width="16" height="25" fill="#222222" />
<text x="1040" y="706.8000000000001" font-size="16" fill="#f2f2f2" text-anchor="start" font-weight="normal" textLength="11" lengthAdjust="spacingAndGlyphs" >Y</text>
<text x="1176.7" y="706.8000000000001" font-size="16" fill="#f2f2f2" text-anchor="start" font-weight="normal" textLength="55.3" lengthAdjust="spacingAndGlyphs" >190.44</text>
<text x="1245.6" y="706.8000000000001" font-size="16" fill="#f2f2f2" text-anchor="start" font-weight="normal" textLength="55.3" lengthAdjust="spacingAndGlyphs" >187.39</text>
<text x="1315.6" y="706.8000000000001" font-size="16" fill="#f2f2f2" text-anchor="start" font-weight="normal" textLength="55.3" lengthAdjust="spacingAndGlyphs" >184.83</text>
<text x="1385" y="706.8000000000001" font-size="16" fill="#f2f2f2" text-anchor="start" font-weight="normal" textLength="55.3" lengthAdjust="spacingAndGlyphs" >182.66</text>
<text x="1454.5" y="706.8000000000001" font-size="16" fill="#f2f2f2" text-anchor="start" font-weight="normal" textLength="55.3" lengthAdjust="spacingAndGlyphs" >180.03</text>
<rect x="1035" y="713.6" width="483" height="25" fill="#808080" />
<rect x="1019" y="713.6" width="16" height="25" fill="#222222" />
<text x="1040" y="731.8000000000001" font-size="16" fill="#f2f2f2" text-anchor="start" font-weight="normal" textLength="122" lengthAdjust="spacingAndGlyphs" >Target x:CIE31</text>
<text x="1176.7" y="731.8000000000001" font-size="16" fill="#f2f2f2" text-anchor="start" font-weight="normal" textLength="35.2" lengthAdjust="spacingAndGlyphs" >0.33</text>
<text x="1245.6" y="731.8000000000001" font-size="16" fill="#f2f2f2" text-anchor="start" font-weight="normal" textLength="35.2" lengthAdjust="spacingAndGlyphs" >0.36</text>
<text x="1315.6" y="731.8000000000001" font-size="16" fill="#f2f2f2" text-anchor="start" font-weight="normal" textLength="35.2" lengthAdjust="spacingAndGlyphs" >0.38</text>
<text x="1385" y="731.8000000000001" font-size="16" fill="#f2f2f2" text-anchor="start" font-weight="normal" textLength="35.2" lengthAdjust="spacingAndGlyphs" >0.40</text>
<text x="1454.5" y="731.8000000000001" font-size="16" fill="#f2f2f2" text-anchor="start" font-weight="normal" textLength="35.2" lengthAdjust="spacingAndGlyphs" >0.42</text>
<rect x="1035" y="738.6" width="483" height="25" fill="#444444" />
<rect x="1019" y="738.6" width="16" height="25" fill="#222222" />
<text x="1040" y="756.8000000000001" font-size="16" fill="#f2f2f2" text-anchor="start" font-weight="normal" textLength="123" lengthAdjust="spacingAndGlyphs" >Target y:CIE31</text>
<text x="1176.7" y="756.8000000000001" font-size="16" fill="#f2f2f2" text-anchor="start" font-weight="normal" textLength="35.2" lengthAdjust="spacingAndGlyphs" >0.36</text>
<text x="1245.6" y="756.8000000000001" font-size="16" fill="#f2f2f2" text-anchor="start" font-weight="normal" textLength="35.2" lengthAdjust="spacingAndGlyphs" >0.40</text>
<text x="1315.6" y="756.8000000000001" font-size="16" fill="#f2f2f2" text-anchor="start" font-weight="normal" textLength="35.2" lengthAdjust="spacingAndGlyphs" >0.44</text>
<text x="1385" y="756.8000000000001" font-size="16" fill="#f2f2f2" text-anchor="start" font-weight="normal" textLength="35.2" lengthAdjust="spacingAndGlyphs" >0.47</text>
<text x="1454.5" y="756.8000000000001" font-size="16" fill="#f2f2f2" text-anchor="start" font-weight="normal" textLength="35.2" lengthAdjust="spacingAndGlyphs" >0.51</text>
<rect x="1035" y="763.6" width="483" height="25" fill="#808080" />
<rect x="1019" y="763.6" width="16" height="25" fill="#222222" />
<text x="1040" y="781.8000000000001" font-size="16" fill="#f2f2f2" text-anchor="start" font-weight="normal" textLength="72" lengthAdjust="spacingAndGlyphs" >Target Y</text>
<text x="1176.7" y="781.8000000000001" font-size="16" fill="#f2f2f2" text-anchor="start" font-weight="normal" textLength="55.3" lengthAdjust="spacingAndGlyphs" >127.73</text>
<text x="1245.6" y="781.8000000000001" font-size="16" fill="#f2f2f2" text-anchor="start" font-weight="normal" textLength="55.3" lengthAdjust="spacingAndGlyphs" >125.50</text>
<text x="1315.6" y="781.8000000000001" font-size="16" fill="#f2f2f2" text-anchor="start" font-weight="normal" textLength="55.3" lengthAdjust="spacingAndGlyphs" >123.78</text>
<text x="1385" y="781.8000000000001" font-size="16" fill="#f2f2f2" text-anchor="start" font-weight="normal" textLength="55.3" lengthAdjust="spacingAndGlyphs" >122.43</text>
<text x="1454.5" y="781.8000000000001" font-size="16" fill="#f2f2f2" text-anchor="start" font-weight="normal" textLength="55.3" lengthAdjust="spacingAndGlyphs" >121.12</text>
<text x="213" y="644" font-size="25" fill="#eeeeee" text-anchor="start" font-weight="normal" textLength="183" lengthAdjust="spacingAndGlyphs" >Current Reading</text>
<text x="213" y="680" font-size="20.5" fill="#eeeeee" text-anchor="start" font-weight="normal" textLength="86" lengthAdjust="spacingAndGlyphs" >x: 0.4229</text>
<text x="213" y="716.3" font-size="20.5" fill="#eeeeee" text-anchor="start" font-weight="normal" textLength="86" lengthAdjust="spacingAndGlyphs" >y: 0.5214</text>
<text x="213" y="752" font-size="20.5" fill="#eeeeee" text-anchor="start" font-weight="normal" textLength="93" lengthAdjust="spacingAndGlyphs" >fL: 52.545</text>
<text x="213" y="787.8" font-size="20.5" fill="#eeeeee" text-anchor="start" font-weight="normal" textLength="144" lengthAdjust="spacingAndGlyphs" >cd/m²: 180.034</text>
<rect x="201.5" y="808.5" width="44" height="66" rx="4" fill="url(#gTile)" stroke="#6a6a6a"/>
<circle cx="223" cy="816" r="7" fill="#6a6a6a"/>
<path d="M218.5,819 L223,813.5 L227.5,819 Z" fill="#2a2a2a"/>
<rect x="206" y="834.5" width="35" height="30" rx="3" fill="#ffff00"/>
<rect x="205.5" y="812.5" width="19" height="51" fill="none" stroke="#222" stroke-width="1" stroke-dasharray="2,2"/>
<rect x="252.5" y="808.5" width="149" height="66" rx="5" fill="url(#gTile)" stroke="#5a5a5a"/>
<rect x="257.5" y="813.25" width="139.5" height="36" rx="3" fill="#c1c1a4" stroke="#8a8a70" stroke-width="1"/>
<text x="327" y="864" font-size="10.5" fill="#2a2a2a" text-anchor="middle" font-weight="normal" >20%</text>
<rect x="404.5" y="808.5" width="149" height="66" rx="5" fill="url(#gTile)" stroke="#5a5a5a"/>
<rect x="409.5" y="813.25" width="139.5" height="36" rx="3" fill="#c1c188" stroke="#8a8a70" stroke-width="1"/>
<text x="479" y="864" font-size="10.5" fill="#2a2a2a" text-anchor="middle" font-weight="normal" >40%</text>
<rect x="556.5" y="808.5" width="149" height="66" rx="5" fill="url(#gTile)" stroke="#5a5a5a"/>
<rect x="561.5" y="813.25" width="139.5" height="36" rx="3" fill="#bfbf6b" stroke="#8a8a70" stroke-width="1"/>
<text x="631" y="864" font-size="10.5" fill="#2a2a2a" text-anchor="middle" font-weight="normal" >60%</text>
<rect x="708.5" y="808.5" width="149" height="66" rx="5" fill="url(#gTile)" stroke="#5a5a5a"/>
<rect x="713.5" y="813.25" width="139.5" height="36" rx="3" fill="#c0c04e" stroke="#8a8a70" stroke-width="1"/>
<text x="783" y="864" font-size="10.5" fill="#2a2a2a" text-anchor="middle" font-weight="normal" >80%</text>
<rect x="861" y="809" width="148" height="64" rx="5" fill="#303030" stroke="#1c1c1c" stroke-width="2.5"/>
<rect x="865" y="813.25" width="140" height="36" rx="3" fill="#c3c000"/>
<text x="935" y="864" font-size="10.5" fill="#ffffff" text-anchor="middle" font-weight="bold" >100%</text>
<rect x="1010" y="808" width="267" height="62" fill="url(#gTB)" />
<rect x="1277.5" y="808.5" width="47" height="17" rx="4" fill="url(#gCtl)" stroke="#555"/>
<circle cx="1301" cy="817" r="7" fill="#7a7a7a"/><path d="M1297,819.5 L1301,815 L1305,819.5 Z" fill="#222"/>
<rect x="1277.5" y="826.5" width="47" height="45" rx="4" fill="url(#gCtl)" stroke="#555"/>
<rect x="1286.5" y="832.5" width="28" height="30" rx="4" fill="none" stroke="#222" stroke-width="2.5"/>
<rect x="1293" y="840" width="16" height="15" fill="#000"/>
<path d="M1326.5,837 V812 Q1326.5,808.5 1330,808.5 H1552 V837 Z" fill="url(#gCtl2)"/>
<line x1="1371.5" y1="808" x2="1371.5" y2="837" stroke="#3a3a3a" stroke-width="1" />
<line x1="1416.5" y1="808" x2="1416.5" y2="837" stroke="#3a3a3a" stroke-width="1" />
<line x1="1461.5" y1="808" x2="1461.5" y2="837" stroke="#3a3a3a" stroke-width="1" />
<line x1="1506.5" y1="808" x2="1506.5" y2="837" stroke="#3a3a3a" stroke-width="1" />
<circle cx="1348.6" cy="822.8" r="10" fill="url(#gCirc)"/>
<circle cx="1393.8" cy="822.8" r="10" fill="url(#gCirc)"/>
<circle cx="1439.0" cy="822.8" r="10" fill="url(#gCirc)"/>
<circle cx="1484.2" cy="822.8" r="10" fill="url(#gCirc)"/>
<circle cx="1529.4" cy="822.8" r="10" fill="url(#gCirc)"/>
<path d="M1552,808.5 H1594 Q1597.5,808.5 1597.5,812 V837 H1552 Z" fill="#2c2c2c"/>
<circle cx="1575" cy="822.8" r="10" fill="url(#gCircD)"/><path d="M1570.5,822.5 L1574.2,826.3 L1580.5,818.5" fill="none" stroke="#151515" stroke-width="3.3"/>
<rect x="1345" y="818.5" width="7.5" height="8" fill="#1e1e1e"/>
<path d="M1391.5,817.2 L1400.5,823 L1391.5,828.8 Z" fill="#1e1e1e"/>
<path d="M1434.5,818 H1432.5 V828.5 H1434.5 M1444.5,818 H1446.5 V828.5 H1444.5" fill="none" stroke="#1e1e1e" stroke-width="1.8"/>
<rect x="1436" y="822.3" width="1.6" height="1.6" fill="#1e1e1e"/><rect x="1438.6" y="822.3" width="1.6" height="1.6" fill="#1e1e1e"/><rect x="1441.2" y="822.3" width="1.6" height="1.6" fill="#1e1e1e"/>
<path d="M1484.7,822.8 C1482.5,819.5 1478.5,819.5 1478.5,822.8 C1478.5,826 1482.5,826 1484.7,822.8 C1486.9,819.5 1490.9,819.5 1490.9,822.8 C1490.9,826 1486.9,826 1484.7,822.8 Z" fill="none" stroke="#1e1e1e" stroke-width="1.9"/>
<path d="M1524.5,823.5 A5.5,5.5 0 0 1 1534,818.5 M1535.3,822 A5.5,5.5 0 0 1 1526,827.3" fill="none" stroke="#1e1e1e" stroke-width="2.2"/>
<path d="M1532,816 L1536.5,816.5 L1535,820.5 Z M1528,829.5 L1523.5,829 L1525,825 Z" fill="#1e1e1e"/>
<path d="M1326.5,871 V843 Q1326.5,839.5 1330,839.5 H1593 Q1597.5,839.5 1597.5,844 V871 Z" fill="url(#gCtl2)" stroke="#4a4a4a"/>
<line x1="1462.5" y1="839" x2="1462.5" y2="870" stroke="#3a3a3a" stroke-width="1" />
<circle cx="1356.5" cy="854" r="10" fill="url(#gCirc)"/><circle cx="1570" cy="854" r="10" fill="url(#gCirc)"/>
<path d="M1357.5,849.8 L1353.3,854.2 L1357.5,858.6 M1361.3,849.8 L1357.1,854.2 L1361.3,858.6" fill="none" stroke="#1e1e1e" stroke-width="1.6"/>
<path d="M1566.2,849.8 L1570.4,854.2 L1566.2,858.6 M1570,849.8 L1574.2,854.2 L1570,858.6" fill="none" stroke="#1e1e1e" stroke-width="1.6"/>
<text x="1408.7" y="861.8" font-size="23" fill="#2a2a2a" text-anchor="middle" font-weight="normal" textLength="50" lengthAdjust="spacingAndGlyphs" stroke="#2a2a2a" stroke-width="0.6">Back</text>
<text x="1516.2" y="861.8" font-size="23" fill="#2a2a2a" text-anchor="middle" font-weight="normal" textLength="51" lengthAdjust="spacingAndGlyphs" stroke="#2a2a2a" stroke-width="0.6">Next</text>
<circle cx="26.5" cy="881" r="16" fill="#c4d6e4" stroke="#0a4a80" stroke-width="1.3"/>
</svg></body></html>
